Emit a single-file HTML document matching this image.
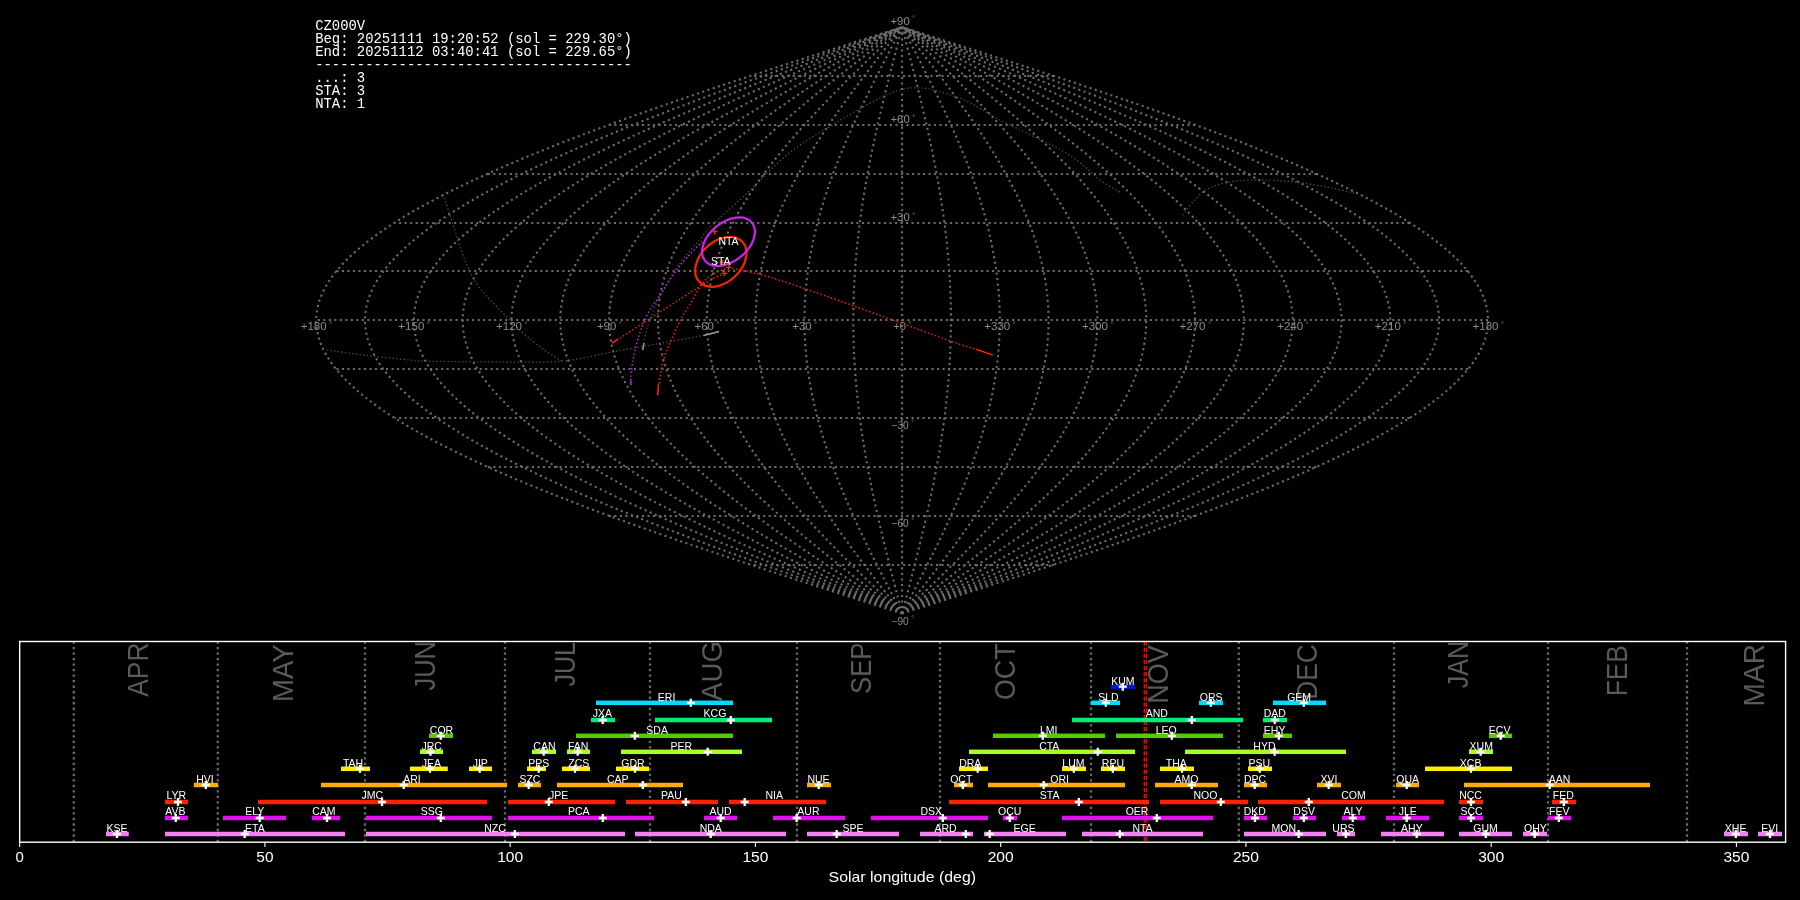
<!DOCTYPE html><html><head><meta charset="utf-8"><style>html,body{margin:0;padding:0;background:#000;width:1800px;height:900px;overflow:hidden}svg{display:block;will-change:transform}text{font-family:"Liberation Sans",sans-serif}.mono{font-family:"Liberation Mono",monospace}</style></head><body>
<svg width="1800" height="900" viewBox="0 0 1800 900">
<rect width="1800" height="900" fill="#000"/>
<path d="M902.1 613.55 L907.21 611.92 L912.33 610.29 L917.44 608.66 L922.55 607.03 L927.66 605.4 L932.76 603.77 L937.87 602.14 L942.97 600.51 L948.07 598.88 L953.16 597.26 L958.26 595.63 L963.34 594 L968.43 592.37 L973.5 590.74 L978.58 589.11 L983.64 587.48 L988.7 585.85 L993.75 584.22 L998.8 582.59 L1003.84 580.96 L1008.87 579.33 L1013.89 577.71 L1018.91 576.08 L1023.92 574.45 L1028.91 572.82 L1033.9 571.19 L1038.88 569.56 L1043.84 567.93 L1048.8 566.3 L1053.74 564.67 L1058.67 563.04 L1063.6 561.41 L1068.5 559.79 L1073.4 558.16 L1078.28 556.53 L1083.15 554.9 L1088.01 553.27 L1092.85 551.64 L1097.68 550.01 L1102.49 548.38 L1107.29 546.75 L1112.07 545.12 L1116.83 543.49 L1121.58 541.86 L1126.31 540.24 L1131.03 538.61 L1135.73 536.98 L1140.41 535.35 L1145.07 533.72 L1149.71 532.09 L1154.34 530.46 L1158.94 528.83 L1163.53 527.2 L1168.09 525.57 L1172.64 523.94 L1177.16 522.31 L1181.67 520.69 L1186.15 519.06 L1190.61 517.43 L1195.05 515.8 L1199.47 514.17 L1203.86 512.54 L1208.23 510.91 L1212.58 509.28 L1216.9 507.65 L1221.2 506.02 L1225.48 504.39 L1229.73 502.76 L1233.96 501.14 L1238.16 499.51 L1242.33 497.88 L1246.48 496.25 L1250.61 494.62 L1254.7 492.99 L1258.77 491.36 L1262.82 489.73 L1266.83 488.1 L1270.82 486.47 L1274.78 484.84 L1278.71 483.22 L1282.61 481.59 L1286.48 479.96 L1290.33 478.33 L1294.14 476.7 L1297.93 475.07 L1301.68 473.44 L1305.41 471.81 L1309.1 470.18 L1312.76 468.55 L1316.39 466.92 L1319.99 465.29 L1323.56 463.67 L1327.1 462.04 L1330.6 460.41 L1334.07 458.78 L1337.51 457.15 L1340.91 455.52 L1344.28 453.89 L1347.62 452.26 L1350.93 450.63 L1354.19 449 L1357.43 447.37 L1360.63 445.74 L1363.8 444.12 L1366.93 442.49 L1370.02 440.86 L1373.08 439.23 L1376.1 437.6 L1379.09 435.97 L1382.04 434.34 L1384.96 432.71 L1387.83 431.08 L1390.67 429.45 L1393.48 427.82 L1396.24 426.19 L1398.97 424.57 L1401.66 422.94 L1404.31 421.31 L1406.93 419.68 L1409.5 418.05 L1412.04 416.42 L1414.54 414.79 L1417 413.16 L1419.42 411.53 L1421.8 409.9 L1424.14 408.27 L1426.44 406.64 L1428.7 405.02 L1430.92 403.39 L1433.11 401.76 L1435.25 400.13 L1437.35 398.5 L1439.41 396.87 L1441.42 395.24 L1443.4 393.61 L1445.34 391.98 L1447.23 390.35 L1449.08 388.72 L1450.9 387.1 L1452.67 385.47 L1454.39 383.84 L1456.08 382.21 L1457.72 380.58 L1459.32 378.95 L1460.88 377.32 L1462.4 375.69 L1463.87 374.06 L1465.3 372.43 L1466.69 370.8 L1468.04 369.17 L1469.34 367.55 L1470.6 365.92 L1471.81 364.29 L1472.98 362.66 L1474.11 361.03 L1475.2 359.4 L1476.24 357.77 L1477.24 356.14 L1478.19 354.51 L1479.1 352.88 L1479.96 351.25 L1480.79 349.62 L1481.56 348 L1482.3 346.37 L1482.99 344.74 L1483.63 343.11 L1484.23 341.48 L1484.79 339.85 L1485.3 338.22 L1485.77 336.59 L1486.19 334.96 L1486.57 333.33 L1486.91 331.7 L1487.2 330.07 L1487.44 328.45 L1487.64 326.82 L1487.8 325.19 L1487.91 323.56 L1487.98 321.93 L1488 320.3 L1487.98 318.67 L1487.91 317.04 L1487.8 315.41 L1487.64 313.78 L1487.44 312.15 L1487.2 310.53 L1486.91 308.9 L1486.57 307.27 L1486.19 305.64 L1485.77 304.01 L1485.3 302.38 L1484.79 300.75 L1484.23 299.12 L1483.63 297.49 L1482.99 295.86 L1482.3 294.23 L1481.56 292.6 L1480.79 290.98 L1479.96 289.35 L1479.1 287.72 L1478.19 286.09 L1477.24 284.46 L1476.24 282.83 L1475.2 281.2 L1474.11 279.57 L1472.98 277.94 L1471.81 276.31 L1470.6 274.68 L1469.34 273.05 L1468.04 271.43 L1466.69 269.8 L1465.3 268.17 L1463.87 266.54 L1462.4 264.91 L1460.88 263.28 L1459.32 261.65 L1457.72 260.02 L1456.08 258.39 L1454.39 256.76 L1452.67 255.13 L1450.9 253.5 L1449.08 251.88 L1447.23 250.25 L1445.34 248.62 L1443.4 246.99 L1441.42 245.36 L1439.41 243.73 L1437.35 242.1 L1435.25 240.47 L1433.11 238.84 L1430.92 237.21 L1428.7 235.58 L1426.44 233.96 L1424.14 232.33 L1421.8 230.7 L1419.42 229.07 L1417 227.44 L1414.54 225.81 L1412.04 224.18 L1409.5 222.55 L1406.93 220.92 L1404.31 219.29 L1401.66 217.66 L1398.97 216.03 L1396.24 214.41 L1393.48 212.78 L1390.67 211.15 L1387.83 209.52 L1384.96 207.89 L1382.04 206.26 L1379.09 204.63 L1376.1 203 L1373.08 201.37 L1370.02 199.74 L1366.93 198.11 L1363.8 196.48 L1360.63 194.86 L1357.43 193.23 L1354.19 191.6 L1350.93 189.97 L1347.62 188.34 L1344.28 186.71 L1340.91 185.08 L1337.51 183.45 L1334.07 181.82 L1330.6 180.19 L1327.1 178.56 L1323.56 176.93 L1319.99 175.31 L1316.39 173.68 L1312.76 172.05 L1309.1 170.42 L1305.41 168.79 L1301.68 167.16 L1297.93 165.53 L1294.14 163.9 L1290.33 162.27 L1286.48 160.64 L1282.61 159.01 L1278.71 157.38 L1274.78 155.76 L1270.82 154.13 L1266.83 152.5 L1262.82 150.87 L1258.77 149.24 L1254.7 147.61 L1250.61 145.98 L1246.48 144.35 L1242.33 142.72 L1238.16 141.09 L1233.96 139.46 L1229.73 137.84 L1225.48 136.21 L1221.2 134.58 L1216.9 132.95 L1212.58 131.32 L1208.23 129.69 L1203.86 128.06 L1199.47 126.43 L1195.05 124.8 L1190.61 123.17 L1186.15 121.54 L1181.67 119.91 L1177.16 118.29 L1172.64 116.66 L1168.09 115.03 L1163.53 113.4 L1158.94 111.77 L1154.34 110.14 L1149.71 108.51 L1145.07 106.88 L1140.41 105.25 L1135.73 103.62 L1131.03 101.99 L1126.31 100.36 L1121.58 98.74 L1116.83 97.11 L1112.07 95.48 L1107.29 93.85 L1102.49 92.22 L1097.68 90.59 L1092.85 88.96 L1088.01 87.33 L1083.15 85.7 L1078.28 84.07 L1073.4 82.44 L1068.5 80.81 L1063.6 79.19 L1058.67 77.56 L1053.74 75.93 L1048.8 74.3 L1043.84 72.67 L1038.88 71.04 L1033.9 69.41 L1028.91 67.78 L1023.92 66.15 L1018.91 64.52 L1013.89 62.89 L1008.87 61.27 L1003.84 59.64 L998.8 58.01 L993.75 56.38 L988.7 54.75 L983.64 53.12 L978.58 51.49 L973.5 49.86 L968.43 48.23 L963.34 46.6 L958.26 44.97 L953.16 43.34 L948.07 41.72 L942.97 40.09 L937.87 38.46 L932.76 36.83 L927.66 35.2 L922.55 33.57 L917.44 31.94 L912.33 30.31 L907.21 28.68 L902.1 27.05 M902.1 613.55 L906.79 611.92 L911.47 610.29 L916.16 608.66 L920.84 607.03 L925.53 605.4 L930.21 603.77 L934.89 602.14 L939.56 600.51 L944.24 598.88 L948.91 597.26 L953.58 595.63 L958.24 594 L962.9 592.37 L967.55 590.74 L972.2 589.11 L976.85 587.48 L981.48 585.85 L986.12 584.22 L990.74 582.59 L995.36 580.96 L999.97 579.33 L1004.58 577.71 L1009.18 576.08 L1013.76 574.45 L1018.34 572.82 L1022.92 571.19 L1027.48 569.56 L1032.03 567.93 L1036.57 566.3 L1041.11 564.67 L1045.63 563.04 L1050.14 561.41 L1054.64 559.79 L1059.13 558.16 L1063.6 556.53 L1068.07 554.9 L1072.52 553.27 L1076.95 551.64 L1081.38 550.01 L1085.79 548.38 L1090.19 546.75 L1094.57 545.12 L1098.94 543.49 L1103.29 541.86 L1107.63 540.24 L1111.95 538.61 L1116.26 536.98 L1120.55 535.35 L1124.82 533.72 L1129.08 532.09 L1133.32 530.46 L1137.54 528.83 L1141.74 527.2 L1145.93 525.57 L1150.09 523.94 L1154.24 522.31 L1158.37 520.69 L1162.48 519.06 L1166.57 517.43 L1170.64 515.8 L1174.69 514.17 L1178.71 512.54 L1182.72 510.91 L1186.71 509.28 L1190.67 507.65 L1194.61 506.02 L1198.53 504.39 L1202.43 502.76 L1206.3 501.14 L1210.15 499.51 L1213.98 497.88 L1217.78 496.25 L1221.56 494.62 L1225.32 492.99 L1229.05 491.36 L1232.76 489.73 L1236.44 488.1 L1240.09 486.47 L1243.72 484.84 L1247.33 483.22 L1250.9 481.59 L1254.45 479.96 L1257.98 478.33 L1261.47 476.7 L1264.94 475.07 L1268.38 473.44 L1271.8 471.81 L1275.18 470.18 L1278.54 468.55 L1281.87 466.92 L1285.17 465.29 L1288.44 463.67 L1291.68 462.04 L1294.89 460.41 L1298.07 458.78 L1301.22 457.15 L1304.35 455.52 L1307.44 453.89 L1310.5 452.26 L1313.52 450.63 L1316.52 449 L1319.49 447.37 L1322.42 445.74 L1325.32 444.12 L1328.19 442.49 L1331.03 440.86 L1333.83 439.23 L1336.6 437.6 L1339.34 435.97 L1342.05 434.34 L1344.72 432.71 L1347.36 431.08 L1349.96 429.45 L1352.53 427.82 L1355.06 426.19 L1357.57 424.57 L1360.03 422.94 L1362.46 421.31 L1364.86 419.68 L1367.22 418.05 L1369.55 416.42 L1371.84 414.79 L1374.09 413.16 L1376.31 411.53 L1378.49 409.9 L1380.64 408.27 L1382.75 406.64 L1384.82 405.02 L1386.86 403.39 L1388.86 401.76 L1390.82 400.13 L1392.74 398.5 L1394.63 396.87 L1396.48 395.24 L1398.29 393.61 L1400.07 391.98 L1401.8 390.35 L1403.5 388.72 L1405.16 387.1 L1406.79 385.47 L1408.37 383.84 L1409.91 382.21 L1411.42 380.58 L1412.89 378.95 L1414.32 377.32 L1415.71 375.69 L1417.06 374.06 L1418.37 372.43 L1419.64 370.8 L1420.87 369.17 L1422.07 367.55 L1423.22 365.92 L1424.34 364.29 L1425.41 362.66 L1426.44 361.03 L1427.44 359.4 L1428.39 357.77 L1429.31 356.14 L1430.18 354.51 L1431.02 352.88 L1431.81 351.25 L1432.56 349.62 L1433.28 348 L1433.95 346.37 L1434.58 344.74 L1435.17 343.11 L1435.72 341.48 L1436.23 339.85 L1436.7 338.22 L1437.13 336.59 L1437.52 334.96 L1437.87 333.33 L1438.17 331.7 L1438.44 330.07 L1438.66 328.45 L1438.85 326.82 L1438.99 325.19 L1439.09 323.56 L1439.15 321.93 L1439.17 320.3 L1439.15 318.67 L1439.09 317.04 L1438.99 315.41 L1438.85 313.78 L1438.66 312.15 L1438.44 310.53 L1438.17 308.9 L1437.87 307.27 L1437.52 305.64 L1437.13 304.01 L1436.7 302.38 L1436.23 300.75 L1435.72 299.12 L1435.17 297.49 L1434.58 295.86 L1433.95 294.23 L1433.28 292.6 L1432.56 290.98 L1431.81 289.35 L1431.02 287.72 L1430.18 286.09 L1429.31 284.46 L1428.39 282.83 L1427.44 281.2 L1426.44 279.57 L1425.41 277.94 L1424.34 276.31 L1423.22 274.68 L1422.07 273.05 L1420.87 271.43 L1419.64 269.8 L1418.37 268.17 L1417.06 266.54 L1415.71 264.91 L1414.32 263.28 L1412.89 261.65 L1411.42 260.02 L1409.91 258.39 L1408.37 256.76 L1406.79 255.13 L1405.16 253.5 L1403.5 251.88 L1401.8 250.25 L1400.07 248.62 L1398.29 246.99 L1396.48 245.36 L1394.63 243.73 L1392.74 242.1 L1390.82 240.47 L1388.86 238.84 L1386.86 237.21 L1384.82 235.58 L1382.75 233.96 L1380.64 232.33 L1378.49 230.7 L1376.31 229.07 L1374.09 227.44 L1371.84 225.81 L1369.55 224.18 L1367.22 222.55 L1364.86 220.92 L1362.46 219.29 L1360.03 217.66 L1357.57 216.03 L1355.06 214.41 L1352.53 212.78 L1349.96 211.15 L1347.36 209.52 L1344.72 207.89 L1342.05 206.26 L1339.34 204.63 L1336.6 203 L1333.83 201.37 L1331.03 199.74 L1328.19 198.11 L1325.32 196.48 L1322.42 194.86 L1319.49 193.23 L1316.52 191.6 L1313.52 189.97 L1310.5 188.34 L1307.44 186.71 L1304.35 185.08 L1301.22 183.45 L1298.07 181.82 L1294.89 180.19 L1291.68 178.56 L1288.44 176.93 L1285.17 175.31 L1281.87 173.68 L1278.54 172.05 L1275.18 170.42 L1271.8 168.79 L1268.38 167.16 L1264.94 165.53 L1261.47 163.9 L1257.98 162.27 L1254.45 160.64 L1250.9 159.01 L1247.33 157.38 L1243.72 155.76 L1240.09 154.13 L1236.44 152.5 L1232.76 150.87 L1229.05 149.24 L1225.32 147.61 L1221.56 145.98 L1217.78 144.35 L1213.98 142.72 L1210.15 141.09 L1206.3 139.46 L1202.43 137.84 L1198.53 136.21 L1194.61 134.58 L1190.67 132.95 L1186.71 131.32 L1182.72 129.69 L1178.71 128.06 L1174.69 126.43 L1170.64 124.8 L1166.57 123.17 L1162.48 121.54 L1158.37 119.91 L1154.24 118.29 L1150.09 116.66 L1145.93 115.03 L1141.74 113.4 L1137.54 111.77 L1133.32 110.14 L1129.08 108.51 L1124.82 106.88 L1120.55 105.25 L1116.26 103.62 L1111.95 101.99 L1107.63 100.36 L1103.29 98.74 L1098.94 97.11 L1094.57 95.48 L1090.19 93.85 L1085.79 92.22 L1081.38 90.59 L1076.95 88.96 L1072.52 87.33 L1068.07 85.7 L1063.6 84.07 L1059.13 82.44 L1054.64 80.81 L1050.14 79.19 L1045.63 77.56 L1041.11 75.93 L1036.57 74.3 L1032.03 72.67 L1027.48 71.04 L1022.92 69.41 L1018.34 67.78 L1013.76 66.15 L1009.18 64.52 L1004.58 62.89 L999.97 61.27 L995.36 59.64 L990.74 58.01 L986.12 56.38 L981.48 54.75 L976.85 53.12 L972.2 51.49 L967.55 49.86 L962.9 48.23 L958.24 46.6 L953.58 44.97 L948.91 43.34 L944.24 41.72 L939.56 40.09 L934.89 38.46 L930.21 36.83 L925.53 35.2 L920.84 33.57 L916.16 31.94 L911.47 30.31 L906.79 28.68 L902.1 27.05 M902.1 613.55 L906.36 611.92 L910.62 610.29 L914.88 608.66 L919.14 607.03 L923.4 605.4 L927.65 603.77 L931.91 602.14 L936.16 600.51 L940.41 598.88 L944.65 597.26 L948.9 595.63 L953.14 594 L957.37 592.37 L961.6 590.74 L965.83 589.11 L970.05 587.48 L974.27 585.85 L978.48 584.22 L982.68 582.59 L986.88 580.96 L991.08 579.33 L995.26 577.71 L999.44 576.08 L1003.61 574.45 L1007.78 572.82 L1011.93 571.19 L1016.08 569.56 L1020.22 567.93 L1024.35 566.3 L1028.47 564.67 L1032.58 563.04 L1036.68 561.41 L1040.77 559.79 L1044.85 558.16 L1048.92 556.53 L1052.98 554.9 L1057.02 553.27 L1061.06 551.64 L1065.08 550.01 L1069.09 548.38 L1073.09 546.75 L1077.07 545.12 L1081.04 543.49 L1085 541.86 L1088.95 540.24 L1092.87 538.61 L1096.79 536.98 L1100.69 535.35 L1104.57 533.72 L1108.44 532.09 L1112.3 530.46 L1116.13 528.83 L1119.96 527.2 L1123.76 525.57 L1127.55 523.94 L1131.32 522.31 L1135.07 520.69 L1138.81 519.06 L1142.53 517.43 L1146.23 515.8 L1149.91 514.17 L1153.57 512.54 L1157.21 510.91 L1160.83 509.28 L1164.44 507.65 L1168.02 506.02 L1171.58 504.39 L1175.13 502.76 L1178.65 501.14 L1182.15 499.51 L1185.63 497.88 L1189.09 496.25 L1192.52 494.62 L1195.94 492.99 L1199.33 491.36 L1202.7 489.73 L1206.04 488.1 L1209.37 486.47 L1212.67 484.84 L1215.94 483.22 L1219.19 481.59 L1222.42 479.96 L1225.62 478.33 L1228.8 476.7 L1231.96 475.07 L1235.09 473.44 L1238.19 471.81 L1241.27 470.18 L1244.32 468.55 L1247.34 466.92 L1250.34 465.29 L1253.32 463.67 L1256.26 462.04 L1259.18 460.41 L1262.08 458.78 L1264.94 457.15 L1267.78 455.52 L1270.59 453.89 L1273.37 452.26 L1276.12 450.63 L1278.85 449 L1281.54 447.37 L1284.21 445.74 L1286.85 444.12 L1289.45 442.49 L1292.03 440.86 L1294.58 439.23 L1297.1 437.6 L1299.59 435.97 L1302.05 434.34 L1304.48 432.71 L1306.88 431.08 L1309.24 429.45 L1311.58 427.82 L1313.89 426.19 L1316.16 424.57 L1318.4 422.94 L1320.61 421.31 L1322.79 419.68 L1324.94 418.05 L1327.05 416.42 L1329.13 414.79 L1331.18 413.16 L1333.2 411.53 L1335.18 409.9 L1337.13 408.27 L1339.05 406.64 L1340.94 405.02 L1342.79 403.39 L1344.6 401.76 L1346.39 400.13 L1348.14 398.5 L1349.85 396.87 L1351.54 395.24 L1353.18 393.61 L1354.8 391.98 L1356.38 390.35 L1357.92 388.72 L1359.43 387.1 L1360.9 385.47 L1362.34 383.84 L1363.75 382.21 L1365.12 380.58 L1366.45 378.95 L1367.75 377.32 L1369.02 375.69 L1370.24 374.06 L1371.44 372.43 L1372.59 370.8 L1373.71 369.17 L1374.8 367.55 L1375.85 365.92 L1376.86 364.29 L1377.84 362.66 L1378.78 361.03 L1379.68 359.4 L1380.55 357.77 L1381.38 356.14 L1382.17 354.51 L1382.93 352.88 L1383.65 351.25 L1384.34 349.62 L1384.99 348 L1385.6 346.37 L1386.17 344.74 L1386.71 343.11 L1387.21 341.48 L1387.68 339.85 L1388.1 338.22 L1388.49 336.59 L1388.84 334.96 L1389.16 333.33 L1389.44 331.7 L1389.68 330.07 L1389.89 328.45 L1390.05 326.82 L1390.18 325.19 L1390.28 323.56 L1390.33 321.93 L1390.35 320.3 L1390.33 318.67 L1390.28 317.04 L1390.18 315.41 L1390.05 313.78 L1389.89 312.15 L1389.68 310.53 L1389.44 308.9 L1389.16 307.27 L1388.84 305.64 L1388.49 304.01 L1388.1 302.38 L1387.68 300.75 L1387.21 299.12 L1386.71 297.49 L1386.17 295.86 L1385.6 294.23 L1384.99 292.6 L1384.34 290.98 L1383.65 289.35 L1382.93 287.72 L1382.17 286.09 L1381.38 284.46 L1380.55 282.83 L1379.68 281.2 L1378.78 279.57 L1377.84 277.94 L1376.86 276.31 L1375.85 274.68 L1374.8 273.05 L1373.71 271.43 L1372.59 269.8 L1371.44 268.17 L1370.24 266.54 L1369.02 264.91 L1367.75 263.28 L1366.45 261.65 L1365.12 260.02 L1363.75 258.39 L1362.34 256.76 L1360.9 255.13 L1359.43 253.5 L1357.92 251.88 L1356.38 250.25 L1354.8 248.62 L1353.18 246.99 L1351.54 245.36 L1349.85 243.73 L1348.14 242.1 L1346.39 240.47 L1344.6 238.84 L1342.79 237.21 L1340.94 235.58 L1339.05 233.96 L1337.13 232.33 L1335.18 230.7 L1333.2 229.07 L1331.18 227.44 L1329.13 225.81 L1327.05 224.18 L1324.94 222.55 L1322.79 220.92 L1320.61 219.29 L1318.4 217.66 L1316.16 216.03 L1313.89 214.41 L1311.58 212.78 L1309.24 211.15 L1306.88 209.52 L1304.48 207.89 L1302.05 206.26 L1299.59 204.63 L1297.1 203 L1294.58 201.37 L1292.03 199.74 L1289.45 198.11 L1286.85 196.48 L1284.21 194.86 L1281.54 193.23 L1278.85 191.6 L1276.12 189.97 L1273.37 188.34 L1270.59 186.71 L1267.78 185.08 L1264.94 183.45 L1262.08 181.82 L1259.18 180.19 L1256.26 178.56 L1253.32 176.93 L1250.34 175.31 L1247.34 173.68 L1244.32 172.05 L1241.27 170.42 L1238.19 168.79 L1235.09 167.16 L1231.96 165.53 L1228.8 163.9 L1225.62 162.27 L1222.42 160.64 L1219.19 159.01 L1215.94 157.38 L1212.67 155.76 L1209.37 154.13 L1206.04 152.5 L1202.7 150.87 L1199.33 149.24 L1195.94 147.61 L1192.52 145.98 L1189.09 144.35 L1185.63 142.72 L1182.15 141.09 L1178.65 139.46 L1175.13 137.84 L1171.58 136.21 L1168.02 134.58 L1164.44 132.95 L1160.83 131.32 L1157.21 129.69 L1153.57 128.06 L1149.91 126.43 L1146.23 124.8 L1142.53 123.17 L1138.81 121.54 L1135.07 119.91 L1131.32 118.29 L1127.55 116.66 L1123.76 115.03 L1119.96 113.4 L1116.13 111.77 L1112.3 110.14 L1108.44 108.51 L1104.57 106.88 L1100.69 105.25 L1096.79 103.62 L1092.87 101.99 L1088.95 100.36 L1085 98.74 L1081.04 97.11 L1077.07 95.48 L1073.09 93.85 L1069.09 92.22 L1065.08 90.59 L1061.06 88.96 L1057.02 87.33 L1052.98 85.7 L1048.92 84.07 L1044.85 82.44 L1040.77 80.81 L1036.68 79.19 L1032.58 77.56 L1028.47 75.93 L1024.35 74.3 L1020.22 72.67 L1016.08 71.04 L1011.93 69.41 L1007.78 67.78 L1003.61 66.15 L999.44 64.52 L995.26 62.89 L991.08 61.27 L986.88 59.64 L982.68 58.01 L978.48 56.38 L974.27 54.75 L970.05 53.12 L965.83 51.49 L961.6 49.86 L957.37 48.23 L953.14 46.6 L948.9 44.97 L944.65 43.34 L940.41 41.72 L936.16 40.09 L931.91 38.46 L927.65 36.83 L923.4 35.2 L919.14 33.57 L914.88 31.94 L910.62 30.31 L906.36 28.68 L902.1 27.05 M902.1 613.55 L905.93 611.92 L909.77 610.29 L913.6 608.66 L917.44 607.03 L921.27 605.4 L925.1 603.77 L928.93 602.14 L932.75 600.51 L936.58 598.88 L940.4 597.26 L944.22 595.63 L948.03 594 L951.84 592.37 L955.65 590.74 L959.46 589.11 L963.26 587.48 L967.05 585.85 L970.84 584.22 L974.63 582.59 L978.41 580.96 L982.18 579.33 L985.95 577.71 L989.71 576.08 L993.46 574.45 L997.21 572.82 L1000.95 571.19 L1004.68 569.56 L1008.41 567.93 L1012.12 566.3 L1015.83 564.67 L1019.53 563.04 L1023.22 561.41 L1026.9 559.79 L1030.58 558.16 L1034.24 556.53 L1037.89 554.9 L1041.53 553.27 L1045.16 551.64 L1048.78 550.01 L1052.39 548.38 L1055.99 546.75 L1059.58 545.12 L1063.15 543.49 L1066.71 541.86 L1070.26 540.24 L1073.8 538.61 L1077.32 536.98 L1080.83 535.35 L1084.33 533.72 L1087.81 532.09 L1091.28 530.46 L1094.73 528.83 L1098.17 527.2 L1101.59 525.57 L1105 523.94 L1108.4 522.31 L1111.78 520.69 L1115.14 519.06 L1118.48 517.43 L1121.81 515.8 L1125.13 514.17 L1128.42 512.54 L1131.7 510.91 L1134.96 509.28 L1138.2 507.65 L1141.43 506.02 L1144.63 504.39 L1147.82 502.76 L1150.99 501.14 L1154.14 499.51 L1157.28 497.88 L1160.39 496.25 L1163.48 494.62 L1166.55 492.99 L1169.6 491.36 L1172.64 489.73 L1175.65 488.1 L1178.64 486.47 L1181.61 484.84 L1184.56 483.22 L1187.48 481.59 L1190.39 479.96 L1193.27 478.33 L1196.13 476.7 L1198.97 475.07 L1201.79 473.44 L1204.58 471.81 L1207.35 470.18 L1210.1 468.55 L1212.82 466.92 L1215.52 465.29 L1218.2 463.67 L1220.85 462.04 L1223.48 460.41 L1226.08 458.78 L1228.66 457.15 L1231.21 455.52 L1233.74 453.89 L1236.24 452.26 L1238.72 450.63 L1241.17 449 L1243.6 447.37 L1246 445.74 L1248.37 444.12 L1250.72 442.49 L1253.04 440.86 L1255.33 439.23 L1257.6 437.6 L1259.84 435.97 L1262.06 434.34 L1264.24 432.71 L1266.4 431.08 L1268.53 429.45 L1270.63 427.82 L1272.71 426.19 L1274.75 424.57 L1276.77 422.94 L1278.76 421.31 L1280.72 419.68 L1282.65 418.05 L1284.56 416.42 L1286.43 414.79 L1288.27 413.16 L1290.09 411.53 L1291.87 409.9 L1293.63 408.27 L1295.36 406.64 L1297.05 405.02 L1298.72 403.39 L1300.35 401.76 L1301.96 400.13 L1303.53 398.5 L1305.08 396.87 L1306.59 395.24 L1308.08 393.61 L1309.53 391.98 L1310.95 390.35 L1312.34 388.72 L1313.7 387.1 L1315.02 385.47 L1316.32 383.84 L1317.58 382.21 L1318.82 380.58 L1320.02 378.95 L1321.19 377.32 L1322.32 375.69 L1323.43 374.06 L1324.5 372.43 L1325.54 370.8 L1326.55 369.17 L1327.53 367.55 L1328.47 365.92 L1329.38 364.29 L1330.26 362.66 L1331.11 361.03 L1331.92 359.4 L1332.7 357.77 L1333.45 356.14 L1334.17 354.51 L1334.85 352.88 L1335.5 351.25 L1336.11 349.62 L1336.7 348 L1337.25 346.37 L1337.77 344.74 L1338.25 343.11 L1338.7 341.48 L1339.12 339.85 L1339.5 338.22 L1339.85 336.59 L1340.17 334.96 L1340.45 333.33 L1340.71 331.7 L1340.92 330.07 L1341.11 328.45 L1341.26 326.82 L1341.37 325.19 L1341.46 323.56 L1341.51 321.93 L1341.53 320.3 L1341.51 318.67 L1341.46 317.04 L1341.37 315.41 L1341.26 313.78 L1341.11 312.15 L1340.92 310.53 L1340.71 308.9 L1340.45 307.27 L1340.17 305.64 L1339.85 304.01 L1339.5 302.38 L1339.12 300.75 L1338.7 299.12 L1338.25 297.49 L1337.77 295.86 L1337.25 294.23 L1336.7 292.6 L1336.11 290.98 L1335.5 289.35 L1334.85 287.72 L1334.17 286.09 L1333.45 284.46 L1332.7 282.83 L1331.92 281.2 L1331.11 279.57 L1330.26 277.94 L1329.38 276.31 L1328.47 274.68 L1327.53 273.05 L1326.55 271.43 L1325.54 269.8 L1324.5 268.17 L1323.43 266.54 L1322.32 264.91 L1321.19 263.28 L1320.02 261.65 L1318.82 260.02 L1317.58 258.39 L1316.32 256.76 L1315.02 255.13 L1313.7 253.5 L1312.34 251.88 L1310.95 250.25 L1309.53 248.62 L1308.08 246.99 L1306.59 245.36 L1305.08 243.73 L1303.53 242.1 L1301.96 240.47 L1300.35 238.84 L1298.72 237.21 L1297.05 235.58 L1295.36 233.96 L1293.63 232.33 L1291.87 230.7 L1290.09 229.07 L1288.27 227.44 L1286.43 225.81 L1284.56 224.18 L1282.65 222.55 L1280.72 220.92 L1278.76 219.29 L1276.77 217.66 L1274.75 216.03 L1272.71 214.41 L1270.63 212.78 L1268.53 211.15 L1266.4 209.52 L1264.24 207.89 L1262.06 206.26 L1259.84 204.63 L1257.6 203 L1255.33 201.37 L1253.04 199.74 L1250.72 198.11 L1248.37 196.48 L1246 194.86 L1243.6 193.23 L1241.17 191.6 L1238.72 189.97 L1236.24 188.34 L1233.74 186.71 L1231.21 185.08 L1228.66 183.45 L1226.08 181.82 L1223.48 180.19 L1220.85 178.56 L1218.2 176.93 L1215.52 175.31 L1212.82 173.68 L1210.1 172.05 L1207.35 170.42 L1204.58 168.79 L1201.79 167.16 L1198.97 165.53 L1196.13 163.9 L1193.27 162.27 L1190.39 160.64 L1187.48 159.01 L1184.56 157.38 L1181.61 155.76 L1178.64 154.13 L1175.65 152.5 L1172.64 150.87 L1169.6 149.24 L1166.55 147.61 L1163.48 145.98 L1160.39 144.35 L1157.28 142.72 L1154.14 141.09 L1150.99 139.46 L1147.82 137.84 L1144.63 136.21 L1141.43 134.58 L1138.2 132.95 L1134.96 131.32 L1131.7 129.69 L1128.42 128.06 L1125.13 126.43 L1121.81 124.8 L1118.48 123.17 L1115.14 121.54 L1111.78 119.91 L1108.4 118.29 L1105 116.66 L1101.59 115.03 L1098.17 113.4 L1094.73 111.77 L1091.28 110.14 L1087.81 108.51 L1084.33 106.88 L1080.83 105.25 L1077.32 103.62 L1073.8 101.99 L1070.26 100.36 L1066.71 98.74 L1063.15 97.11 L1059.58 95.48 L1055.99 93.85 L1052.39 92.22 L1048.78 90.59 L1045.16 88.96 L1041.53 87.33 L1037.89 85.7 L1034.24 84.07 L1030.58 82.44 L1026.9 80.81 L1023.22 79.19 L1019.53 77.56 L1015.83 75.93 L1012.12 74.3 L1008.41 72.67 L1004.68 71.04 L1000.95 69.41 L997.21 67.78 L993.46 66.15 L989.71 64.52 L985.95 62.89 L982.18 61.27 L978.41 59.64 L974.63 58.01 L970.84 56.38 L967.05 54.75 L963.26 53.12 L959.46 51.49 L955.65 49.86 L951.84 48.23 L948.03 46.6 L944.22 44.97 L940.4 43.34 L936.58 41.72 L932.75 40.09 L928.93 38.46 L925.1 36.83 L921.27 35.2 L917.44 33.57 L913.6 31.94 L909.77 30.31 L905.93 28.68 L902.1 27.05 M902.1 613.55 L905.51 611.92 L908.92 610.29 L912.32 608.66 L915.73 607.03 L919.14 605.4 L922.54 603.77 L925.95 602.14 L929.35 600.51 L932.75 598.88 L936.14 597.26 L939.54 595.63 L942.93 594 L946.32 592.37 L949.7 590.74 L953.08 589.11 L956.46 587.48 L959.83 585.85 L963.2 584.22 L966.57 582.59 L969.93 580.96 L973.28 579.33 L976.63 577.71 L979.97 576.08 L983.31 574.45 L986.64 572.82 L989.97 571.19 L993.28 569.56 L996.59 567.93 L999.9 566.3 L1003.19 564.67 L1006.48 563.04 L1009.76 561.41 L1013.04 559.79 L1016.3 558.16 L1019.56 556.53 L1022.8 554.9 L1026.04 553.27 L1029.27 551.64 L1032.48 550.01 L1035.69 548.38 L1038.89 546.75 L1042.08 545.12 L1045.26 543.49 L1048.42 541.86 L1051.58 540.24 L1054.72 538.61 L1057.85 536.98 L1060.97 535.35 L1064.08 533.72 L1067.17 532.09 L1070.26 530.46 L1073.33 528.83 L1076.38 527.2 L1079.43 525.57 L1082.46 523.94 L1085.48 522.31 L1088.48 520.69 L1091.47 519.06 L1094.44 517.43 L1097.4 515.8 L1100.34 514.17 L1103.27 512.54 L1106.19 510.91 L1109.09 509.28 L1111.97 507.65 L1114.84 506.02 L1117.69 504.39 L1120.52 502.76 L1123.34 501.14 L1126.14 499.51 L1128.92 497.88 L1131.69 496.25 L1134.44 494.62 L1137.17 492.99 L1139.88 491.36 L1142.58 489.73 L1145.25 488.1 L1147.91 486.47 L1150.55 484.84 L1153.17 483.22 L1155.77 481.59 L1158.36 479.96 L1160.92 478.33 L1163.46 476.7 L1165.99 475.07 L1168.49 473.44 L1170.97 471.81 L1173.43 470.18 L1175.88 468.55 L1178.3 466.92 L1180.7 465.29 L1183.07 463.67 L1185.43 462.04 L1187.77 460.41 L1190.08 458.78 L1192.37 457.15 L1194.64 455.52 L1196.89 453.89 L1199.11 452.26 L1201.32 450.63 L1203.5 449 L1205.65 447.37 L1207.79 445.74 L1209.9 444.12 L1211.98 442.49 L1214.05 440.86 L1216.09 439.23 L1218.1 437.6 L1220.09 435.97 L1222.06 434.34 L1224 432.71 L1225.92 431.08 L1227.82 429.45 L1229.68 427.82 L1231.53 426.19 L1233.35 424.57 L1235.14 422.94 L1236.91 421.31 L1238.65 419.68 L1240.37 418.05 L1242.06 416.42 L1243.73 414.79 L1245.37 413.16 L1246.98 411.53 L1248.57 409.9 L1250.13 408.27 L1251.66 406.64 L1253.17 405.02 L1254.65 403.39 L1256.1 401.76 L1257.53 400.13 L1258.93 398.5 L1260.3 396.87 L1261.65 395.24 L1262.97 393.61 L1264.26 391.98 L1265.52 390.35 L1266.76 388.72 L1267.96 387.1 L1269.14 385.47 L1270.3 383.84 L1271.42 382.21 L1272.52 380.58 L1273.58 378.95 L1274.62 377.32 L1275.63 375.69 L1276.61 374.06 L1277.57 372.43 L1278.49 370.8 L1279.39 369.17 L1280.26 367.55 L1281.1 365.92 L1281.91 364.29 L1282.69 362.66 L1283.44 361.03 L1284.16 359.4 L1284.86 357.77 L1285.52 356.14 L1286.16 354.51 L1286.77 352.88 L1287.34 351.25 L1287.89 349.62 L1288.41 348 L1288.9 346.37 L1289.36 344.74 L1289.79 343.11 L1290.19 341.48 L1290.56 339.85 L1290.9 338.22 L1291.21 336.59 L1291.5 334.96 L1291.75 333.33 L1291.97 331.7 L1292.16 330.07 L1292.33 328.45 L1292.46 326.82 L1292.57 325.19 L1292.64 323.56 L1292.69 321.93 L1292.7 320.3 L1292.69 318.67 L1292.64 317.04 L1292.57 315.41 L1292.46 313.78 L1292.33 312.15 L1292.16 310.53 L1291.97 308.9 L1291.75 307.27 L1291.5 305.64 L1291.21 304.01 L1290.9 302.38 L1290.56 300.75 L1290.19 299.12 L1289.79 297.49 L1289.36 295.86 L1288.9 294.23 L1288.41 292.6 L1287.89 290.98 L1287.34 289.35 L1286.77 287.72 L1286.16 286.09 L1285.52 284.46 L1284.86 282.83 L1284.16 281.2 L1283.44 279.57 L1282.69 277.94 L1281.91 276.31 L1281.1 274.68 L1280.26 273.05 L1279.39 271.43 L1278.49 269.8 L1277.57 268.17 L1276.61 266.54 L1275.63 264.91 L1274.62 263.28 L1273.58 261.65 L1272.52 260.02 L1271.42 258.39 L1270.3 256.76 L1269.14 255.13 L1267.96 253.5 L1266.76 251.88 L1265.52 250.25 L1264.26 248.62 L1262.97 246.99 L1261.65 245.36 L1260.3 243.73 L1258.93 242.1 L1257.53 240.47 L1256.1 238.84 L1254.65 237.21 L1253.17 235.58 L1251.66 233.96 L1250.13 232.33 L1248.57 230.7 L1246.98 229.07 L1245.37 227.44 L1243.73 225.81 L1242.06 224.18 L1240.37 222.55 L1238.65 220.92 L1236.91 219.29 L1235.14 217.66 L1233.35 216.03 L1231.53 214.41 L1229.68 212.78 L1227.82 211.15 L1225.92 209.52 L1224 207.89 L1222.06 206.26 L1220.09 204.63 L1218.1 203 L1216.09 201.37 L1214.05 199.74 L1211.98 198.11 L1209.9 196.48 L1207.79 194.86 L1205.65 193.23 L1203.5 191.6 L1201.32 189.97 L1199.11 188.34 L1196.89 186.71 L1194.64 185.08 L1192.37 183.45 L1190.08 181.82 L1187.77 180.19 L1185.43 178.56 L1183.07 176.93 L1180.7 175.31 L1178.3 173.68 L1175.88 172.05 L1173.43 170.42 L1170.97 168.79 L1168.49 167.16 L1165.99 165.53 L1163.46 163.9 L1160.92 162.27 L1158.36 160.64 L1155.77 159.01 L1153.17 157.38 L1150.55 155.76 L1147.91 154.13 L1145.25 152.5 L1142.58 150.87 L1139.88 149.24 L1137.17 147.61 L1134.44 145.98 L1131.69 144.35 L1128.92 142.72 L1126.14 141.09 L1123.34 139.46 L1120.52 137.84 L1117.69 136.21 L1114.84 134.58 L1111.97 132.95 L1109.09 131.32 L1106.19 129.69 L1103.27 128.06 L1100.34 126.43 L1097.4 124.8 L1094.44 123.17 L1091.47 121.54 L1088.48 119.91 L1085.48 118.29 L1082.46 116.66 L1079.43 115.03 L1076.38 113.4 L1073.33 111.77 L1070.26 110.14 L1067.17 108.51 L1064.08 106.88 L1060.97 105.25 L1057.85 103.62 L1054.72 101.99 L1051.58 100.36 L1048.42 98.74 L1045.26 97.11 L1042.08 95.48 L1038.89 93.85 L1035.69 92.22 L1032.48 90.59 L1029.27 88.96 L1026.04 87.33 L1022.8 85.7 L1019.56 84.07 L1016.3 82.44 L1013.04 80.81 L1009.76 79.19 L1006.48 77.56 L1003.19 75.93 L999.9 74.3 L996.59 72.67 L993.28 71.04 L989.97 69.41 L986.64 67.78 L983.31 66.15 L979.97 64.52 L976.63 62.89 L973.28 61.27 L969.93 59.64 L966.57 58.01 L963.2 56.38 L959.83 54.75 L956.46 53.12 L953.08 51.49 L949.7 49.86 L946.32 48.23 L942.93 46.6 L939.54 44.97 L936.14 43.34 L932.75 41.72 L929.35 40.09 L925.95 38.46 L922.54 36.83 L919.14 35.2 L915.73 33.57 L912.32 31.94 L908.92 30.31 L905.51 28.68 L902.1 27.05 M902.1 613.55 L905.08 611.92 L908.06 610.29 L911.05 608.66 L914.03 607.03 L917.01 605.4 L919.99 603.77 L922.96 602.14 L925.94 600.51 L928.92 598.88 L931.89 597.26 L934.86 595.63 L937.83 594 L940.79 592.37 L943.75 590.74 L946.71 589.11 L949.67 587.48 L952.62 585.85 L955.57 584.22 L958.51 582.59 L961.45 580.96 L964.38 579.33 L967.31 577.71 L970.24 576.08 L973.16 574.45 L976.07 572.82 L978.98 571.19 L981.89 569.56 L984.78 567.93 L987.67 566.3 L990.56 564.67 L993.44 563.04 L996.31 561.41 L999.17 559.79 L1002.03 558.16 L1004.87 556.53 L1007.71 554.9 L1010.55 553.27 L1013.37 551.64 L1016.19 550.01 L1018.99 548.38 L1021.79 546.75 L1024.58 545.12 L1027.36 543.49 L1030.13 541.86 L1032.89 540.24 L1035.64 538.61 L1038.38 536.98 L1041.11 535.35 L1043.83 533.72 L1046.54 532.09 L1049.24 530.46 L1051.92 528.83 L1054.6 527.2 L1057.26 525.57 L1059.91 523.94 L1062.55 522.31 L1065.18 520.69 L1067.8 519.06 L1070.4 517.43 L1072.99 515.8 L1075.56 514.17 L1078.13 512.54 L1080.68 510.91 L1083.21 509.28 L1085.74 507.65 L1088.24 506.02 L1090.74 504.39 L1093.22 502.76 L1095.68 501.14 L1098.13 499.51 L1100.57 497.88 L1102.99 496.25 L1105.4 494.62 L1107.79 492.99 L1110.16 491.36 L1112.52 489.73 L1114.86 488.1 L1117.19 486.47 L1119.5 484.84 L1121.79 483.22 L1124.07 481.59 L1126.32 479.96 L1128.57 478.33 L1130.79 476.7 L1133 475.07 L1135.19 473.44 L1137.36 471.81 L1139.52 470.18 L1141.65 468.55 L1143.77 466.92 L1145.87 465.29 L1147.95 463.67 L1150.01 462.04 L1152.06 460.41 L1154.08 458.78 L1156.09 457.15 L1158.07 455.52 L1160.04 453.89 L1161.99 452.26 L1163.91 450.63 L1165.82 449 L1167.71 447.37 L1169.58 445.74 L1171.42 444.12 L1173.25 442.49 L1175.05 440.86 L1176.84 439.23 L1178.6 437.6 L1180.34 435.97 L1182.07 434.34 L1183.77 432.71 L1185.44 431.08 L1187.1 429.45 L1188.74 427.82 L1190.35 426.19 L1191.94 424.57 L1193.51 422.94 L1195.06 421.31 L1196.58 419.68 L1198.09 418.05 L1199.57 416.42 L1201.02 414.79 L1202.46 413.16 L1203.87 411.53 L1205.26 409.9 L1206.62 408.27 L1207.97 406.64 L1209.29 405.02 L1210.58 403.39 L1211.85 401.76 L1213.1 400.13 L1214.33 398.5 L1215.53 396.87 L1216.71 395.24 L1217.86 393.61 L1218.99 391.98 L1220.09 390.35 L1221.17 388.72 L1222.23 387.1 L1223.26 385.47 L1224.27 383.84 L1225.25 382.21 L1226.21 380.58 L1227.15 378.95 L1228.06 377.32 L1228.94 375.69 L1229.8 374.06 L1230.64 372.43 L1231.44 370.8 L1232.23 369.17 L1232.99 367.55 L1233.72 365.92 L1234.43 364.29 L1235.12 362.66 L1235.77 361.03 L1236.41 359.4 L1237.01 357.77 L1237.6 356.14 L1238.15 354.51 L1238.68 352.88 L1239.19 351.25 L1239.67 349.62 L1240.12 348 L1240.55 346.37 L1240.95 344.74 L1241.33 343.11 L1241.68 341.48 L1242 339.85 L1242.3 338.22 L1242.57 336.59 L1242.82 334.96 L1243.04 333.33 L1243.24 331.7 L1243.41 330.07 L1243.55 328.45 L1243.67 326.82 L1243.76 325.19 L1243.82 323.56 L1243.86 321.93 L1243.88 320.3 L1243.86 318.67 L1243.82 317.04 L1243.76 315.41 L1243.67 313.78 L1243.55 312.15 L1243.41 310.53 L1243.24 308.9 L1243.04 307.27 L1242.82 305.64 L1242.57 304.01 L1242.3 302.38 L1242 300.75 L1241.68 299.12 L1241.33 297.49 L1240.95 295.86 L1240.55 294.23 L1240.12 292.6 L1239.67 290.98 L1239.19 289.35 L1238.68 287.72 L1238.15 286.09 L1237.6 284.46 L1237.01 282.83 L1236.41 281.2 L1235.77 279.57 L1235.12 277.94 L1234.43 276.31 L1233.72 274.68 L1232.99 273.05 L1232.23 271.43 L1231.44 269.8 L1230.64 268.17 L1229.8 266.54 L1228.94 264.91 L1228.06 263.28 L1227.15 261.65 L1226.21 260.02 L1225.25 258.39 L1224.27 256.76 L1223.26 255.13 L1222.23 253.5 L1221.17 251.88 L1220.09 250.25 L1218.99 248.62 L1217.86 246.99 L1216.71 245.36 L1215.53 243.73 L1214.33 242.1 L1213.1 240.47 L1211.85 238.84 L1210.58 237.21 L1209.29 235.58 L1207.97 233.96 L1206.62 232.33 L1205.26 230.7 L1203.87 229.07 L1202.46 227.44 L1201.02 225.81 L1199.57 224.18 L1198.09 222.55 L1196.58 220.92 L1195.06 219.29 L1193.51 217.66 L1191.94 216.03 L1190.35 214.41 L1188.74 212.78 L1187.1 211.15 L1185.44 209.52 L1183.77 207.89 L1182.07 206.26 L1180.34 204.63 L1178.6 203 L1176.84 201.37 L1175.05 199.74 L1173.25 198.11 L1171.42 196.48 L1169.58 194.86 L1167.71 193.23 L1165.82 191.6 L1163.91 189.97 L1161.99 188.34 L1160.04 186.71 L1158.07 185.08 L1156.09 183.45 L1154.08 181.82 L1152.06 180.19 L1150.01 178.56 L1147.95 176.93 L1145.87 175.31 L1143.77 173.68 L1141.65 172.05 L1139.52 170.42 L1137.36 168.79 L1135.19 167.16 L1133 165.53 L1130.79 163.9 L1128.57 162.27 L1126.32 160.64 L1124.07 159.01 L1121.79 157.38 L1119.5 155.76 L1117.19 154.13 L1114.86 152.5 L1112.52 150.87 L1110.16 149.24 L1107.79 147.61 L1105.4 145.98 L1102.99 144.35 L1100.57 142.72 L1098.13 141.09 L1095.68 139.46 L1093.22 137.84 L1090.74 136.21 L1088.24 134.58 L1085.74 132.95 L1083.21 131.32 L1080.68 129.69 L1078.13 128.06 L1075.56 126.43 L1072.99 124.8 L1070.4 123.17 L1067.8 121.54 L1065.18 119.91 L1062.55 118.29 L1059.91 116.66 L1057.26 115.03 L1054.6 113.4 L1051.92 111.77 L1049.24 110.14 L1046.54 108.51 L1043.83 106.88 L1041.11 105.25 L1038.38 103.62 L1035.64 101.99 L1032.89 100.36 L1030.13 98.74 L1027.36 97.11 L1024.58 95.48 L1021.79 93.85 L1018.99 92.22 L1016.19 90.59 L1013.37 88.96 L1010.55 87.33 L1007.71 85.7 L1004.87 84.07 L1002.03 82.44 L999.17 80.81 L996.31 79.19 L993.44 77.56 L990.56 75.93 L987.67 74.3 L984.78 72.67 L981.89 71.04 L978.98 69.41 L976.07 67.78 L973.16 66.15 L970.24 64.52 L967.31 62.89 L964.38 61.27 L961.45 59.64 L958.51 58.01 L955.57 56.38 L952.62 54.75 L949.67 53.12 L946.71 51.49 L943.75 49.86 L940.79 48.23 L937.83 46.6 L934.86 44.97 L931.89 43.34 L928.92 41.72 L925.94 40.09 L922.96 38.46 L919.99 36.83 L917.01 35.2 L914.03 33.57 L911.05 31.94 L908.06 30.31 L905.08 28.68 L902.1 27.05 M902.1 613.55 L904.66 611.92 L907.21 610.29 L909.77 608.66 L912.32 607.03 L914.88 605.4 L917.43 603.77 L919.98 602.14 L922.54 600.51 L925.08 598.88 L927.63 597.26 L930.18 595.63 L932.72 594 L935.26 592.37 L937.8 590.74 L940.34 589.11 L942.87 587.48 L945.4 585.85 L947.93 584.22 L950.45 582.59 L952.97 580.96 L955.49 579.33 L958 577.71 L960.5 576.08 L963.01 574.45 L965.51 572.82 L968 571.19 L970.49 569.56 L972.97 567.93 L975.45 566.3 L977.92 564.67 L980.39 563.04 L982.85 561.41 L985.3 559.79 L987.75 558.16 L990.19 556.53 L992.63 554.9 L995.05 553.27 L997.48 551.64 L999.89 550.01 L1002.29 548.38 L1004.69 546.75 L1007.08 545.12 L1009.47 543.49 L1011.84 541.86 L1014.21 540.24 L1016.56 538.61 L1018.91 536.98 L1021.25 535.35 L1023.58 533.72 L1025.91 532.09 L1028.22 530.46 L1030.52 528.83 L1032.81 527.2 L1035.1 525.57 L1037.37 523.94 L1039.63 522.31 L1041.88 520.69 L1044.12 519.06 L1046.36 517.43 L1048.58 515.8 L1050.78 514.17 L1052.98 512.54 L1055.17 510.91 L1057.34 509.28 L1059.5 507.65 L1061.65 506.02 L1063.79 504.39 L1065.92 502.76 L1068.03 501.14 L1070.13 499.51 L1072.22 497.88 L1074.29 496.25 L1076.35 494.62 L1078.4 492.99 L1080.44 491.36 L1082.46 489.73 L1084.47 488.1 L1086.46 486.47 L1088.44 484.84 L1090.4 483.22 L1092.36 481.59 L1094.29 479.96 L1096.21 478.33 L1098.12 476.7 L1100.01 475.07 L1101.89 473.44 L1103.75 471.81 L1105.6 470.18 L1107.43 468.55 L1109.25 466.92 L1111.05 465.29 L1112.83 463.67 L1114.6 462.04 L1116.35 460.41 L1118.09 458.78 L1119.8 457.15 L1121.51 455.52 L1123.19 453.89 L1124.86 452.26 L1126.51 450.63 L1128.15 449 L1129.76 447.37 L1131.37 445.74 L1132.95 444.12 L1134.51 442.49 L1136.06 440.86 L1137.59 439.23 L1139.1 437.6 L1140.6 435.97 L1142.07 434.34 L1143.53 432.71 L1144.97 431.08 L1146.39 429.45 L1147.79 427.82 L1149.17 426.19 L1150.54 424.57 L1151.88 422.94 L1153.21 421.31 L1154.51 419.68 L1155.8 418.05 L1157.07 416.42 L1158.32 414.79 L1159.55 413.16 L1160.76 411.53 L1161.95 409.9 L1163.12 408.27 L1164.27 406.64 L1165.4 405.02 L1166.51 403.39 L1167.6 401.76 L1168.67 400.13 L1169.72 398.5 L1170.75 396.87 L1171.76 395.24 L1172.75 393.61 L1173.72 391.98 L1174.67 390.35 L1175.59 388.72 L1176.5 387.1 L1177.38 385.47 L1178.25 383.84 L1179.09 382.21 L1179.91 380.58 L1180.71 378.95 L1181.49 377.32 L1182.25 375.69 L1182.99 374.06 L1183.7 372.43 L1184.4 370.8 L1185.07 369.17 L1185.72 367.55 L1186.35 365.92 L1186.96 364.29 L1187.54 362.66 L1188.11 361.03 L1188.65 359.4 L1189.17 357.77 L1189.67 356.14 L1190.14 354.51 L1190.6 352.88 L1191.03 351.25 L1191.44 349.62 L1191.83 348 L1192.2 346.37 L1192.54 344.74 L1192.87 343.11 L1193.17 341.48 L1193.45 339.85 L1193.7 338.22 L1193.94 336.59 L1194.15 334.96 L1194.34 333.33 L1194.5 331.7 L1194.65 330.07 L1194.77 328.45 L1194.87 326.82 L1194.95 325.19 L1195.01 323.56 L1195.04 321.93 L1195.05 320.3 L1195.04 318.67 L1195.01 317.04 L1194.95 315.41 L1194.87 313.78 L1194.77 312.15 L1194.65 310.53 L1194.5 308.9 L1194.34 307.27 L1194.15 305.64 L1193.94 304.01 L1193.7 302.38 L1193.45 300.75 L1193.17 299.12 L1192.87 297.49 L1192.54 295.86 L1192.2 294.23 L1191.83 292.6 L1191.44 290.98 L1191.03 289.35 L1190.6 287.72 L1190.14 286.09 L1189.67 284.46 L1189.17 282.83 L1188.65 281.2 L1188.11 279.57 L1187.54 277.94 L1186.96 276.31 L1186.35 274.68 L1185.72 273.05 L1185.07 271.43 L1184.4 269.8 L1183.7 268.17 L1182.99 266.54 L1182.25 264.91 L1181.49 263.28 L1180.71 261.65 L1179.91 260.02 L1179.09 258.39 L1178.25 256.76 L1177.38 255.13 L1176.5 253.5 L1175.59 251.88 L1174.67 250.25 L1173.72 248.62 L1172.75 246.99 L1171.76 245.36 L1170.75 243.73 L1169.72 242.1 L1168.67 240.47 L1167.6 238.84 L1166.51 237.21 L1165.4 235.58 L1164.27 233.96 L1163.12 232.33 L1161.95 230.7 L1160.76 229.07 L1159.55 227.44 L1158.32 225.81 L1157.07 224.18 L1155.8 222.55 L1154.51 220.92 L1153.21 219.29 L1151.88 217.66 L1150.54 216.03 L1149.17 214.41 L1147.79 212.78 L1146.39 211.15 L1144.97 209.52 L1143.53 207.89 L1142.07 206.26 L1140.6 204.63 L1139.1 203 L1137.59 201.37 L1136.06 199.74 L1134.51 198.11 L1132.95 196.48 L1131.37 194.86 L1129.76 193.23 L1128.15 191.6 L1126.51 189.97 L1124.86 188.34 L1123.19 186.71 L1121.51 185.08 L1119.8 183.45 L1118.09 181.82 L1116.35 180.19 L1114.6 178.56 L1112.83 176.93 L1111.05 175.31 L1109.25 173.68 L1107.43 172.05 L1105.6 170.42 L1103.75 168.79 L1101.89 167.16 L1100.01 165.53 L1098.12 163.9 L1096.21 162.27 L1094.29 160.64 L1092.36 159.01 L1090.4 157.38 L1088.44 155.76 L1086.46 154.13 L1084.47 152.5 L1082.46 150.87 L1080.44 149.24 L1078.4 147.61 L1076.35 145.98 L1074.29 144.35 L1072.22 142.72 L1070.13 141.09 L1068.03 139.46 L1065.92 137.84 L1063.79 136.21 L1061.65 134.58 L1059.5 132.95 L1057.34 131.32 L1055.17 129.69 L1052.98 128.06 L1050.78 126.43 L1048.58 124.8 L1046.36 123.17 L1044.12 121.54 L1041.88 119.91 L1039.63 118.29 L1037.37 116.66 L1035.1 115.03 L1032.81 113.4 L1030.52 111.77 L1028.22 110.14 L1025.91 108.51 L1023.58 106.88 L1021.25 105.25 L1018.91 103.62 L1016.56 101.99 L1014.21 100.36 L1011.84 98.74 L1009.47 97.11 L1007.08 95.48 L1004.69 93.85 L1002.29 92.22 L999.89 90.59 L997.48 88.96 L995.05 87.33 L992.63 85.7 L990.19 84.07 L987.75 82.44 L985.3 80.81 L982.85 79.19 L980.39 77.56 L977.92 75.93 L975.45 74.3 L972.97 72.67 L970.49 71.04 L968 69.41 L965.51 67.78 L963.01 66.15 L960.5 64.52 L958 62.89 L955.49 61.27 L952.97 59.64 L950.45 58.01 L947.93 56.38 L945.4 54.75 L942.87 53.12 L940.34 51.49 L937.8 49.86 L935.26 48.23 L932.72 46.6 L930.18 44.97 L927.63 43.34 L925.08 41.72 L922.54 40.09 L919.98 38.46 L917.43 36.83 L914.88 35.2 L912.32 33.57 L909.77 31.94 L907.21 30.31 L904.66 28.68 L902.1 27.05 M902.1 613.55 L904.23 611.92 L906.36 610.29 L908.49 608.66 L910.62 607.03 L912.75 605.4 L914.88 603.77 L917 602.14 L919.13 600.51 L921.25 598.88 L923.38 597.26 L925.5 595.63 L927.62 594 L929.74 592.37 L931.85 590.74 L933.96 589.11 L936.08 587.48 L938.18 585.85 L940.29 584.22 L942.39 582.59 L944.49 580.96 L946.59 579.33 L948.68 577.71 L950.77 576.08 L952.86 574.45 L954.94 572.82 L957.02 571.19 L959.09 569.56 L961.16 567.93 L963.22 566.3 L965.28 564.67 L967.34 563.04 L969.39 561.41 L971.44 559.79 L973.48 558.16 L975.51 556.53 L977.54 554.9 L979.56 553.27 L981.58 551.64 L983.59 550.01 L985.6 548.38 L987.59 546.75 L989.59 545.12 L991.57 543.49 L993.55 541.86 L995.52 540.24 L997.49 538.61 L999.44 536.98 L1001.39 535.35 L1003.34 533.72 L1005.27 532.09 L1007.2 530.46 L1009.12 528.83 L1011.03 527.2 L1012.93 525.57 L1014.82 523.94 L1016.71 522.31 L1018.59 520.69 L1020.45 519.06 L1022.31 517.43 L1024.16 515.8 L1026 514.17 L1027.83 512.54 L1029.65 510.91 L1031.47 509.28 L1033.27 507.65 L1035.06 506.02 L1036.84 504.39 L1038.61 502.76 L1040.37 501.14 L1042.12 499.51 L1043.86 497.88 L1045.59 496.25 L1047.31 494.62 L1049.02 492.99 L1050.71 491.36 L1052.4 489.73 L1054.07 488.1 L1055.73 486.47 L1057.38 484.84 L1059.02 483.22 L1060.65 481.59 L1062.26 479.96 L1063.86 478.33 L1065.45 476.7 L1067.03 475.07 L1068.59 473.44 L1070.14 471.81 L1071.68 470.18 L1073.21 468.55 L1074.72 466.92 L1076.22 465.29 L1077.71 463.67 L1079.18 462.04 L1080.64 460.41 L1082.09 458.78 L1083.52 457.15 L1084.94 455.52 L1086.34 453.89 L1087.73 452.26 L1089.11 450.63 L1090.47 449 L1091.82 447.37 L1093.15 445.74 L1094.47 444.12 L1095.78 442.49 L1097.07 440.86 L1098.34 439.23 L1099.6 437.6 L1100.85 435.97 L1102.08 434.34 L1103.29 432.71 L1104.49 431.08 L1105.67 429.45 L1106.84 427.82 L1107.99 426.19 L1109.13 424.57 L1110.25 422.94 L1111.36 421.31 L1112.45 419.68 L1113.52 418.05 L1114.58 416.42 L1115.62 414.79 L1116.64 413.16 L1117.65 411.53 L1118.64 409.9 L1119.62 408.27 L1120.58 406.64 L1121.52 405.02 L1122.44 403.39 L1123.35 401.76 L1124.24 400.13 L1125.12 398.5 L1125.98 396.87 L1126.82 395.24 L1127.64 393.61 L1128.45 391.98 L1129.24 390.35 L1130.01 388.72 L1130.77 387.1 L1131.5 385.47 L1132.22 383.84 L1132.92 382.21 L1133.61 380.58 L1134.28 378.95 L1134.93 377.32 L1135.56 375.69 L1136.17 374.06 L1136.77 372.43 L1137.35 370.8 L1137.91 369.17 L1138.45 367.55 L1138.97 365.92 L1139.48 364.29 L1139.97 362.66 L1140.44 361.03 L1140.89 359.4 L1141.32 357.77 L1141.74 356.14 L1142.14 354.51 L1142.52 352.88 L1142.88 351.25 L1143.22 349.62 L1143.54 348 L1143.85 346.37 L1144.14 344.74 L1144.41 343.11 L1144.66 341.48 L1144.89 339.85 L1145.1 338.22 L1145.3 336.59 L1145.47 334.96 L1145.63 333.33 L1145.77 331.7 L1145.89 330.07 L1145.99 328.45 L1146.08 326.82 L1146.14 325.19 L1146.19 323.56 L1146.22 321.93 L1146.22 320.3 L1146.22 318.67 L1146.19 317.04 L1146.14 315.41 L1146.08 313.78 L1145.99 312.15 L1145.89 310.53 L1145.77 308.9 L1145.63 307.27 L1145.47 305.64 L1145.3 304.01 L1145.1 302.38 L1144.89 300.75 L1144.66 299.12 L1144.41 297.49 L1144.14 295.86 L1143.85 294.23 L1143.54 292.6 L1143.22 290.98 L1142.88 289.35 L1142.52 287.72 L1142.14 286.09 L1141.74 284.46 L1141.32 282.83 L1140.89 281.2 L1140.44 279.57 L1139.97 277.94 L1139.48 276.31 L1138.97 274.68 L1138.45 273.05 L1137.91 271.43 L1137.35 269.8 L1136.77 268.17 L1136.17 266.54 L1135.56 264.91 L1134.93 263.28 L1134.28 261.65 L1133.61 260.02 L1132.92 258.39 L1132.22 256.76 L1131.5 255.13 L1130.77 253.5 L1130.01 251.88 L1129.24 250.25 L1128.45 248.62 L1127.64 246.99 L1126.82 245.36 L1125.98 243.73 L1125.12 242.1 L1124.24 240.47 L1123.35 238.84 L1122.44 237.21 L1121.52 235.58 L1120.58 233.96 L1119.62 232.33 L1118.64 230.7 L1117.65 229.07 L1116.64 227.44 L1115.62 225.81 L1114.58 224.18 L1113.52 222.55 L1112.45 220.92 L1111.36 219.29 L1110.25 217.66 L1109.13 216.03 L1107.99 214.41 L1106.84 212.78 L1105.67 211.15 L1104.49 209.52 L1103.29 207.89 L1102.08 206.26 L1100.85 204.63 L1099.6 203 L1098.34 201.37 L1097.07 199.74 L1095.78 198.11 L1094.47 196.48 L1093.15 194.86 L1091.82 193.23 L1090.47 191.6 L1089.11 189.97 L1087.73 188.34 L1086.34 186.71 L1084.94 185.08 L1083.52 183.45 L1082.09 181.82 L1080.64 180.19 L1079.18 178.56 L1077.71 176.93 L1076.22 175.31 L1074.72 173.68 L1073.21 172.05 L1071.68 170.42 L1070.14 168.79 L1068.59 167.16 L1067.03 165.53 L1065.45 163.9 L1063.86 162.27 L1062.26 160.64 L1060.65 159.01 L1059.02 157.38 L1057.38 155.76 L1055.73 154.13 L1054.07 152.5 L1052.4 150.87 L1050.71 149.24 L1049.02 147.61 L1047.31 145.98 L1045.59 144.35 L1043.86 142.72 L1042.12 141.09 L1040.37 139.46 L1038.61 137.84 L1036.84 136.21 L1035.06 134.58 L1033.27 132.95 L1031.47 131.32 L1029.65 129.69 L1027.83 128.06 L1026 126.43 L1024.16 124.8 L1022.31 123.17 L1020.45 121.54 L1018.59 119.91 L1016.71 118.29 L1014.82 116.66 L1012.93 115.03 L1011.03 113.4 L1009.12 111.77 L1007.2 110.14 L1005.27 108.51 L1003.34 106.88 L1001.39 105.25 L999.44 103.62 L997.49 101.99 L995.52 100.36 L993.55 98.74 L991.57 97.11 L989.59 95.48 L987.59 93.85 L985.6 92.22 L983.59 90.59 L981.58 88.96 L979.56 87.33 L977.54 85.7 L975.51 84.07 L973.48 82.44 L971.44 80.81 L969.39 79.19 L967.34 77.56 L965.28 75.93 L963.22 74.3 L961.16 72.67 L959.09 71.04 L957.02 69.41 L954.94 67.78 L952.86 66.15 L950.77 64.52 L948.68 62.89 L946.59 61.27 L944.49 59.64 L942.39 58.01 L940.29 56.38 L938.18 54.75 L936.08 53.12 L933.96 51.49 L931.85 49.86 L929.74 48.23 L927.62 46.6 L925.5 44.97 L923.38 43.34 L921.25 41.72 L919.13 40.09 L917 38.46 L914.88 36.83 L912.75 35.2 L910.62 33.57 L908.49 31.94 L906.36 30.31 L904.23 28.68 L902.1 27.05 M902.1 613.55 L903.8 611.92 L905.51 610.29 L907.21 608.66 L908.92 607.03 L910.62 605.4 L912.32 603.77 L914.02 602.14 L915.72 600.51 L917.42 598.88 L919.12 597.26 L920.82 595.63 L922.51 594 L924.21 592.37 L925.9 590.74 L927.59 589.11 L929.28 587.48 L930.97 585.85 L932.65 584.22 L934.33 582.59 L936.01 580.96 L937.69 579.33 L939.36 577.71 L941.04 576.08 L942.71 574.45 L944.37 572.82 L946.03 571.19 L947.69 569.56 L949.35 567.93 L951 566.3 L952.65 564.67 L954.29 563.04 L955.93 561.41 L957.57 559.79 L959.2 558.16 L960.83 556.53 L962.45 554.9 L964.07 553.27 L965.68 551.64 L967.29 550.01 L968.9 548.38 L970.5 546.75 L972.09 545.12 L973.68 543.49 L975.26 541.86 L976.84 540.24 L978.41 538.61 L979.98 536.98 L981.54 535.35 L983.09 533.72 L984.64 532.09 L986.18 530.46 L987.71 528.83 L989.24 527.2 L990.76 525.57 L992.28 523.94 L993.79 522.31 L995.29 520.69 L996.78 519.06 L998.27 517.43 L999.75 515.8 L1001.22 514.17 L1002.69 512.54 L1004.14 510.91 L1005.59 509.28 L1007.03 507.65 L1008.47 506.02 L1009.89 504.39 L1011.31 502.76 L1012.72 501.14 L1014.12 499.51 L1015.51 497.88 L1016.89 496.25 L1018.27 494.62 L1019.63 492.99 L1020.99 491.36 L1022.34 489.73 L1023.68 488.1 L1025.01 486.47 L1026.33 484.84 L1027.64 483.22 L1028.94 481.59 L1030.23 479.96 L1031.51 478.33 L1032.78 476.7 L1034.04 475.07 L1035.29 473.44 L1036.54 471.81 L1037.77 470.18 L1038.99 468.55 L1040.2 466.92 L1041.4 465.29 L1042.59 463.67 L1043.77 462.04 L1044.93 460.41 L1046.09 458.78 L1047.24 457.15 L1048.37 455.52 L1049.49 453.89 L1050.61 452.26 L1051.71 450.63 L1052.8 449 L1053.88 447.37 L1054.94 445.74 L1056 444.12 L1057.04 442.49 L1058.07 440.86 L1059.09 439.23 L1060.1 437.6 L1061.1 435.97 L1062.08 434.34 L1063.05 432.71 L1064.01 431.08 L1064.96 429.45 L1065.89 427.82 L1066.81 426.19 L1067.72 424.57 L1068.62 422.94 L1069.5 421.31 L1070.38 419.68 L1071.23 418.05 L1072.08 416.42 L1072.91 414.79 L1073.73 413.16 L1074.54 411.53 L1075.33 409.9 L1076.11 408.27 L1076.88 406.64 L1077.63 405.02 L1078.37 403.39 L1079.1 401.76 L1079.82 400.13 L1080.52 398.5 L1081.2 396.87 L1081.87 395.24 L1082.53 393.61 L1083.18 391.98 L1083.81 390.35 L1084.43 388.72 L1085.03 387.1 L1085.62 385.47 L1086.2 383.84 L1086.76 382.21 L1087.31 380.58 L1087.84 378.95 L1088.36 377.32 L1088.87 375.69 L1089.36 374.06 L1089.83 372.43 L1090.3 370.8 L1090.75 369.17 L1091.18 367.55 L1091.6 365.92 L1092 364.29 L1092.39 362.66 L1092.77 361.03 L1093.13 359.4 L1093.48 357.77 L1093.81 356.14 L1094.13 354.51 L1094.43 352.88 L1094.72 351.25 L1095 349.62 L1095.25 348 L1095.5 346.37 L1095.73 344.74 L1095.94 343.11 L1096.14 341.48 L1096.33 339.85 L1096.5 338.22 L1096.66 336.59 L1096.8 334.96 L1096.92 333.33 L1097.04 331.7 L1097.13 330.07 L1097.21 328.45 L1097.28 326.82 L1097.33 325.19 L1097.37 323.56 L1097.39 321.93 L1097.4 320.3 L1097.39 318.67 L1097.37 317.04 L1097.33 315.41 L1097.28 313.78 L1097.21 312.15 L1097.13 310.53 L1097.04 308.9 L1096.92 307.27 L1096.8 305.64 L1096.66 304.01 L1096.5 302.38 L1096.33 300.75 L1096.14 299.12 L1095.94 297.49 L1095.73 295.86 L1095.5 294.23 L1095.25 292.6 L1095 290.98 L1094.72 289.35 L1094.43 287.72 L1094.13 286.09 L1093.81 284.46 L1093.48 282.83 L1093.13 281.2 L1092.77 279.57 L1092.39 277.94 L1092 276.31 L1091.6 274.68 L1091.18 273.05 L1090.75 271.43 L1090.3 269.8 L1089.83 268.17 L1089.36 266.54 L1088.87 264.91 L1088.36 263.28 L1087.84 261.65 L1087.31 260.02 L1086.76 258.39 L1086.2 256.76 L1085.62 255.13 L1085.03 253.5 L1084.43 251.88 L1083.81 250.25 L1083.18 248.62 L1082.53 246.99 L1081.87 245.36 L1081.2 243.73 L1080.52 242.1 L1079.82 240.47 L1079.1 238.84 L1078.37 237.21 L1077.63 235.58 L1076.88 233.96 L1076.11 232.33 L1075.33 230.7 L1074.54 229.07 L1073.73 227.44 L1072.91 225.81 L1072.08 224.18 L1071.23 222.55 L1070.38 220.92 L1069.5 219.29 L1068.62 217.66 L1067.72 216.03 L1066.81 214.41 L1065.89 212.78 L1064.96 211.15 L1064.01 209.52 L1063.05 207.89 L1062.08 206.26 L1061.1 204.63 L1060.1 203 L1059.09 201.37 L1058.07 199.74 L1057.04 198.11 L1056 196.48 L1054.94 194.86 L1053.88 193.23 L1052.8 191.6 L1051.71 189.97 L1050.61 188.34 L1049.49 186.71 L1048.37 185.08 L1047.24 183.45 L1046.09 181.82 L1044.93 180.19 L1043.77 178.56 L1042.59 176.93 L1041.4 175.31 L1040.2 173.68 L1038.99 172.05 L1037.77 170.42 L1036.54 168.79 L1035.29 167.16 L1034.04 165.53 L1032.78 163.9 L1031.51 162.27 L1030.23 160.64 L1028.94 159.01 L1027.64 157.38 L1026.33 155.76 L1025.01 154.13 L1023.68 152.5 L1022.34 150.87 L1020.99 149.24 L1019.63 147.61 L1018.27 145.98 L1016.89 144.35 L1015.51 142.72 L1014.12 141.09 L1012.72 139.46 L1011.31 137.84 L1009.89 136.21 L1008.47 134.58 L1007.03 132.95 L1005.59 131.32 L1004.14 129.69 L1002.69 128.06 L1001.22 126.43 L999.75 124.8 L998.27 123.17 L996.78 121.54 L995.29 119.91 L993.79 118.29 L992.28 116.66 L990.76 115.03 L989.24 113.4 L987.71 111.77 L986.18 110.14 L984.64 108.51 L983.09 106.88 L981.54 105.25 L979.98 103.62 L978.41 101.99 L976.84 100.36 L975.26 98.74 L973.68 97.11 L972.09 95.48 L970.5 93.85 L968.9 92.22 L967.29 90.59 L965.68 88.96 L964.07 87.33 L962.45 85.7 L960.83 84.07 L959.2 82.44 L957.57 80.81 L955.93 79.19 L954.29 77.56 L952.65 75.93 L951 74.3 L949.35 72.67 L947.69 71.04 L946.03 69.41 L944.37 67.78 L942.71 66.15 L941.04 64.52 L939.36 62.89 L937.69 61.27 L936.01 59.64 L934.33 58.01 L932.65 56.38 L930.97 54.75 L929.28 53.12 L927.59 51.49 L925.9 49.86 L924.21 48.23 L922.51 46.6 L920.82 44.97 L919.12 43.34 L917.42 41.72 L915.72 40.09 L914.02 38.46 L912.32 36.83 L910.62 35.2 L908.92 33.57 L907.21 31.94 L905.51 30.31 L903.8 28.68 L902.1 27.05 M902.1 613.55 L903.38 611.92 L904.66 610.29 L905.93 608.66 L907.21 607.03 L908.49 605.4 L909.77 603.77 L911.04 602.14 L912.32 600.51 L913.59 598.88 L914.87 597.26 L916.14 595.63 L917.41 594 L918.68 592.37 L919.95 590.74 L921.22 589.11 L922.49 587.48 L923.75 585.85 L925.01 584.22 L926.28 582.59 L927.54 580.96 L928.79 579.33 L930.05 577.71 L931.3 576.08 L932.55 574.45 L933.8 572.82 L935.05 571.19 L936.29 569.56 L937.54 567.93 L938.77 566.3 L940.01 564.67 L941.24 563.04 L942.47 561.41 L943.7 559.79 L944.93 558.16 L946.15 556.53 L947.36 554.9 L948.58 553.27 L949.79 551.64 L950.99 550.01 L952.2 548.38 L953.4 546.75 L954.59 545.12 L955.78 543.49 L956.97 541.86 L958.15 540.24 L959.33 538.61 L960.51 536.98 L961.68 535.35 L962.84 533.72 L964 532.09 L965.16 530.46 L966.31 528.83 L967.46 527.2 L968.6 525.57 L969.73 523.94 L970.87 522.31 L971.99 520.69 L973.11 519.06 L974.23 517.43 L975.34 515.8 L976.44 514.17 L977.54 512.54 L978.63 510.91 L979.72 509.28 L980.8 507.65 L981.88 506.02 L982.94 504.39 L984.01 502.76 L985.06 501.14 L986.11 499.51 L987.16 497.88 L988.2 496.25 L989.23 494.62 L990.25 492.99 L991.27 491.36 L992.28 489.73 L993.28 488.1 L994.28 486.47 L995.27 484.84 L996.25 483.22 L997.23 481.59 L998.2 479.96 L999.16 478.33 L1000.11 476.7 L1001.06 475.07 L1002 473.44 L1002.93 471.81 L1003.85 470.18 L1004.77 468.55 L1005.67 466.92 L1006.57 465.29 L1007.47 463.67 L1008.35 462.04 L1009.23 460.41 L1010.09 458.78 L1010.95 457.15 L1011.8 455.52 L1012.65 453.89 L1013.48 452.26 L1014.31 450.63 L1015.12 449 L1015.93 447.37 L1016.73 445.74 L1017.52 444.12 L1018.31 442.49 L1019.08 440.86 L1019.84 439.23 L1020.6 437.6 L1021.35 435.97 L1022.09 434.34 L1022.81 432.71 L1023.53 431.08 L1024.24 429.45 L1024.94 427.82 L1025.64 426.19 L1026.32 424.57 L1026.99 422.94 L1027.65 421.31 L1028.31 419.68 L1028.95 418.05 L1029.59 416.42 L1030.21 414.79 L1030.82 413.16 L1031.43 411.53 L1032.02 409.9 L1032.61 408.27 L1033.19 406.64 L1033.75 405.02 L1034.31 403.39 L1034.85 401.76 L1035.39 400.13 L1035.91 398.5 L1036.43 396.87 L1036.93 395.24 L1037.43 393.61 L1037.91 391.98 L1038.38 390.35 L1038.85 388.72 L1039.3 387.1 L1039.74 385.47 L1040.17 383.84 L1040.59 382.21 L1041.01 380.58 L1041.41 378.95 L1041.8 377.32 L1042.17 375.69 L1042.54 374.06 L1042.9 372.43 L1043.25 370.8 L1043.58 369.17 L1043.91 367.55 L1044.22 365.92 L1044.53 364.29 L1044.82 362.66 L1045.1 361.03 L1045.37 359.4 L1045.63 357.77 L1045.88 356.14 L1046.12 354.51 L1046.35 352.88 L1046.57 351.25 L1046.77 349.62 L1046.97 348 L1047.15 346.37 L1047.32 344.74 L1047.48 343.11 L1047.63 341.48 L1047.77 339.85 L1047.9 338.22 L1048.02 336.59 L1048.12 334.96 L1048.22 333.33 L1048.3 331.7 L1048.37 330.07 L1048.44 328.45 L1048.49 326.82 L1048.52 325.19 L1048.55 323.56 L1048.57 321.93 L1048.58 320.3 L1048.57 318.67 L1048.55 317.04 L1048.52 315.41 L1048.49 313.78 L1048.44 312.15 L1048.37 310.53 L1048.3 308.9 L1048.22 307.27 L1048.12 305.64 L1048.02 304.01 L1047.9 302.38 L1047.77 300.75 L1047.63 299.12 L1047.48 297.49 L1047.32 295.86 L1047.15 294.23 L1046.97 292.6 L1046.77 290.98 L1046.57 289.35 L1046.35 287.72 L1046.12 286.09 L1045.88 284.46 L1045.63 282.83 L1045.37 281.2 L1045.1 279.57 L1044.82 277.94 L1044.53 276.31 L1044.22 274.68 L1043.91 273.05 L1043.58 271.43 L1043.25 269.8 L1042.9 268.17 L1042.54 266.54 L1042.17 264.91 L1041.8 263.28 L1041.41 261.65 L1041.01 260.02 L1040.59 258.39 L1040.17 256.76 L1039.74 255.13 L1039.3 253.5 L1038.85 251.88 L1038.38 250.25 L1037.91 248.62 L1037.43 246.99 L1036.93 245.36 L1036.43 243.73 L1035.91 242.1 L1035.39 240.47 L1034.85 238.84 L1034.31 237.21 L1033.75 235.58 L1033.19 233.96 L1032.61 232.33 L1032.02 230.7 L1031.43 229.07 L1030.82 227.44 L1030.21 225.81 L1029.59 224.18 L1028.95 222.55 L1028.31 220.92 L1027.65 219.29 L1026.99 217.66 L1026.32 216.03 L1025.64 214.41 L1024.94 212.78 L1024.24 211.15 L1023.53 209.52 L1022.81 207.89 L1022.09 206.26 L1021.35 204.63 L1020.6 203 L1019.84 201.37 L1019.08 199.74 L1018.31 198.11 L1017.52 196.48 L1016.73 194.86 L1015.93 193.23 L1015.12 191.6 L1014.31 189.97 L1013.48 188.34 L1012.65 186.71 L1011.8 185.08 L1010.95 183.45 L1010.09 181.82 L1009.23 180.19 L1008.35 178.56 L1007.47 176.93 L1006.57 175.31 L1005.67 173.68 L1004.77 172.05 L1003.85 170.42 L1002.93 168.79 L1002 167.16 L1001.06 165.53 L1000.11 163.9 L999.16 162.27 L998.2 160.64 L997.23 159.01 L996.25 157.38 L995.27 155.76 L994.28 154.13 L993.28 152.5 L992.28 150.87 L991.27 149.24 L990.25 147.61 L989.23 145.98 L988.2 144.35 L987.16 142.72 L986.11 141.09 L985.06 139.46 L984.01 137.84 L982.94 136.21 L981.88 134.58 L980.8 132.95 L979.72 131.32 L978.63 129.69 L977.54 128.06 L976.44 126.43 L975.34 124.8 L974.23 123.17 L973.11 121.54 L971.99 119.91 L970.87 118.29 L969.73 116.66 L968.6 115.03 L967.46 113.4 L966.31 111.77 L965.16 110.14 L964 108.51 L962.84 106.88 L961.68 105.25 L960.51 103.62 L959.33 101.99 L958.15 100.36 L956.97 98.74 L955.78 97.11 L954.59 95.48 L953.4 93.85 L952.2 92.22 L950.99 90.59 L949.79 88.96 L948.58 87.33 L947.36 85.7 L946.15 84.07 L944.93 82.44 L943.7 80.81 L942.47 79.19 L941.24 77.56 L940.01 75.93 L938.77 74.3 L937.54 72.67 L936.29 71.04 L935.05 69.41 L933.8 67.78 L932.55 66.15 L931.3 64.52 L930.05 62.89 L928.79 61.27 L927.54 59.64 L926.28 58.01 L925.01 56.38 L923.75 54.75 L922.49 53.12 L921.22 51.49 L919.95 49.86 L918.68 48.23 L917.41 46.6 L916.14 44.97 L914.87 43.34 L913.59 41.72 L912.32 40.09 L911.04 38.46 L909.77 36.83 L908.49 35.2 L907.21 33.57 L905.93 31.94 L904.66 30.31 L903.38 28.68 L902.1 27.05 M902.1 613.55 L902.95 611.92 L903.8 610.29 L904.66 608.66 L905.51 607.03 L906.36 605.4 L907.21 603.77 L908.06 602.14 L908.91 600.51 L909.76 598.88 L910.61 597.26 L911.46 595.63 L912.31 594 L913.15 592.37 L914 590.74 L914.85 589.11 L915.69 587.48 L916.53 585.85 L917.38 584.22 L918.22 582.59 L919.06 580.96 L919.9 579.33 L920.73 577.71 L921.57 576.08 L922.4 574.45 L923.24 572.82 L924.07 571.19 L924.9 569.56 L925.72 567.93 L926.55 566.3 L927.37 564.67 L928.2 563.04 L929.02 561.41 L929.83 559.79 L930.65 558.16 L931.46 556.53 L932.28 554.9 L933.08 553.27 L933.89 551.64 L934.7 550.01 L935.5 548.38 L936.3 546.75 L937.09 545.12 L937.89 543.49 L938.68 541.86 L939.47 540.24 L940.25 538.61 L941.04 536.98 L941.82 535.35 L942.59 533.72 L943.37 532.09 L944.14 530.46 L944.91 528.83 L945.67 527.2 L946.43 525.57 L947.19 523.94 L947.94 522.31 L948.69 520.69 L949.44 519.06 L950.19 517.43 L950.93 515.8 L951.66 514.17 L952.39 512.54 L953.12 510.91 L953.85 509.28 L954.57 507.65 L955.28 506.02 L956 504.39 L956.71 502.76 L957.41 501.14 L958.11 499.51 L958.81 497.88 L959.5 496.25 L960.18 494.62 L960.87 492.99 L961.55 491.36 L962.22 489.73 L962.89 488.1 L963.55 486.47 L964.21 484.84 L964.87 483.22 L965.52 481.59 L966.16 479.96 L966.8 478.33 L967.44 476.7 L968.07 475.07 L968.7 473.44 L969.32 471.81 L969.93 470.18 L970.54 468.55 L971.15 466.92 L971.75 465.29 L972.34 463.67 L972.93 462.04 L973.52 460.41 L974.1 458.78 L974.67 457.15 L975.24 455.52 L975.8 453.89 L976.35 452.26 L976.9 450.63 L977.45 449 L977.99 447.37 L978.52 445.74 L979.05 444.12 L979.57 442.49 L980.09 440.86 L980.6 439.23 L981.1 437.6 L981.6 435.97 L982.09 434.34 L982.58 432.71 L983.06 431.08 L983.53 429.45 L984 427.82 L984.46 426.19 L984.91 424.57 L985.36 422.94 L985.8 421.31 L986.24 419.68 L986.67 418.05 L987.09 416.42 L987.51 414.79 L987.92 413.16 L988.32 411.53 L988.72 409.9 L989.11 408.27 L989.49 406.64 L989.87 405.02 L990.24 403.39 L990.6 401.76 L990.96 400.13 L991.31 398.5 L991.65 396.87 L991.99 395.24 L992.32 393.61 L992.64 391.98 L992.96 390.35 L993.26 388.72 L993.57 387.1 L993.86 385.47 L994.15 383.84 L994.43 382.21 L994.7 380.58 L994.97 378.95 L995.23 377.32 L995.48 375.69 L995.73 374.06 L995.97 372.43 L996.2 370.8 L996.42 369.17 L996.64 367.55 L996.85 365.92 L997.05 364.29 L997.25 362.66 L997.44 361.03 L997.62 359.4 L997.79 357.77 L997.96 356.14 L998.11 354.51 L998.27 352.88 L998.41 351.25 L998.55 349.62 L998.68 348 L998.8 346.37 L998.91 344.74 L999.02 343.11 L999.12 341.48 L999.22 339.85 L999.3 338.22 L999.38 336.59 L999.45 334.96 L999.51 333.33 L999.57 331.7 L999.62 330.07 L999.66 328.45 L999.69 326.82 L999.72 325.19 L999.74 323.56 L999.75 321.93 L999.75 320.3 L999.75 318.67 L999.74 317.04 L999.72 315.41 L999.69 313.78 L999.66 312.15 L999.62 310.53 L999.57 308.9 L999.51 307.27 L999.45 305.64 L999.38 304.01 L999.3 302.38 L999.22 300.75 L999.12 299.12 L999.02 297.49 L998.91 295.86 L998.8 294.23 L998.68 292.6 L998.55 290.98 L998.41 289.35 L998.27 287.72 L998.11 286.09 L997.96 284.46 L997.79 282.83 L997.62 281.2 L997.44 279.57 L997.25 277.94 L997.05 276.31 L996.85 274.68 L996.64 273.05 L996.42 271.43 L996.2 269.8 L995.97 268.17 L995.73 266.54 L995.48 264.91 L995.23 263.28 L994.97 261.65 L994.7 260.02 L994.43 258.39 L994.15 256.76 L993.86 255.13 L993.57 253.5 L993.26 251.88 L992.96 250.25 L992.64 248.62 L992.32 246.99 L991.99 245.36 L991.65 243.73 L991.31 242.1 L990.96 240.47 L990.6 238.84 L990.24 237.21 L989.87 235.58 L989.49 233.96 L989.11 232.33 L988.72 230.7 L988.32 229.07 L987.92 227.44 L987.51 225.81 L987.09 224.18 L986.67 222.55 L986.24 220.92 L985.8 219.29 L985.36 217.66 L984.91 216.03 L984.46 214.41 L984 212.78 L983.53 211.15 L983.06 209.52 L982.58 207.89 L982.09 206.26 L981.6 204.63 L981.1 203 L980.6 201.37 L980.09 199.74 L979.57 198.11 L979.05 196.48 L978.52 194.86 L977.99 193.23 L977.45 191.6 L976.9 189.97 L976.35 188.34 L975.8 186.71 L975.24 185.08 L974.67 183.45 L974.1 181.82 L973.52 180.19 L972.93 178.56 L972.34 176.93 L971.75 175.31 L971.15 173.68 L970.54 172.05 L969.93 170.42 L969.32 168.79 L968.7 167.16 L968.07 165.53 L967.44 163.9 L966.8 162.27 L966.16 160.64 L965.52 159.01 L964.87 157.38 L964.21 155.76 L963.55 154.13 L962.89 152.5 L962.22 150.87 L961.55 149.24 L960.87 147.61 L960.18 145.98 L959.5 144.35 L958.81 142.72 L958.11 141.09 L957.41 139.46 L956.71 137.84 L956 136.21 L955.28 134.58 L954.57 132.95 L953.85 131.32 L953.12 129.69 L952.39 128.06 L951.66 126.43 L950.93 124.8 L950.19 123.17 L949.44 121.54 L948.69 119.91 L947.94 118.29 L947.19 116.66 L946.43 115.03 L945.67 113.4 L944.91 111.77 L944.14 110.14 L943.37 108.51 L942.59 106.88 L941.82 105.25 L941.04 103.62 L940.25 101.99 L939.47 100.36 L938.68 98.74 L937.89 97.11 L937.09 95.48 L936.3 93.85 L935.5 92.22 L934.7 90.59 L933.89 88.96 L933.08 87.33 L932.28 85.7 L931.46 84.07 L930.65 82.44 L929.83 80.81 L929.02 79.19 L928.2 77.56 L927.37 75.93 L926.55 74.3 L925.72 72.67 L924.9 71.04 L924.07 69.41 L923.24 67.78 L922.4 66.15 L921.57 64.52 L920.73 62.89 L919.9 61.27 L919.06 59.64 L918.22 58.01 L917.38 56.38 L916.53 54.75 L915.69 53.12 L914.85 51.49 L914 49.86 L913.15 48.23 L912.31 46.6 L911.46 44.97 L910.61 43.34 L909.76 41.72 L908.91 40.09 L908.06 38.46 L907.21 36.83 L906.36 35.2 L905.51 33.57 L904.66 31.94 L903.8 30.31 L902.95 28.68 L902.1 27.05 M902.1 613.55 L902.53 611.92 L902.95 610.29 L903.38 608.66 L903.8 607.03 L904.23 605.4 L904.66 603.77 L905.08 602.14 L905.51 600.51 L905.93 598.88 L906.36 597.26 L906.78 595.63 L907.2 594 L907.63 592.37 L908.05 590.74 L908.47 589.11 L908.9 587.48 L909.32 585.85 L909.74 584.22 L910.16 582.59 L910.58 580.96 L911 579.33 L911.42 577.71 L911.83 576.08 L912.25 574.45 L912.67 572.82 L913.08 571.19 L913.5 569.56 L913.91 567.93 L914.32 566.3 L914.74 564.67 L915.15 563.04 L915.56 561.41 L915.97 559.79 L916.38 558.16 L916.78 556.53 L917.19 554.9 L917.59 553.27 L918 551.64 L918.4 550.01 L918.8 548.38 L919.2 546.75 L919.6 545.12 L919.99 543.49 L920.39 541.86 L920.78 540.24 L921.18 538.61 L921.57 536.98 L921.96 535.35 L922.35 533.72 L922.73 532.09 L923.12 530.46 L923.5 528.83 L923.89 527.2 L924.27 525.57 L924.64 523.94 L925.02 522.31 L925.4 520.69 L925.77 519.06 L926.14 517.43 L926.51 515.8 L926.88 514.17 L927.25 512.54 L927.61 510.91 L927.97 509.28 L928.33 507.65 L928.69 506.02 L929.05 504.39 L929.4 502.76 L929.75 501.14 L930.1 499.51 L930.45 497.88 L930.8 496.25 L931.14 494.62 L931.48 492.99 L931.82 491.36 L932.16 489.73 L932.49 488.1 L932.83 486.47 L933.16 484.84 L933.48 483.22 L933.81 481.59 L934.13 479.96 L934.45 478.33 L934.77 476.7 L935.09 475.07 L935.4 473.44 L935.71 471.81 L936.02 470.18 L936.32 468.55 L936.62 466.92 L936.92 465.29 L937.22 463.67 L937.52 462.04 L937.81 460.41 L938.1 458.78 L938.38 457.15 L938.67 455.52 L938.95 453.89 L939.23 452.26 L939.5 450.63 L939.77 449 L940.04 447.37 L940.31 445.74 L940.57 444.12 L940.84 442.49 L941.09 440.86 L941.35 439.23 L941.6 437.6 L941.85 435.97 L942.1 434.34 L942.34 432.71 L942.58 431.08 L942.81 429.45 L943.05 427.82 L943.28 426.19 L943.51 424.57 L943.73 422.94 L943.95 421.31 L944.17 419.68 L944.38 418.05 L944.6 416.42 L944.8 414.79 L945.01 413.16 L945.21 411.53 L945.41 409.9 L945.6 408.27 L945.8 406.64 L945.98 405.02 L946.17 403.39 L946.35 401.76 L946.53 400.13 L946.7 398.5 L946.88 396.87 L947.04 395.24 L947.21 393.61 L947.37 391.98 L947.53 390.35 L947.68 388.72 L947.83 387.1 L947.98 385.47 L948.12 383.84 L948.26 382.21 L948.4 380.58 L948.54 378.95 L948.67 377.32 L948.79 375.69 L948.91 374.06 L949.03 372.43 L949.15 370.8 L949.26 369.17 L949.37 367.55 L949.47 365.92 L949.58 364.29 L949.67 362.66 L949.77 361.03 L949.86 359.4 L949.94 357.77 L950.03 356.14 L950.11 354.51 L950.18 352.88 L950.26 351.25 L950.32 349.62 L950.39 348 L950.45 346.37 L950.51 344.74 L950.56 343.11 L950.61 341.48 L950.66 339.85 L950.7 338.22 L950.74 336.59 L950.77 334.96 L950.81 333.33 L950.83 331.7 L950.86 330.07 L950.88 328.45 L950.9 326.82 L950.91 325.19 L950.92 323.56 L950.92 321.93 L950.93 320.3 L950.92 318.67 L950.92 317.04 L950.91 315.41 L950.9 313.78 L950.88 312.15 L950.86 310.53 L950.83 308.9 L950.81 307.27 L950.77 305.64 L950.74 304.01 L950.7 302.38 L950.66 300.75 L950.61 299.12 L950.56 297.49 L950.51 295.86 L950.45 294.23 L950.39 292.6 L950.32 290.98 L950.26 289.35 L950.18 287.72 L950.11 286.09 L950.03 284.46 L949.94 282.83 L949.86 281.2 L949.77 279.57 L949.67 277.94 L949.58 276.31 L949.47 274.68 L949.37 273.05 L949.26 271.43 L949.15 269.8 L949.03 268.17 L948.91 266.54 L948.79 264.91 L948.67 263.28 L948.54 261.65 L948.4 260.02 L948.26 258.39 L948.12 256.76 L947.98 255.13 L947.83 253.5 L947.68 251.88 L947.53 250.25 L947.37 248.62 L947.21 246.99 L947.04 245.36 L946.88 243.73 L946.7 242.1 L946.53 240.47 L946.35 238.84 L946.17 237.21 L945.98 235.58 L945.8 233.96 L945.6 232.33 L945.41 230.7 L945.21 229.07 L945.01 227.44 L944.8 225.81 L944.6 224.18 L944.38 222.55 L944.17 220.92 L943.95 219.29 L943.73 217.66 L943.51 216.03 L943.28 214.41 L943.05 212.78 L942.81 211.15 L942.58 209.52 L942.34 207.89 L942.1 206.26 L941.85 204.63 L941.6 203 L941.35 201.37 L941.09 199.74 L940.84 198.11 L940.57 196.48 L940.31 194.86 L940.04 193.23 L939.77 191.6 L939.5 189.97 L939.23 188.34 L938.95 186.71 L938.67 185.08 L938.38 183.45 L938.1 181.82 L937.81 180.19 L937.52 178.56 L937.22 176.93 L936.92 175.31 L936.62 173.68 L936.32 172.05 L936.02 170.42 L935.71 168.79 L935.4 167.16 L935.09 165.53 L934.77 163.9 L934.45 162.27 L934.13 160.64 L933.81 159.01 L933.48 157.38 L933.16 155.76 L932.83 154.13 L932.49 152.5 L932.16 150.87 L931.82 149.24 L931.48 147.61 L931.14 145.98 L930.8 144.35 L930.45 142.72 L930.1 141.09 L929.75 139.46 L929.4 137.84 L929.05 136.21 L928.69 134.58 L928.33 132.95 L927.97 131.32 L927.61 129.69 L927.25 128.06 L926.88 126.43 L926.51 124.8 L926.14 123.17 L925.77 121.54 L925.4 119.91 L925.02 118.29 L924.64 116.66 L924.27 115.03 L923.89 113.4 L923.5 111.77 L923.12 110.14 L922.73 108.51 L922.35 106.88 L921.96 105.25 L921.57 103.62 L921.18 101.99 L920.78 100.36 L920.39 98.74 L919.99 97.11 L919.6 95.48 L919.2 93.85 L918.8 92.22 L918.4 90.59 L918 88.96 L917.59 87.33 L917.19 85.7 L916.78 84.07 L916.38 82.44 L915.97 80.81 L915.56 79.19 L915.15 77.56 L914.74 75.93 L914.32 74.3 L913.91 72.67 L913.5 71.04 L913.08 69.41 L912.67 67.78 L912.25 66.15 L911.83 64.52 L911.42 62.89 L911 61.27 L910.58 59.64 L910.16 58.01 L909.74 56.38 L909.32 54.75 L908.9 53.12 L908.47 51.49 L908.05 49.86 L907.63 48.23 L907.2 46.6 L906.78 44.97 L906.36 43.34 L905.93 41.72 L905.51 40.09 L905.08 38.46 L904.66 36.83 L904.23 35.2 L903.8 33.57 L903.38 31.94 L902.95 30.31 L902.53 28.68 L902.1 27.05 M902.1 613.55 L902.1 611.92 L902.1 610.29 L902.1 608.66 L902.1 607.03 L902.1 605.4 L902.1 603.77 L902.1 602.14 L902.1 600.51 L902.1 598.88 L902.1 597.26 L902.1 595.63 L902.1 594 L902.1 592.37 L902.1 590.74 L902.1 589.11 L902.1 587.48 L902.1 585.85 L902.1 584.22 L902.1 582.59 L902.1 580.96 L902.1 579.33 L902.1 577.71 L902.1 576.08 L902.1 574.45 L902.1 572.82 L902.1 571.19 L902.1 569.56 L902.1 567.93 L902.1 566.3 L902.1 564.67 L902.1 563.04 L902.1 561.41 L902.1 559.79 L902.1 558.16 L902.1 556.53 L902.1 554.9 L902.1 553.27 L902.1 551.64 L902.1 550.01 L902.1 548.38 L902.1 546.75 L902.1 545.12 L902.1 543.49 L902.1 541.86 L902.1 540.24 L902.1 538.61 L902.1 536.98 L902.1 535.35 L902.1 533.72 L902.1 532.09 L902.1 530.46 L902.1 528.83 L902.1 527.2 L902.1 525.57 L902.1 523.94 L902.1 522.31 L902.1 520.69 L902.1 519.06 L902.1 517.43 L902.1 515.8 L902.1 514.17 L902.1 512.54 L902.1 510.91 L902.1 509.28 L902.1 507.65 L902.1 506.02 L902.1 504.39 L902.1 502.76 L902.1 501.14 L902.1 499.51 L902.1 497.88 L902.1 496.25 L902.1 494.62 L902.1 492.99 L902.1 491.36 L902.1 489.73 L902.1 488.1 L902.1 486.47 L902.1 484.84 L902.1 483.22 L902.1 481.59 L902.1 479.96 L902.1 478.33 L902.1 476.7 L902.1 475.07 L902.1 473.44 L902.1 471.81 L902.1 470.18 L902.1 468.55 L902.1 466.92 L902.1 465.29 L902.1 463.67 L902.1 462.04 L902.1 460.41 L902.1 458.78 L902.1 457.15 L902.1 455.52 L902.1 453.89 L902.1 452.26 L902.1 450.63 L902.1 449 L902.1 447.37 L902.1 445.74 L902.1 444.12 L902.1 442.49 L902.1 440.86 L902.1 439.23 L902.1 437.6 L902.1 435.97 L902.1 434.34 L902.1 432.71 L902.1 431.08 L902.1 429.45 L902.1 427.82 L902.1 426.19 L902.1 424.57 L902.1 422.94 L902.1 421.31 L902.1 419.68 L902.1 418.05 L902.1 416.42 L902.1 414.79 L902.1 413.16 L902.1 411.53 L902.1 409.9 L902.1 408.27 L902.1 406.64 L902.1 405.02 L902.1 403.39 L902.1 401.76 L902.1 400.13 L902.1 398.5 L902.1 396.87 L902.1 395.24 L902.1 393.61 L902.1 391.98 L902.1 390.35 L902.1 388.72 L902.1 387.1 L902.1 385.47 L902.1 383.84 L902.1 382.21 L902.1 380.58 L902.1 378.95 L902.1 377.32 L902.1 375.69 L902.1 374.06 L902.1 372.43 L902.1 370.8 L902.1 369.17 L902.1 367.55 L902.1 365.92 L902.1 364.29 L902.1 362.66 L902.1 361.03 L902.1 359.4 L902.1 357.77 L902.1 356.14 L902.1 354.51 L902.1 352.88 L902.1 351.25 L902.1 349.62 L902.1 348 L902.1 346.37 L902.1 344.74 L902.1 343.11 L902.1 341.48 L902.1 339.85 L902.1 338.22 L902.1 336.59 L902.1 334.96 L902.1 333.33 L902.1 331.7 L902.1 330.07 L902.1 328.45 L902.1 326.82 L902.1 325.19 L902.1 323.56 L902.1 321.93 L902.1 320.3 L902.1 318.67 L902.1 317.04 L902.1 315.41 L902.1 313.78 L902.1 312.15 L902.1 310.53 L902.1 308.9 L902.1 307.27 L902.1 305.64 L902.1 304.01 L902.1 302.38 L902.1 300.75 L902.1 299.12 L902.1 297.49 L902.1 295.86 L902.1 294.23 L902.1 292.6 L902.1 290.98 L902.1 289.35 L902.1 287.72 L902.1 286.09 L902.1 284.46 L902.1 282.83 L902.1 281.2 L902.1 279.57 L902.1 277.94 L902.1 276.31 L902.1 274.68 L902.1 273.05 L902.1 271.43 L902.1 269.8 L902.1 268.17 L902.1 266.54 L902.1 264.91 L902.1 263.28 L902.1 261.65 L902.1 260.02 L902.1 258.39 L902.1 256.76 L902.1 255.13 L902.1 253.5 L902.1 251.88 L902.1 250.25 L902.1 248.62 L902.1 246.99 L902.1 245.36 L902.1 243.73 L902.1 242.1 L902.1 240.47 L902.1 238.84 L902.1 237.21 L902.1 235.58 L902.1 233.96 L902.1 232.33 L902.1 230.7 L902.1 229.07 L902.1 227.44 L902.1 225.81 L902.1 224.18 L902.1 222.55 L902.1 220.92 L902.1 219.29 L902.1 217.66 L902.1 216.03 L902.1 214.41 L902.1 212.78 L902.1 211.15 L902.1 209.52 L902.1 207.89 L902.1 206.26 L902.1 204.63 L902.1 203 L902.1 201.37 L902.1 199.74 L902.1 198.11 L902.1 196.48 L902.1 194.86 L902.1 193.23 L902.1 191.6 L902.1 189.97 L902.1 188.34 L902.1 186.71 L902.1 185.08 L902.1 183.45 L902.1 181.82 L902.1 180.19 L902.1 178.56 L902.1 176.93 L902.1 175.31 L902.1 173.68 L902.1 172.05 L902.1 170.42 L902.1 168.79 L902.1 167.16 L902.1 165.53 L902.1 163.9 L902.1 162.27 L902.1 160.64 L902.1 159.01 L902.1 157.38 L902.1 155.76 L902.1 154.13 L902.1 152.5 L902.1 150.87 L902.1 149.24 L902.1 147.61 L902.1 145.98 L902.1 144.35 L902.1 142.72 L902.1 141.09 L902.1 139.46 L902.1 137.84 L902.1 136.21 L902.1 134.58 L902.1 132.95 L902.1 131.32 L902.1 129.69 L902.1 128.06 L902.1 126.43 L902.1 124.8 L902.1 123.17 L902.1 121.54 L902.1 119.91 L902.1 118.29 L902.1 116.66 L902.1 115.03 L902.1 113.4 L902.1 111.77 L902.1 110.14 L902.1 108.51 L902.1 106.88 L902.1 105.25 L902.1 103.62 L902.1 101.99 L902.1 100.36 L902.1 98.74 L902.1 97.11 L902.1 95.48 L902.1 93.85 L902.1 92.22 L902.1 90.59 L902.1 88.96 L902.1 87.33 L902.1 85.7 L902.1 84.07 L902.1 82.44 L902.1 80.81 L902.1 79.19 L902.1 77.56 L902.1 75.93 L902.1 74.3 L902.1 72.67 L902.1 71.04 L902.1 69.41 L902.1 67.78 L902.1 66.15 L902.1 64.52 L902.1 62.89 L902.1 61.27 L902.1 59.64 L902.1 58.01 L902.1 56.38 L902.1 54.75 L902.1 53.12 L902.1 51.49 L902.1 49.86 L902.1 48.23 L902.1 46.6 L902.1 44.97 L902.1 43.34 L902.1 41.72 L902.1 40.09 L902.1 38.46 L902.1 36.83 L902.1 35.2 L902.1 33.57 L902.1 31.94 L902.1 30.31 L902.1 28.68 L902.1 27.05 M902.1 613.55 L901.67 611.92 L901.25 610.29 L900.82 608.66 L900.4 607.03 L899.97 605.4 L899.54 603.77 L899.12 602.14 L898.69 600.51 L898.27 598.88 L897.84 597.26 L897.42 595.63 L897 594 L896.57 592.37 L896.15 590.74 L895.73 589.11 L895.3 587.48 L894.88 585.85 L894.46 584.22 L894.04 582.59 L893.62 580.96 L893.2 579.33 L892.78 577.71 L892.37 576.08 L891.95 574.45 L891.53 572.82 L891.12 571.19 L890.7 569.56 L890.29 567.93 L889.88 566.3 L889.46 564.67 L889.05 563.04 L888.64 561.41 L888.23 559.79 L887.82 558.16 L887.42 556.53 L887.01 554.9 L886.61 553.27 L886.2 551.64 L885.8 550.01 L885.4 548.38 L885 546.75 L884.6 545.12 L884.21 543.49 L883.81 541.86 L883.42 540.24 L883.02 538.61 L882.63 536.98 L882.24 535.35 L881.85 533.72 L881.47 532.09 L881.08 530.46 L880.7 528.83 L880.31 527.2 L879.93 525.57 L879.56 523.94 L879.18 522.31 L878.8 520.69 L878.43 519.06 L878.06 517.43 L877.69 515.8 L877.32 514.17 L876.95 512.54 L876.59 510.91 L876.23 509.28 L875.87 507.65 L875.51 506.02 L875.15 504.39 L874.8 502.76 L874.45 501.14 L874.1 499.51 L873.75 497.88 L873.4 496.25 L873.06 494.62 L872.72 492.99 L872.38 491.36 L872.04 489.73 L871.71 488.1 L871.37 486.47 L871.04 484.84 L870.72 483.22 L870.39 481.59 L870.07 479.96 L869.75 478.33 L869.43 476.7 L869.11 475.07 L868.8 473.44 L868.49 471.81 L868.18 470.18 L867.88 468.55 L867.58 466.92 L867.28 465.29 L866.98 463.67 L866.68 462.04 L866.39 460.41 L866.1 458.78 L865.82 457.15 L865.53 455.52 L865.25 453.89 L864.97 452.26 L864.7 450.63 L864.43 449 L864.16 447.37 L863.89 445.74 L863.63 444.12 L863.36 442.49 L863.11 440.86 L862.85 439.23 L862.6 437.6 L862.35 435.97 L862.1 434.34 L861.86 432.71 L861.62 431.08 L861.39 429.45 L861.15 427.82 L860.92 426.19 L860.69 424.57 L860.47 422.94 L860.25 421.31 L860.03 419.68 L859.82 418.05 L859.6 416.42 L859.4 414.79 L859.19 413.16 L858.99 411.53 L858.79 409.9 L858.6 408.27 L858.4 406.64 L858.22 405.02 L858.03 403.39 L857.85 401.76 L857.67 400.13 L857.5 398.5 L857.32 396.87 L857.16 395.24 L856.99 393.61 L856.83 391.98 L856.67 390.35 L856.52 388.72 L856.37 387.1 L856.22 385.47 L856.08 383.84 L855.94 382.21 L855.8 380.58 L855.66 378.95 L855.53 377.32 L855.41 375.69 L855.29 374.06 L855.17 372.43 L855.05 370.8 L854.94 369.17 L854.83 367.55 L854.73 365.92 L854.62 364.29 L854.53 362.66 L854.43 361.03 L854.34 359.4 L854.26 357.77 L854.17 356.14 L854.09 354.51 L854.02 352.88 L853.94 351.25 L853.88 349.62 L853.81 348 L853.75 346.37 L853.69 344.74 L853.64 343.11 L853.59 341.48 L853.54 339.85 L853.5 338.22 L853.46 336.59 L853.43 334.96 L853.39 333.33 L853.37 331.7 L853.34 330.07 L853.32 328.45 L853.3 326.82 L853.29 325.19 L853.28 323.56 L853.28 321.93 L853.27 320.3 L853.28 318.67 L853.28 317.04 L853.29 315.41 L853.3 313.78 L853.32 312.15 L853.34 310.53 L853.37 308.9 L853.39 307.27 L853.43 305.64 L853.46 304.01 L853.5 302.38 L853.54 300.75 L853.59 299.12 L853.64 297.49 L853.69 295.86 L853.75 294.23 L853.81 292.6 L853.88 290.98 L853.94 289.35 L854.02 287.72 L854.09 286.09 L854.17 284.46 L854.26 282.83 L854.34 281.2 L854.43 279.57 L854.53 277.94 L854.62 276.31 L854.73 274.68 L854.83 273.05 L854.94 271.43 L855.05 269.8 L855.17 268.17 L855.29 266.54 L855.41 264.91 L855.53 263.28 L855.66 261.65 L855.8 260.02 L855.94 258.39 L856.08 256.76 L856.22 255.13 L856.37 253.5 L856.52 251.88 L856.67 250.25 L856.83 248.62 L856.99 246.99 L857.16 245.36 L857.32 243.73 L857.5 242.1 L857.67 240.47 L857.85 238.84 L858.03 237.21 L858.22 235.58 L858.4 233.96 L858.6 232.33 L858.79 230.7 L858.99 229.07 L859.19 227.44 L859.4 225.81 L859.6 224.18 L859.82 222.55 L860.03 220.92 L860.25 219.29 L860.47 217.66 L860.69 216.03 L860.92 214.41 L861.15 212.78 L861.39 211.15 L861.62 209.52 L861.86 207.89 L862.1 206.26 L862.35 204.63 L862.6 203 L862.85 201.37 L863.11 199.74 L863.36 198.11 L863.63 196.48 L863.89 194.86 L864.16 193.23 L864.43 191.6 L864.7 189.97 L864.97 188.34 L865.25 186.71 L865.53 185.08 L865.82 183.45 L866.1 181.82 L866.39 180.19 L866.68 178.56 L866.98 176.93 L867.28 175.31 L867.58 173.68 L867.88 172.05 L868.18 170.42 L868.49 168.79 L868.8 167.16 L869.11 165.53 L869.43 163.9 L869.75 162.27 L870.07 160.64 L870.39 159.01 L870.72 157.38 L871.04 155.76 L871.37 154.13 L871.71 152.5 L872.04 150.87 L872.38 149.24 L872.72 147.61 L873.06 145.98 L873.4 144.35 L873.75 142.72 L874.1 141.09 L874.45 139.46 L874.8 137.84 L875.15 136.21 L875.51 134.58 L875.87 132.95 L876.23 131.32 L876.59 129.69 L876.95 128.06 L877.32 126.43 L877.69 124.8 L878.06 123.17 L878.43 121.54 L878.8 119.91 L879.18 118.29 L879.56 116.66 L879.93 115.03 L880.31 113.4 L880.7 111.77 L881.08 110.14 L881.47 108.51 L881.85 106.88 L882.24 105.25 L882.63 103.62 L883.02 101.99 L883.42 100.36 L883.81 98.74 L884.21 97.11 L884.6 95.48 L885 93.85 L885.4 92.22 L885.8 90.59 L886.2 88.96 L886.61 87.33 L887.01 85.7 L887.42 84.07 L887.82 82.44 L888.23 80.81 L888.64 79.19 L889.05 77.56 L889.46 75.93 L889.88 74.3 L890.29 72.67 L890.7 71.04 L891.12 69.41 L891.53 67.78 L891.95 66.15 L892.37 64.52 L892.78 62.89 L893.2 61.27 L893.62 59.64 L894.04 58.01 L894.46 56.38 L894.88 54.75 L895.3 53.12 L895.73 51.49 L896.15 49.86 L896.57 48.23 L897 46.6 L897.42 44.97 L897.84 43.34 L898.27 41.72 L898.69 40.09 L899.12 38.46 L899.54 36.83 L899.97 35.2 L900.4 33.57 L900.82 31.94 L901.25 30.31 L901.67 28.68 L902.1 27.05 M902.1 613.55 L901.25 611.92 L900.4 610.29 L899.54 608.66 L898.69 607.03 L897.84 605.4 L896.99 603.77 L896.14 602.14 L895.29 600.51 L894.44 598.88 L893.59 597.26 L892.74 595.63 L891.89 594 L891.05 592.37 L890.2 590.74 L889.35 589.11 L888.51 587.48 L887.67 585.85 L886.82 584.22 L885.98 582.59 L885.14 580.96 L884.3 579.33 L883.47 577.71 L882.63 576.08 L881.8 574.45 L880.96 572.82 L880.13 571.19 L879.3 569.56 L878.48 567.93 L877.65 566.3 L876.83 564.67 L876 563.04 L875.18 561.41 L874.37 559.79 L873.55 558.16 L872.74 556.53 L871.92 554.9 L871.12 553.27 L870.31 551.64 L869.5 550.01 L868.7 548.38 L867.9 546.75 L867.11 545.12 L866.31 543.49 L865.52 541.86 L864.73 540.24 L863.95 538.61 L863.16 536.98 L862.38 535.35 L861.61 533.72 L860.83 532.09 L860.06 530.46 L859.29 528.83 L858.53 527.2 L857.77 525.57 L857.01 523.94 L856.26 522.31 L855.51 520.69 L854.76 519.06 L854.01 517.43 L853.27 515.8 L852.54 514.17 L851.81 512.54 L851.08 510.91 L850.35 509.28 L849.63 507.65 L848.92 506.02 L848.2 504.39 L847.49 502.76 L846.79 501.14 L846.09 499.51 L845.39 497.88 L844.7 496.25 L844.02 494.62 L843.33 492.99 L842.65 491.36 L841.98 489.73 L841.31 488.1 L840.65 486.47 L839.99 484.84 L839.33 483.22 L838.68 481.59 L838.04 479.96 L837.4 478.33 L836.76 476.7 L836.13 475.07 L835.5 473.44 L834.88 471.81 L834.27 470.18 L833.66 468.55 L833.05 466.92 L832.45 465.29 L831.86 463.67 L831.27 462.04 L830.68 460.41 L830.1 458.78 L829.53 457.15 L828.96 455.52 L828.4 453.89 L827.85 452.26 L827.3 450.63 L826.75 449 L826.21 447.37 L825.68 445.74 L825.15 444.12 L824.63 442.49 L824.11 440.86 L823.6 439.23 L823.1 437.6 L822.6 435.97 L822.11 434.34 L821.62 432.71 L821.14 431.08 L820.67 429.45 L820.2 427.82 L819.74 426.19 L819.29 424.57 L818.84 422.94 L818.4 421.31 L817.96 419.68 L817.53 418.05 L817.11 416.42 L816.69 414.79 L816.28 413.16 L815.88 411.53 L815.48 409.9 L815.09 408.27 L814.71 406.64 L814.33 405.02 L813.96 403.39 L813.6 401.76 L813.24 400.13 L812.89 398.5 L812.55 396.87 L812.21 395.24 L811.88 393.61 L811.56 391.98 L811.24 390.35 L810.94 388.72 L810.63 387.1 L810.34 385.47 L810.05 383.84 L809.77 382.21 L809.5 380.58 L809.23 378.95 L808.97 377.32 L808.72 375.69 L808.47 374.06 L808.23 372.43 L808 370.8 L807.78 369.17 L807.56 367.55 L807.35 365.92 L807.15 364.29 L806.95 362.66 L806.76 361.03 L806.58 359.4 L806.41 357.77 L806.24 356.14 L806.09 354.51 L805.93 352.88 L805.79 351.25 L805.65 349.62 L805.52 348 L805.4 346.37 L805.29 344.74 L805.18 343.11 L805.08 341.48 L804.98 339.85 L804.9 338.22 L804.82 336.59 L804.75 334.96 L804.69 333.33 L804.63 331.7 L804.58 330.07 L804.54 328.45 L804.51 326.82 L804.48 325.19 L804.46 323.56 L804.45 321.93 L804.45 320.3 L804.45 318.67 L804.46 317.04 L804.48 315.41 L804.51 313.78 L804.54 312.15 L804.58 310.53 L804.63 308.9 L804.69 307.27 L804.75 305.64 L804.82 304.01 L804.9 302.38 L804.98 300.75 L805.08 299.12 L805.18 297.49 L805.29 295.86 L805.4 294.23 L805.52 292.6 L805.65 290.98 L805.79 289.35 L805.93 287.72 L806.09 286.09 L806.24 284.46 L806.41 282.83 L806.58 281.2 L806.76 279.57 L806.95 277.94 L807.15 276.31 L807.35 274.68 L807.56 273.05 L807.78 271.43 L808 269.8 L808.23 268.17 L808.47 266.54 L808.72 264.91 L808.97 263.28 L809.23 261.65 L809.5 260.02 L809.77 258.39 L810.05 256.76 L810.34 255.13 L810.63 253.5 L810.94 251.88 L811.24 250.25 L811.56 248.62 L811.88 246.99 L812.21 245.36 L812.55 243.73 L812.89 242.1 L813.24 240.47 L813.6 238.84 L813.96 237.21 L814.33 235.58 L814.71 233.96 L815.09 232.33 L815.48 230.7 L815.88 229.07 L816.28 227.44 L816.69 225.81 L817.11 224.18 L817.53 222.55 L817.96 220.92 L818.4 219.29 L818.84 217.66 L819.29 216.03 L819.74 214.41 L820.2 212.78 L820.67 211.15 L821.14 209.52 L821.62 207.89 L822.11 206.26 L822.6 204.63 L823.1 203 L823.6 201.37 L824.11 199.74 L824.63 198.11 L825.15 196.48 L825.68 194.86 L826.21 193.23 L826.75 191.6 L827.3 189.97 L827.85 188.34 L828.4 186.71 L828.96 185.08 L829.53 183.45 L830.1 181.82 L830.68 180.19 L831.27 178.56 L831.86 176.93 L832.45 175.31 L833.05 173.68 L833.66 172.05 L834.27 170.42 L834.88 168.79 L835.5 167.16 L836.13 165.53 L836.76 163.9 L837.4 162.27 L838.04 160.64 L838.68 159.01 L839.33 157.38 L839.99 155.76 L840.65 154.13 L841.31 152.5 L841.98 150.87 L842.65 149.24 L843.33 147.61 L844.02 145.98 L844.7 144.35 L845.39 142.72 L846.09 141.09 L846.79 139.46 L847.49 137.84 L848.2 136.21 L848.92 134.58 L849.63 132.95 L850.35 131.32 L851.08 129.69 L851.81 128.06 L852.54 126.43 L853.27 124.8 L854.01 123.17 L854.76 121.54 L855.51 119.91 L856.26 118.29 L857.01 116.66 L857.77 115.03 L858.53 113.4 L859.29 111.77 L860.06 110.14 L860.83 108.51 L861.61 106.88 L862.38 105.25 L863.16 103.62 L863.95 101.99 L864.73 100.36 L865.52 98.74 L866.31 97.11 L867.11 95.48 L867.9 93.85 L868.7 92.22 L869.5 90.59 L870.31 88.96 L871.12 87.33 L871.92 85.7 L872.74 84.07 L873.55 82.44 L874.37 80.81 L875.18 79.19 L876 77.56 L876.83 75.93 L877.65 74.3 L878.48 72.67 L879.3 71.04 L880.13 69.41 L880.96 67.78 L881.8 66.15 L882.63 64.52 L883.47 62.89 L884.3 61.27 L885.14 59.64 L885.98 58.01 L886.82 56.38 L887.67 54.75 L888.51 53.12 L889.35 51.49 L890.2 49.86 L891.05 48.23 L891.89 46.6 L892.74 44.97 L893.59 43.34 L894.44 41.72 L895.29 40.09 L896.14 38.46 L896.99 36.83 L897.84 35.2 L898.69 33.57 L899.54 31.94 L900.4 30.31 L901.25 28.68 L902.1 27.05 M902.1 613.55 L900.82 611.92 L899.54 610.29 L898.27 608.66 L896.99 607.03 L895.71 605.4 L894.43 603.77 L893.16 602.14 L891.88 600.51 L890.61 598.88 L889.33 597.26 L888.06 595.63 L886.79 594 L885.52 592.37 L884.25 590.74 L882.98 589.11 L881.71 587.48 L880.45 585.85 L879.19 584.22 L877.92 582.59 L876.66 580.96 L875.41 579.33 L874.15 577.71 L872.9 576.08 L871.65 574.45 L870.4 572.82 L869.15 571.19 L867.91 569.56 L866.66 567.93 L865.43 566.3 L864.19 564.67 L862.96 563.04 L861.73 561.41 L860.5 559.79 L859.27 558.16 L858.05 556.53 L856.84 554.9 L855.62 553.27 L854.41 551.64 L853.21 550.01 L852 548.38 L850.8 546.75 L849.61 545.12 L848.42 543.49 L847.23 541.86 L846.05 540.24 L844.87 538.61 L843.69 536.98 L842.52 535.35 L841.36 533.72 L840.2 532.09 L839.04 530.46 L837.89 528.83 L836.74 527.2 L835.6 525.57 L834.47 523.94 L833.33 522.31 L832.21 520.69 L831.09 519.06 L829.97 517.43 L828.86 515.8 L827.76 514.17 L826.66 512.54 L825.57 510.91 L824.48 509.28 L823.4 507.65 L822.32 506.02 L821.26 504.39 L820.19 502.76 L819.14 501.14 L818.09 499.51 L817.04 497.88 L816 496.25 L814.97 494.62 L813.95 492.99 L812.93 491.36 L811.92 489.73 L810.92 488.1 L809.92 486.47 L808.93 484.84 L807.95 483.22 L806.97 481.59 L806 479.96 L805.04 478.33 L804.09 476.7 L803.14 475.07 L802.2 473.44 L801.27 471.81 L800.35 470.18 L799.43 468.55 L798.53 466.92 L797.63 465.29 L796.73 463.67 L795.85 462.04 L794.97 460.41 L794.11 458.78 L793.25 457.15 L792.4 455.52 L791.55 453.89 L790.72 452.26 L789.89 450.63 L789.08 449 L788.27 447.37 L787.47 445.74 L786.68 444.12 L785.89 442.49 L785.12 440.86 L784.36 439.23 L783.6 437.6 L782.85 435.97 L782.11 434.34 L781.39 432.71 L780.67 431.08 L779.96 429.45 L779.26 427.82 L778.56 426.19 L777.88 424.57 L777.21 422.94 L776.55 421.31 L775.89 419.68 L775.25 418.05 L774.61 416.42 L773.99 414.79 L773.38 413.16 L772.77 411.53 L772.18 409.9 L771.59 408.27 L771.01 406.64 L770.45 405.02 L769.89 403.39 L769.35 401.76 L768.81 400.13 L768.29 398.5 L767.77 396.87 L767.27 395.24 L766.77 393.61 L766.29 391.98 L765.82 390.35 L765.35 388.72 L764.9 387.1 L764.46 385.47 L764.03 383.84 L763.61 382.21 L763.19 380.58 L762.79 378.95 L762.4 377.32 L762.03 375.69 L761.66 374.06 L761.3 372.43 L760.95 370.8 L760.62 369.17 L760.29 367.55 L759.98 365.92 L759.67 364.29 L759.38 362.66 L759.1 361.03 L758.83 359.4 L758.57 357.77 L758.32 356.14 L758.08 354.51 L757.85 352.88 L757.63 351.25 L757.43 349.62 L757.23 348 L757.05 346.37 L756.88 344.74 L756.72 343.11 L756.57 341.48 L756.43 339.85 L756.3 338.22 L756.18 336.59 L756.08 334.96 L755.98 333.33 L755.9 331.7 L755.83 330.07 L755.76 328.45 L755.71 326.82 L755.68 325.19 L755.65 323.56 L755.63 321.93 L755.62 320.3 L755.63 318.67 L755.65 317.04 L755.68 315.41 L755.71 313.78 L755.76 312.15 L755.83 310.53 L755.9 308.9 L755.98 307.27 L756.08 305.64 L756.18 304.01 L756.3 302.38 L756.43 300.75 L756.57 299.12 L756.72 297.49 L756.88 295.86 L757.05 294.23 L757.23 292.6 L757.43 290.98 L757.63 289.35 L757.85 287.72 L758.08 286.09 L758.32 284.46 L758.57 282.83 L758.83 281.2 L759.1 279.57 L759.38 277.94 L759.67 276.31 L759.98 274.68 L760.29 273.05 L760.62 271.43 L760.95 269.8 L761.3 268.17 L761.66 266.54 L762.03 264.91 L762.4 263.28 L762.79 261.65 L763.19 260.02 L763.61 258.39 L764.03 256.76 L764.46 255.13 L764.9 253.5 L765.35 251.88 L765.82 250.25 L766.29 248.62 L766.77 246.99 L767.27 245.36 L767.77 243.73 L768.29 242.1 L768.81 240.47 L769.35 238.84 L769.89 237.21 L770.45 235.58 L771.01 233.96 L771.59 232.33 L772.18 230.7 L772.77 229.07 L773.38 227.44 L773.99 225.81 L774.61 224.18 L775.25 222.55 L775.89 220.92 L776.55 219.29 L777.21 217.66 L777.88 216.03 L778.56 214.41 L779.26 212.78 L779.96 211.15 L780.67 209.52 L781.39 207.89 L782.11 206.26 L782.85 204.63 L783.6 203 L784.36 201.37 L785.12 199.74 L785.89 198.11 L786.68 196.48 L787.47 194.86 L788.27 193.23 L789.08 191.6 L789.89 189.97 L790.72 188.34 L791.55 186.71 L792.4 185.08 L793.25 183.45 L794.11 181.82 L794.97 180.19 L795.85 178.56 L796.73 176.93 L797.63 175.31 L798.53 173.68 L799.43 172.05 L800.35 170.42 L801.27 168.79 L802.2 167.16 L803.14 165.53 L804.09 163.9 L805.04 162.27 L806 160.64 L806.97 159.01 L807.95 157.38 L808.93 155.76 L809.92 154.13 L810.92 152.5 L811.92 150.87 L812.93 149.24 L813.95 147.61 L814.97 145.98 L816 144.35 L817.04 142.72 L818.09 141.09 L819.14 139.46 L820.19 137.84 L821.26 136.21 L822.32 134.58 L823.4 132.95 L824.48 131.32 L825.57 129.69 L826.66 128.06 L827.76 126.43 L828.86 124.8 L829.97 123.17 L831.09 121.54 L832.21 119.91 L833.33 118.29 L834.47 116.66 L835.6 115.03 L836.74 113.4 L837.89 111.77 L839.04 110.14 L840.2 108.51 L841.36 106.88 L842.52 105.25 L843.69 103.62 L844.87 101.99 L846.05 100.36 L847.23 98.74 L848.42 97.11 L849.61 95.48 L850.8 93.85 L852 92.22 L853.21 90.59 L854.41 88.96 L855.62 87.33 L856.84 85.7 L858.05 84.07 L859.27 82.44 L860.5 80.81 L861.73 79.19 L862.96 77.56 L864.19 75.93 L865.43 74.3 L866.66 72.67 L867.91 71.04 L869.15 69.41 L870.4 67.78 L871.65 66.15 L872.9 64.52 L874.15 62.89 L875.41 61.27 L876.66 59.64 L877.92 58.01 L879.19 56.38 L880.45 54.75 L881.71 53.12 L882.98 51.49 L884.25 49.86 L885.52 48.23 L886.79 46.6 L888.06 44.97 L889.33 43.34 L890.61 41.72 L891.88 40.09 L893.16 38.46 L894.43 36.83 L895.71 35.2 L896.99 33.57 L898.27 31.94 L899.54 30.31 L900.82 28.68 L902.1 27.05 M902.1 613.55 L900.4 611.92 L898.69 610.29 L896.99 608.66 L895.28 607.03 L893.58 605.4 L891.88 603.77 L890.18 602.14 L888.48 600.51 L886.78 598.88 L885.08 597.26 L883.38 595.63 L881.69 594 L879.99 592.37 L878.3 590.74 L876.61 589.11 L874.92 587.48 L873.23 585.85 L871.55 584.22 L869.87 582.59 L868.19 580.96 L866.51 579.33 L864.84 577.71 L863.16 576.08 L861.49 574.45 L859.83 572.82 L858.17 571.19 L856.51 569.56 L854.85 567.93 L853.2 566.3 L851.55 564.67 L849.91 563.04 L848.27 561.41 L846.63 559.79 L845 558.16 L843.37 556.53 L841.75 554.9 L840.13 553.27 L838.52 551.64 L836.91 550.01 L835.3 548.38 L833.7 546.75 L832.11 545.12 L830.52 543.49 L828.94 541.86 L827.36 540.24 L825.79 538.61 L824.22 536.98 L822.66 535.35 L821.11 533.72 L819.56 532.09 L818.02 530.46 L816.49 528.83 L814.96 527.2 L813.44 525.57 L811.92 523.94 L810.41 522.31 L808.91 520.69 L807.42 519.06 L805.93 517.43 L804.45 515.8 L802.98 514.17 L801.51 512.54 L800.06 510.91 L798.61 509.28 L797.17 507.65 L795.73 506.02 L794.31 504.39 L792.89 502.76 L791.48 501.14 L790.08 499.51 L788.69 497.88 L787.31 496.25 L785.93 494.62 L784.57 492.99 L783.21 491.36 L781.86 489.73 L780.52 488.1 L779.19 486.47 L777.87 484.84 L776.56 483.22 L775.26 481.59 L773.97 479.96 L772.69 478.33 L771.42 476.7 L770.16 475.07 L768.91 473.44 L767.66 471.81 L766.43 470.18 L765.21 468.55 L764 466.92 L762.8 465.29 L761.61 463.67 L760.43 462.04 L759.27 460.41 L758.11 458.78 L756.96 457.15 L755.83 455.52 L754.71 453.89 L753.59 452.26 L752.49 450.63 L751.4 449 L750.32 447.37 L749.26 445.74 L748.2 444.12 L747.16 442.49 L746.13 440.86 L745.11 439.23 L744.1 437.6 L743.1 435.97 L742.12 434.34 L741.15 432.71 L740.19 431.08 L739.24 429.45 L738.31 427.82 L737.39 426.19 L736.48 424.57 L735.58 422.94 L734.7 421.31 L733.82 419.68 L732.97 418.05 L732.12 416.42 L731.29 414.79 L730.47 413.16 L729.66 411.53 L728.87 409.9 L728.09 408.27 L727.32 406.64 L726.57 405.02 L725.83 403.39 L725.1 401.76 L724.38 400.13 L723.68 398.5 L723 396.87 L722.33 395.24 L721.67 393.61 L721.02 391.98 L720.39 390.35 L719.77 388.72 L719.17 387.1 L718.58 385.47 L718 383.84 L717.44 382.21 L716.89 380.58 L716.36 378.95 L715.84 377.32 L715.33 375.69 L714.84 374.06 L714.37 372.43 L713.9 370.8 L713.45 369.17 L713.02 367.55 L712.6 365.92 L712.2 364.29 L711.81 362.66 L711.43 361.03 L711.07 359.4 L710.72 357.77 L710.39 356.14 L710.07 354.51 L709.77 352.88 L709.48 351.25 L709.2 349.62 L708.95 348 L708.7 346.37 L708.47 344.74 L708.26 343.11 L708.06 341.48 L707.87 339.85 L707.7 338.22 L707.54 336.59 L707.4 334.96 L707.28 333.33 L707.16 331.7 L707.07 330.07 L706.99 328.45 L706.92 326.82 L706.87 325.19 L706.83 323.56 L706.81 321.93 L706.8 320.3 L706.81 318.67 L706.83 317.04 L706.87 315.41 L706.92 313.78 L706.99 312.15 L707.07 310.53 L707.16 308.9 L707.28 307.27 L707.4 305.64 L707.54 304.01 L707.7 302.38 L707.87 300.75 L708.06 299.12 L708.26 297.49 L708.47 295.86 L708.7 294.23 L708.95 292.6 L709.2 290.98 L709.48 289.35 L709.77 287.72 L710.07 286.09 L710.39 284.46 L710.72 282.83 L711.07 281.2 L711.43 279.57 L711.81 277.94 L712.2 276.31 L712.6 274.68 L713.02 273.05 L713.45 271.43 L713.9 269.8 L714.37 268.17 L714.84 266.54 L715.33 264.91 L715.84 263.28 L716.36 261.65 L716.89 260.02 L717.44 258.39 L718 256.76 L718.58 255.13 L719.17 253.5 L719.77 251.88 L720.39 250.25 L721.02 248.62 L721.67 246.99 L722.33 245.36 L723 243.73 L723.68 242.1 L724.38 240.47 L725.1 238.84 L725.83 237.21 L726.57 235.58 L727.32 233.96 L728.09 232.33 L728.87 230.7 L729.66 229.07 L730.47 227.44 L731.29 225.81 L732.12 224.18 L732.97 222.55 L733.82 220.92 L734.7 219.29 L735.58 217.66 L736.48 216.03 L737.39 214.41 L738.31 212.78 L739.24 211.15 L740.19 209.52 L741.15 207.89 L742.12 206.26 L743.1 204.63 L744.1 203 L745.11 201.37 L746.13 199.74 L747.16 198.11 L748.2 196.48 L749.26 194.86 L750.32 193.23 L751.4 191.6 L752.49 189.97 L753.59 188.34 L754.71 186.71 L755.83 185.08 L756.96 183.45 L758.11 181.82 L759.27 180.19 L760.43 178.56 L761.61 176.93 L762.8 175.31 L764 173.68 L765.21 172.05 L766.43 170.42 L767.66 168.79 L768.91 167.16 L770.16 165.53 L771.42 163.9 L772.69 162.27 L773.97 160.64 L775.26 159.01 L776.56 157.38 L777.87 155.76 L779.19 154.13 L780.52 152.5 L781.86 150.87 L783.21 149.24 L784.57 147.61 L785.93 145.98 L787.31 144.35 L788.69 142.72 L790.08 141.09 L791.48 139.46 L792.89 137.84 L794.31 136.21 L795.73 134.58 L797.17 132.95 L798.61 131.32 L800.06 129.69 L801.51 128.06 L802.98 126.43 L804.45 124.8 L805.93 123.17 L807.42 121.54 L808.91 119.91 L810.41 118.29 L811.92 116.66 L813.44 115.03 L814.96 113.4 L816.49 111.77 L818.02 110.14 L819.56 108.51 L821.11 106.88 L822.66 105.25 L824.22 103.62 L825.79 101.99 L827.36 100.36 L828.94 98.74 L830.52 97.11 L832.11 95.48 L833.7 93.85 L835.3 92.22 L836.91 90.59 L838.52 88.96 L840.13 87.33 L841.75 85.7 L843.37 84.07 L845 82.44 L846.63 80.81 L848.27 79.19 L849.91 77.56 L851.55 75.93 L853.2 74.3 L854.85 72.67 L856.51 71.04 L858.17 69.41 L859.83 67.78 L861.49 66.15 L863.16 64.52 L864.84 62.89 L866.51 61.27 L868.19 59.64 L869.87 58.01 L871.55 56.38 L873.23 54.75 L874.92 53.12 L876.61 51.49 L878.3 49.86 L879.99 48.23 L881.69 46.6 L883.38 44.97 L885.08 43.34 L886.78 41.72 L888.48 40.09 L890.18 38.46 L891.88 36.83 L893.58 35.2 L895.28 33.57 L896.99 31.94 L898.69 30.31 L900.4 28.68 L902.1 27.05 M902.1 613.55 L899.97 611.92 L897.84 610.29 L895.71 608.66 L893.58 607.03 L891.45 605.4 L889.32 603.77 L887.2 602.14 L885.07 600.51 L882.95 598.88 L880.82 597.26 L878.7 595.63 L876.58 594 L874.46 592.37 L872.35 590.74 L870.24 589.11 L868.12 587.48 L866.02 585.85 L863.91 584.22 L861.81 582.59 L859.71 580.96 L857.61 579.33 L855.52 577.71 L853.43 576.08 L851.34 574.45 L849.26 572.82 L847.18 571.19 L845.11 569.56 L843.04 567.93 L840.98 566.3 L838.92 564.67 L836.86 563.04 L834.81 561.41 L832.76 559.79 L830.72 558.16 L828.69 556.53 L826.66 554.9 L824.64 553.27 L822.62 551.64 L820.61 550.01 L818.6 548.38 L816.61 546.75 L814.61 545.12 L812.63 543.49 L810.65 541.86 L808.68 540.24 L806.71 538.61 L804.76 536.98 L802.81 535.35 L800.86 533.72 L798.93 532.09 L797 530.46 L795.08 528.83 L793.17 527.2 L791.27 525.57 L789.38 523.94 L787.49 522.31 L785.61 520.69 L783.75 519.06 L781.89 517.43 L780.04 515.8 L778.2 514.17 L776.37 512.54 L774.55 510.91 L772.73 509.28 L770.93 507.65 L769.14 506.02 L767.36 504.39 L765.59 502.76 L763.83 501.14 L762.08 499.51 L760.34 497.88 L758.61 496.25 L756.89 494.62 L755.18 492.99 L753.49 491.36 L751.8 489.73 L750.13 488.1 L748.47 486.47 L746.82 484.84 L745.18 483.22 L743.55 481.59 L741.94 479.96 L740.34 478.33 L738.75 476.7 L737.17 475.07 L735.61 473.44 L734.06 471.81 L732.52 470.18 L730.99 468.55 L729.48 466.92 L727.98 465.29 L726.49 463.67 L725.02 462.04 L723.56 460.41 L722.11 458.78 L720.68 457.15 L719.26 455.52 L717.86 453.89 L716.47 452.26 L715.09 450.63 L713.73 449 L712.38 447.37 L711.05 445.74 L709.73 444.12 L708.42 442.49 L707.13 440.86 L705.86 439.23 L704.6 437.6 L703.35 435.97 L702.12 434.34 L700.91 432.71 L699.71 431.08 L698.53 429.45 L697.36 427.82 L696.21 426.19 L695.07 424.57 L693.95 422.94 L692.84 421.31 L691.75 419.68 L690.68 418.05 L689.62 416.42 L688.58 414.79 L687.56 413.16 L686.55 411.53 L685.56 409.9 L684.58 408.27 L683.62 406.64 L682.68 405.02 L681.76 403.39 L680.85 401.76 L679.96 400.13 L679.08 398.5 L678.22 396.87 L677.38 395.24 L676.56 393.61 L675.75 391.98 L674.96 390.35 L674.19 388.72 L673.43 387.1 L672.7 385.47 L671.98 383.84 L671.28 382.21 L670.59 380.58 L669.92 378.95 L669.27 377.32 L668.64 375.69 L668.03 374.06 L667.43 372.43 L666.85 370.8 L666.29 369.17 L665.75 367.55 L665.23 365.92 L664.72 364.29 L664.23 362.66 L663.76 361.03 L663.31 359.4 L662.88 357.77 L662.46 356.14 L662.06 354.51 L661.68 352.88 L661.32 351.25 L660.98 349.62 L660.66 348 L660.35 346.37 L660.06 344.74 L659.79 343.11 L659.54 341.48 L659.31 339.85 L659.1 338.22 L658.9 336.59 L658.73 334.96 L658.57 333.33 L658.43 331.7 L658.31 330.07 L658.21 328.45 L658.12 326.82 L658.06 325.19 L658.01 323.56 L657.98 321.93 L657.98 320.3 L657.98 318.67 L658.01 317.04 L658.06 315.41 L658.12 313.78 L658.21 312.15 L658.31 310.53 L658.43 308.9 L658.57 307.27 L658.73 305.64 L658.9 304.01 L659.1 302.38 L659.31 300.75 L659.54 299.12 L659.79 297.49 L660.06 295.86 L660.35 294.23 L660.66 292.6 L660.98 290.98 L661.32 289.35 L661.68 287.72 L662.06 286.09 L662.46 284.46 L662.88 282.83 L663.31 281.2 L663.76 279.57 L664.23 277.94 L664.72 276.31 L665.23 274.68 L665.75 273.05 L666.29 271.43 L666.85 269.8 L667.43 268.17 L668.03 266.54 L668.64 264.91 L669.27 263.28 L669.92 261.65 L670.59 260.02 L671.28 258.39 L671.98 256.76 L672.7 255.13 L673.43 253.5 L674.19 251.88 L674.96 250.25 L675.75 248.62 L676.56 246.99 L677.38 245.36 L678.22 243.73 L679.08 242.1 L679.96 240.47 L680.85 238.84 L681.76 237.21 L682.68 235.58 L683.62 233.96 L684.58 232.33 L685.56 230.7 L686.55 229.07 L687.56 227.44 L688.58 225.81 L689.62 224.18 L690.68 222.55 L691.75 220.92 L692.84 219.29 L693.95 217.66 L695.07 216.03 L696.21 214.41 L697.36 212.78 L698.53 211.15 L699.71 209.52 L700.91 207.89 L702.12 206.26 L703.35 204.63 L704.6 203 L705.86 201.37 L707.13 199.74 L708.42 198.11 L709.73 196.48 L711.05 194.86 L712.38 193.23 L713.73 191.6 L715.09 189.97 L716.47 188.34 L717.86 186.71 L719.26 185.08 L720.68 183.45 L722.11 181.82 L723.56 180.19 L725.02 178.56 L726.49 176.93 L727.98 175.31 L729.48 173.68 L730.99 172.05 L732.52 170.42 L734.06 168.79 L735.61 167.16 L737.17 165.53 L738.75 163.9 L740.34 162.27 L741.94 160.64 L743.55 159.01 L745.18 157.38 L746.82 155.76 L748.47 154.13 L750.13 152.5 L751.8 150.87 L753.49 149.24 L755.18 147.61 L756.89 145.98 L758.61 144.35 L760.34 142.72 L762.08 141.09 L763.83 139.46 L765.59 137.84 L767.36 136.21 L769.14 134.58 L770.93 132.95 L772.73 131.32 L774.55 129.69 L776.37 128.06 L778.2 126.43 L780.04 124.8 L781.89 123.17 L783.75 121.54 L785.61 119.91 L787.49 118.29 L789.38 116.66 L791.27 115.03 L793.17 113.4 L795.08 111.77 L797 110.14 L798.93 108.51 L800.86 106.88 L802.81 105.25 L804.76 103.62 L806.71 101.99 L808.68 100.36 L810.65 98.74 L812.63 97.11 L814.61 95.48 L816.61 93.85 L818.6 92.22 L820.61 90.59 L822.62 88.96 L824.64 87.33 L826.66 85.7 L828.69 84.07 L830.72 82.44 L832.76 80.81 L834.81 79.19 L836.86 77.56 L838.92 75.93 L840.98 74.3 L843.04 72.67 L845.11 71.04 L847.18 69.41 L849.26 67.78 L851.34 66.15 L853.43 64.52 L855.52 62.89 L857.61 61.27 L859.71 59.64 L861.81 58.01 L863.91 56.38 L866.02 54.75 L868.12 53.12 L870.24 51.49 L872.35 49.86 L874.46 48.23 L876.58 46.6 L878.7 44.97 L880.82 43.34 L882.95 41.72 L885.07 40.09 L887.2 38.46 L889.32 36.83 L891.45 35.2 L893.58 33.57 L895.71 31.94 L897.84 30.31 L899.97 28.68 L902.1 27.05 M902.1 613.55 L899.54 611.92 L896.99 610.29 L894.43 608.66 L891.88 607.03 L889.32 605.4 L886.77 603.77 L884.22 602.14 L881.66 600.51 L879.12 598.88 L876.57 597.26 L874.02 595.63 L871.48 594 L868.94 592.37 L866.4 590.74 L863.86 589.11 L861.33 587.48 L858.8 585.85 L856.27 584.22 L853.75 582.59 L851.23 580.96 L848.71 579.33 L846.2 577.71 L843.7 576.08 L841.19 574.45 L838.69 572.82 L836.2 571.19 L833.71 569.56 L831.23 567.93 L828.75 566.3 L826.28 564.67 L823.81 563.04 L821.35 561.41 L818.9 559.79 L816.45 558.16 L814.01 556.53 L811.57 554.9 L809.15 553.27 L806.72 551.64 L804.31 550.01 L801.91 548.38 L799.51 546.75 L797.12 545.12 L794.73 543.49 L792.36 541.86 L789.99 540.24 L787.64 538.61 L785.29 536.98 L782.95 535.35 L780.62 533.72 L778.29 532.09 L775.98 530.46 L773.68 528.83 L771.39 527.2 L769.1 525.57 L766.83 523.94 L764.57 522.31 L762.32 520.69 L760.08 519.06 L757.84 517.43 L755.62 515.8 L753.42 514.17 L751.22 512.54 L749.03 510.91 L746.86 509.28 L744.7 507.65 L742.55 506.02 L740.41 504.39 L738.28 502.76 L736.17 501.14 L734.07 499.51 L731.98 497.88 L729.91 496.25 L727.85 494.62 L725.8 492.99 L723.76 491.36 L721.74 489.73 L719.73 488.1 L717.74 486.47 L715.76 484.84 L713.8 483.22 L711.84 481.59 L709.91 479.96 L707.99 478.33 L706.08 476.7 L704.19 475.07 L702.31 473.44 L700.45 471.81 L698.6 470.18 L696.77 468.55 L694.95 466.92 L693.15 465.29 L691.37 463.67 L689.6 462.04 L687.85 460.41 L686.11 458.78 L684.4 457.15 L682.69 455.52 L681.01 453.89 L679.34 452.26 L677.69 450.63 L676.05 449 L674.44 447.37 L672.83 445.74 L671.25 444.12 L669.69 442.49 L668.14 440.86 L666.61 439.23 L665.1 437.6 L663.6 435.97 L662.13 434.34 L660.67 432.71 L659.23 431.08 L657.81 429.45 L656.41 427.82 L655.03 426.19 L653.66 424.57 L652.32 422.94 L650.99 421.31 L649.69 419.68 L648.4 418.05 L647.13 416.42 L645.88 414.79 L644.65 413.16 L643.44 411.53 L642.25 409.9 L641.08 408.27 L639.93 406.64 L638.8 405.02 L637.69 403.39 L636.6 401.76 L635.53 400.13 L634.48 398.5 L633.45 396.87 L632.44 395.24 L631.45 393.61 L630.48 391.98 L629.53 390.35 L628.61 388.72 L627.7 387.1 L626.82 385.47 L625.95 383.84 L625.11 382.21 L624.29 380.58 L623.49 378.95 L622.71 377.32 L621.95 375.69 L621.21 374.06 L620.5 372.43 L619.8 370.8 L619.13 369.17 L618.48 367.55 L617.85 365.92 L617.24 364.29 L616.66 362.66 L616.09 361.03 L615.55 359.4 L615.03 357.77 L614.53 356.14 L614.06 354.51 L613.6 352.88 L613.17 351.25 L612.76 349.62 L612.37 348 L612 346.37 L611.66 344.74 L611.33 343.11 L611.03 341.48 L610.75 339.85 L610.5 338.22 L610.26 336.59 L610.05 334.96 L609.86 333.33 L609.7 331.7 L609.55 330.07 L609.43 328.45 L609.33 326.82 L609.25 325.19 L609.19 323.56 L609.16 321.93 L609.15 320.3 L609.16 318.67 L609.19 317.04 L609.25 315.41 L609.33 313.78 L609.43 312.15 L609.55 310.53 L609.7 308.9 L609.86 307.27 L610.05 305.64 L610.26 304.01 L610.5 302.38 L610.75 300.75 L611.03 299.12 L611.33 297.49 L611.66 295.86 L612 294.23 L612.37 292.6 L612.76 290.98 L613.17 289.35 L613.6 287.72 L614.06 286.09 L614.53 284.46 L615.03 282.83 L615.55 281.2 L616.09 279.57 L616.66 277.94 L617.24 276.31 L617.85 274.68 L618.48 273.05 L619.13 271.43 L619.8 269.8 L620.5 268.17 L621.21 266.54 L621.95 264.91 L622.71 263.28 L623.49 261.65 L624.29 260.02 L625.11 258.39 L625.95 256.76 L626.82 255.13 L627.7 253.5 L628.61 251.88 L629.53 250.25 L630.48 248.62 L631.45 246.99 L632.44 245.36 L633.45 243.73 L634.48 242.1 L635.53 240.47 L636.6 238.84 L637.69 237.21 L638.8 235.58 L639.93 233.96 L641.08 232.33 L642.25 230.7 L643.44 229.07 L644.65 227.44 L645.88 225.81 L647.13 224.18 L648.4 222.55 L649.69 220.92 L650.99 219.29 L652.32 217.66 L653.66 216.03 L655.03 214.41 L656.41 212.78 L657.81 211.15 L659.23 209.52 L660.67 207.89 L662.13 206.26 L663.6 204.63 L665.1 203 L666.61 201.37 L668.14 199.74 L669.69 198.11 L671.25 196.48 L672.83 194.86 L674.44 193.23 L676.05 191.6 L677.69 189.97 L679.34 188.34 L681.01 186.71 L682.69 185.08 L684.4 183.45 L686.11 181.82 L687.85 180.19 L689.6 178.56 L691.37 176.93 L693.15 175.31 L694.95 173.68 L696.77 172.05 L698.6 170.42 L700.45 168.79 L702.31 167.16 L704.19 165.53 L706.08 163.9 L707.99 162.27 L709.91 160.64 L711.84 159.01 L713.8 157.38 L715.76 155.76 L717.74 154.13 L719.73 152.5 L721.74 150.87 L723.76 149.24 L725.8 147.61 L727.85 145.98 L729.91 144.35 L731.98 142.72 L734.07 141.09 L736.17 139.46 L738.28 137.84 L740.41 136.21 L742.55 134.58 L744.7 132.95 L746.86 131.32 L749.03 129.69 L751.22 128.06 L753.42 126.43 L755.62 124.8 L757.84 123.17 L760.08 121.54 L762.32 119.91 L764.57 118.29 L766.83 116.66 L769.1 115.03 L771.39 113.4 L773.68 111.77 L775.98 110.14 L778.29 108.51 L780.62 106.88 L782.95 105.25 L785.29 103.62 L787.64 101.99 L789.99 100.36 L792.36 98.74 L794.73 97.11 L797.12 95.48 L799.51 93.85 L801.91 92.22 L804.31 90.59 L806.72 88.96 L809.15 87.33 L811.57 85.7 L814.01 84.07 L816.45 82.44 L818.9 80.81 L821.35 79.19 L823.81 77.56 L826.28 75.93 L828.75 74.3 L831.23 72.67 L833.71 71.04 L836.2 69.41 L838.69 67.78 L841.19 66.15 L843.7 64.52 L846.2 62.89 L848.71 61.27 L851.23 59.64 L853.75 58.01 L856.27 56.38 L858.8 54.75 L861.33 53.12 L863.86 51.49 L866.4 49.86 L868.94 48.23 L871.48 46.6 L874.02 44.97 L876.57 43.34 L879.12 41.72 L881.66 40.09 L884.22 38.46 L886.77 36.83 L889.32 35.2 L891.88 33.57 L894.43 31.94 L896.99 30.31 L899.54 28.68 L902.1 27.05 M902.1 613.55 L899.12 611.92 L896.14 610.29 L893.15 608.66 L890.17 607.03 L887.19 605.4 L884.21 603.77 L881.24 602.14 L878.26 600.51 L875.28 598.88 L872.31 597.26 L869.34 595.63 L866.37 594 L863.41 592.37 L860.45 590.74 L857.49 589.11 L854.53 587.48 L851.58 585.85 L848.63 584.22 L845.69 582.59 L842.75 580.96 L839.82 579.33 L836.89 577.71 L833.96 576.08 L831.04 574.45 L828.13 572.82 L825.22 571.19 L822.31 569.56 L819.42 567.93 L816.53 566.3 L813.64 564.67 L810.76 563.04 L807.89 561.41 L805.03 559.79 L802.17 558.16 L799.33 556.53 L796.49 554.9 L793.65 553.27 L790.83 551.64 L788.01 550.01 L785.21 548.38 L782.41 546.75 L779.62 545.12 L776.84 543.49 L774.07 541.86 L771.31 540.24 L768.56 538.61 L765.82 536.98 L763.09 535.35 L760.37 533.72 L757.66 532.09 L754.96 530.46 L752.28 528.83 L749.6 527.2 L746.94 525.57 L744.29 523.94 L741.65 522.31 L739.02 520.69 L736.4 519.06 L733.8 517.43 L731.21 515.8 L728.64 514.17 L726.07 512.54 L723.52 510.91 L720.99 509.28 L718.46 507.65 L715.96 506.02 L713.46 504.39 L710.98 502.76 L708.52 501.14 L706.07 499.51 L703.63 497.88 L701.21 496.25 L698.8 494.62 L696.41 492.99 L694.04 491.36 L691.68 489.73 L689.34 488.1 L687.01 486.47 L684.7 484.84 L682.41 483.22 L680.13 481.59 L677.88 479.96 L675.63 478.33 L673.41 476.7 L671.2 475.07 L669.01 473.44 L666.84 471.81 L664.68 470.18 L662.55 468.55 L660.43 466.92 L658.33 465.29 L656.25 463.67 L654.19 462.04 L652.14 460.41 L650.12 458.78 L648.11 457.15 L646.13 455.52 L644.16 453.89 L642.21 452.26 L640.29 450.63 L638.38 449 L636.49 447.37 L634.62 445.74 L632.78 444.12 L630.95 442.49 L629.15 440.86 L627.36 439.23 L625.6 437.6 L623.86 435.97 L622.13 434.34 L620.43 432.71 L618.76 431.08 L617.1 429.45 L615.46 427.82 L613.85 426.19 L612.26 424.57 L610.69 422.94 L609.14 421.31 L607.62 419.68 L606.11 418.05 L604.63 416.42 L603.18 414.79 L601.74 413.16 L600.33 411.53 L598.94 409.9 L597.58 408.27 L596.23 406.64 L594.91 405.02 L593.62 403.39 L592.35 401.76 L591.1 400.13 L589.87 398.5 L588.67 396.87 L587.49 395.24 L586.34 393.61 L585.21 391.98 L584.11 390.35 L583.03 388.72 L581.97 387.1 L580.94 385.47 L579.93 383.84 L578.95 382.21 L577.99 380.58 L577.05 378.95 L576.14 377.32 L575.26 375.69 L574.4 374.06 L573.56 372.43 L572.76 370.8 L571.97 369.17 L571.21 367.55 L570.48 365.92 L569.77 364.29 L569.08 362.66 L568.43 361.03 L567.79 359.4 L567.19 357.77 L566.6 356.14 L566.05 354.51 L565.52 352.88 L565.01 351.25 L564.53 349.62 L564.08 348 L563.65 346.37 L563.25 344.74 L562.87 343.11 L562.52 341.48 L562.2 339.85 L561.9 338.22 L561.63 336.59 L561.38 334.96 L561.16 333.33 L560.96 331.7 L560.79 330.07 L560.65 328.45 L560.53 326.82 L560.44 325.19 L560.38 323.56 L560.34 321.93 L560.33 320.3 L560.34 318.67 L560.38 317.04 L560.44 315.41 L560.53 313.78 L560.65 312.15 L560.79 310.53 L560.96 308.9 L561.16 307.27 L561.38 305.64 L561.63 304.01 L561.9 302.38 L562.2 300.75 L562.52 299.12 L562.87 297.49 L563.25 295.86 L563.65 294.23 L564.08 292.6 L564.53 290.98 L565.01 289.35 L565.52 287.72 L566.05 286.09 L566.6 284.46 L567.19 282.83 L567.79 281.2 L568.43 279.57 L569.08 277.94 L569.77 276.31 L570.48 274.68 L571.21 273.05 L571.97 271.43 L572.76 269.8 L573.56 268.17 L574.4 266.54 L575.26 264.91 L576.14 263.28 L577.05 261.65 L577.99 260.02 L578.95 258.39 L579.93 256.76 L580.94 255.13 L581.97 253.5 L583.03 251.88 L584.11 250.25 L585.21 248.62 L586.34 246.99 L587.49 245.36 L588.67 243.73 L589.87 242.1 L591.1 240.47 L592.35 238.84 L593.62 237.21 L594.91 235.58 L596.23 233.96 L597.58 232.33 L598.94 230.7 L600.33 229.07 L601.74 227.44 L603.18 225.81 L604.63 224.18 L606.11 222.55 L607.62 220.92 L609.14 219.29 L610.69 217.66 L612.26 216.03 L613.85 214.41 L615.46 212.78 L617.1 211.15 L618.76 209.52 L620.43 207.89 L622.13 206.26 L623.86 204.63 L625.6 203 L627.36 201.37 L629.15 199.74 L630.95 198.11 L632.78 196.48 L634.62 194.86 L636.49 193.23 L638.38 191.6 L640.29 189.97 L642.21 188.34 L644.16 186.71 L646.13 185.08 L648.11 183.45 L650.12 181.82 L652.14 180.19 L654.19 178.56 L656.25 176.93 L658.33 175.31 L660.43 173.68 L662.55 172.05 L664.68 170.42 L666.84 168.79 L669.01 167.16 L671.2 165.53 L673.41 163.9 L675.63 162.27 L677.88 160.64 L680.13 159.01 L682.41 157.38 L684.7 155.76 L687.01 154.13 L689.34 152.5 L691.68 150.87 L694.04 149.24 L696.41 147.61 L698.8 145.98 L701.21 144.35 L703.63 142.72 L706.07 141.09 L708.52 139.46 L710.98 137.84 L713.46 136.21 L715.96 134.58 L718.46 132.95 L720.99 131.32 L723.52 129.69 L726.07 128.06 L728.64 126.43 L731.21 124.8 L733.8 123.17 L736.4 121.54 L739.02 119.91 L741.65 118.29 L744.29 116.66 L746.94 115.03 L749.6 113.4 L752.28 111.77 L754.96 110.14 L757.66 108.51 L760.37 106.88 L763.09 105.25 L765.82 103.62 L768.56 101.99 L771.31 100.36 L774.07 98.74 L776.84 97.11 L779.62 95.48 L782.41 93.85 L785.21 92.22 L788.01 90.59 L790.83 88.96 L793.65 87.33 L796.49 85.7 L799.33 84.07 L802.17 82.44 L805.03 80.81 L807.89 79.19 L810.76 77.56 L813.64 75.93 L816.53 74.3 L819.42 72.67 L822.31 71.04 L825.22 69.41 L828.13 67.78 L831.04 66.15 L833.96 64.52 L836.89 62.89 L839.82 61.27 L842.75 59.64 L845.69 58.01 L848.63 56.38 L851.58 54.75 L854.53 53.12 L857.49 51.49 L860.45 49.86 L863.41 48.23 L866.37 46.6 L869.34 44.97 L872.31 43.34 L875.28 41.72 L878.26 40.09 L881.24 38.46 L884.21 36.83 L887.19 35.2 L890.17 33.57 L893.15 31.94 L896.14 30.31 L899.12 28.68 L902.1 27.05 M902.1 613.55 L898.69 611.92 L895.28 610.29 L891.88 608.66 L888.47 607.03 L885.06 605.4 L881.66 603.77 L878.25 602.14 L874.85 600.51 L871.45 598.88 L868.06 597.26 L864.66 595.63 L861.27 594 L857.88 592.37 L854.5 590.74 L851.12 589.11 L847.74 587.48 L844.37 585.85 L841 584.22 L837.63 582.59 L834.27 580.96 L830.92 579.33 L827.57 577.71 L824.23 576.08 L820.89 574.45 L817.56 572.82 L814.23 571.19 L810.92 569.56 L807.61 567.93 L804.3 566.3 L801.01 564.67 L797.72 563.04 L794.44 561.41 L791.16 559.79 L787.9 558.16 L784.64 556.53 L781.4 554.9 L778.16 553.27 L774.93 551.64 L771.72 550.01 L768.51 548.38 L765.31 546.75 L762.12 545.12 L758.94 543.49 L755.78 541.86 L752.62 540.24 L749.48 538.61 L746.35 536.98 L743.23 535.35 L740.12 533.72 L737.03 532.09 L733.94 530.46 L730.87 528.83 L727.82 527.2 L724.77 525.57 L721.74 523.94 L718.72 522.31 L715.72 520.69 L712.73 519.06 L709.76 517.43 L706.8 515.8 L703.86 514.17 L700.93 512.54 L698.01 510.91 L695.11 509.28 L692.23 507.65 L689.36 506.02 L686.51 504.39 L683.68 502.76 L680.86 501.14 L678.06 499.51 L675.28 497.88 L672.51 496.25 L669.76 494.62 L667.03 492.99 L664.32 491.36 L661.62 489.73 L658.95 488.1 L656.29 486.47 L653.65 484.84 L651.03 483.22 L648.43 481.59 L645.84 479.96 L643.28 478.33 L640.74 476.7 L638.21 475.07 L635.71 473.44 L633.23 471.81 L630.77 470.18 L628.32 468.55 L625.9 466.92 L623.5 465.29 L621.13 463.67 L618.77 462.04 L616.43 460.41 L614.12 458.78 L611.83 457.15 L609.56 455.52 L607.31 453.89 L605.09 452.26 L602.88 450.63 L600.7 449 L598.55 447.37 L596.41 445.74 L594.3 444.12 L592.22 442.49 L590.15 440.86 L588.11 439.23 L586.1 437.6 L584.11 435.97 L582.14 434.34 L580.2 432.71 L578.28 431.08 L576.38 429.45 L574.52 427.82 L572.67 426.19 L570.85 424.57 L569.06 422.94 L567.29 421.31 L565.55 419.68 L563.83 418.05 L562.14 416.42 L560.47 414.79 L558.83 413.16 L557.22 411.53 L555.63 409.9 L554.07 408.27 L552.54 406.64 L551.03 405.02 L549.55 403.39 L548.1 401.76 L546.67 400.13 L545.27 398.5 L543.9 396.87 L542.55 395.24 L541.23 393.61 L539.94 391.98 L538.68 390.35 L537.44 388.72 L536.24 387.1 L535.06 385.47 L533.9 383.84 L532.78 382.21 L531.68 380.58 L530.62 378.95 L529.58 377.32 L528.57 375.69 L527.59 374.06 L526.63 372.43 L525.71 370.8 L524.81 369.17 L523.94 367.55 L523.1 365.92 L522.29 364.29 L521.51 362.66 L520.76 361.03 L520.04 359.4 L519.34 357.77 L518.68 356.14 L518.04 354.51 L517.43 352.88 L516.86 351.25 L516.31 349.62 L515.79 348 L515.3 346.37 L514.84 344.74 L514.41 343.11 L514.01 341.48 L513.64 339.85 L513.3 338.22 L512.99 336.59 L512.7 334.96 L512.45 333.33 L512.23 331.7 L512.04 330.07 L511.87 328.45 L511.74 326.82 L511.63 325.19 L511.56 323.56 L511.51 321.93 L511.5 320.3 L511.51 318.67 L511.56 317.04 L511.63 315.41 L511.74 313.78 L511.87 312.15 L512.04 310.53 L512.23 308.9 L512.45 307.27 L512.7 305.64 L512.99 304.01 L513.3 302.38 L513.64 300.75 L514.01 299.12 L514.41 297.49 L514.84 295.86 L515.3 294.23 L515.79 292.6 L516.31 290.98 L516.86 289.35 L517.43 287.72 L518.04 286.09 L518.68 284.46 L519.34 282.83 L520.04 281.2 L520.76 279.57 L521.51 277.94 L522.29 276.31 L523.1 274.68 L523.94 273.05 L524.81 271.43 L525.71 269.8 L526.63 268.17 L527.59 266.54 L528.57 264.91 L529.58 263.28 L530.62 261.65 L531.68 260.02 L532.78 258.39 L533.9 256.76 L535.06 255.13 L536.24 253.5 L537.44 251.88 L538.68 250.25 L539.94 248.62 L541.23 246.99 L542.55 245.36 L543.9 243.73 L545.27 242.1 L546.67 240.47 L548.1 238.84 L549.55 237.21 L551.03 235.58 L552.54 233.96 L554.07 232.33 L555.63 230.7 L557.22 229.07 L558.83 227.44 L560.47 225.81 L562.14 224.18 L563.83 222.55 L565.55 220.92 L567.29 219.29 L569.06 217.66 L570.85 216.03 L572.67 214.41 L574.52 212.78 L576.38 211.15 L578.28 209.52 L580.2 207.89 L582.14 206.26 L584.11 204.63 L586.1 203 L588.11 201.37 L590.15 199.74 L592.22 198.11 L594.3 196.48 L596.41 194.86 L598.55 193.23 L600.7 191.6 L602.88 189.97 L605.09 188.34 L607.31 186.71 L609.56 185.08 L611.83 183.45 L614.12 181.82 L616.43 180.19 L618.77 178.56 L621.13 176.93 L623.5 175.31 L625.9 173.68 L628.32 172.05 L630.77 170.42 L633.23 168.79 L635.71 167.16 L638.21 165.53 L640.74 163.9 L643.28 162.27 L645.84 160.64 L648.43 159.01 L651.03 157.38 L653.65 155.76 L656.29 154.13 L658.95 152.5 L661.62 150.87 L664.32 149.24 L667.03 147.61 L669.76 145.98 L672.51 144.35 L675.28 142.72 L678.06 141.09 L680.86 139.46 L683.68 137.84 L686.51 136.21 L689.36 134.58 L692.23 132.95 L695.11 131.32 L698.01 129.69 L700.93 128.06 L703.86 126.43 L706.8 124.8 L709.76 123.17 L712.73 121.54 L715.72 119.91 L718.72 118.29 L721.74 116.66 L724.77 115.03 L727.82 113.4 L730.87 111.77 L733.94 110.14 L737.03 108.51 L740.12 106.88 L743.23 105.25 L746.35 103.62 L749.48 101.99 L752.62 100.36 L755.78 98.74 L758.94 97.11 L762.12 95.48 L765.31 93.85 L768.51 92.22 L771.72 90.59 L774.93 88.96 L778.16 87.33 L781.4 85.7 L784.64 84.07 L787.9 82.44 L791.16 80.81 L794.44 79.19 L797.72 77.56 L801.01 75.93 L804.3 74.3 L807.61 72.67 L810.92 71.04 L814.23 69.41 L817.56 67.78 L820.89 66.15 L824.23 64.52 L827.57 62.89 L830.92 61.27 L834.27 59.64 L837.63 58.01 L841 56.38 L844.37 54.75 L847.74 53.12 L851.12 51.49 L854.5 49.86 L857.88 48.23 L861.27 46.6 L864.66 44.97 L868.06 43.34 L871.45 41.72 L874.85 40.09 L878.25 38.46 L881.66 36.83 L885.06 35.2 L888.47 33.57 L891.88 31.94 L895.28 30.31 L898.69 28.68 L902.1 27.05 M902.1 613.55 L898.27 611.92 L894.43 610.29 L890.6 608.66 L886.76 607.03 L882.93 605.4 L879.1 603.77 L875.27 602.14 L871.45 600.51 L867.62 598.88 L863.8 597.26 L859.98 595.63 L856.17 594 L852.36 592.37 L848.55 590.74 L844.74 589.11 L840.94 587.48 L837.15 585.85 L833.36 584.22 L829.57 582.59 L825.79 580.96 L822.02 579.33 L818.25 577.71 L814.49 576.08 L810.74 574.45 L806.99 572.82 L803.25 571.19 L799.52 569.56 L795.79 567.93 L792.08 566.3 L788.37 564.67 L784.67 563.04 L780.98 561.41 L777.3 559.79 L773.62 558.16 L769.96 556.53 L766.31 554.9 L762.67 553.27 L759.04 551.64 L755.42 550.01 L751.81 548.38 L748.21 546.75 L744.62 545.12 L741.05 543.49 L737.49 541.86 L733.94 540.24 L730.4 538.61 L726.88 536.98 L723.37 535.35 L719.87 533.72 L716.39 532.09 L712.92 530.46 L709.47 528.83 L706.03 527.2 L702.61 525.57 L699.2 523.94 L695.8 522.31 L692.42 520.69 L689.06 519.06 L685.72 517.43 L682.39 515.8 L679.07 514.17 L675.78 512.54 L672.5 510.91 L669.24 509.28 L666 507.65 L662.77 506.02 L659.57 504.39 L656.38 502.76 L653.21 501.14 L650.06 499.51 L646.92 497.88 L643.81 496.25 L640.72 494.62 L637.65 492.99 L634.6 491.36 L631.56 489.73 L628.55 488.1 L625.56 486.47 L622.59 484.84 L619.64 483.22 L616.72 481.59 L613.81 479.96 L610.93 478.33 L608.07 476.7 L605.23 475.07 L602.41 473.44 L599.62 471.81 L596.85 470.18 L594.1 468.55 L591.38 466.92 L588.68 465.29 L586 463.67 L583.35 462.04 L580.72 460.41 L578.12 458.78 L575.54 457.15 L572.99 455.52 L570.46 453.89 L567.96 452.26 L565.48 450.63 L563.03 449 L560.6 447.37 L558.2 445.74 L555.83 444.12 L553.48 442.49 L551.16 440.86 L548.87 439.23 L546.6 437.6 L544.36 435.97 L542.14 434.34 L539.96 432.71 L537.8 431.08 L535.67 429.45 L533.57 427.82 L531.49 426.19 L529.45 424.57 L527.43 422.94 L525.44 421.31 L523.48 419.68 L521.55 418.05 L519.64 416.42 L517.77 414.79 L515.93 413.16 L514.11 411.53 L512.33 409.9 L510.57 408.27 L508.84 406.64 L507.15 405.02 L505.48 403.39 L503.85 401.76 L502.24 400.13 L500.67 398.5 L499.12 396.87 L497.61 395.24 L496.12 393.61 L494.67 391.98 L493.25 390.35 L491.86 388.72 L490.5 387.1 L489.18 385.47 L487.88 383.84 L486.62 382.21 L485.38 380.58 L484.18 378.95 L483.01 377.32 L481.88 375.69 L480.77 374.06 L479.7 372.43 L478.66 370.8 L477.65 369.17 L476.67 367.55 L475.73 365.92 L474.82 364.29 L473.94 362.66 L473.09 361.03 L472.28 359.4 L471.5 357.77 L470.75 356.14 L470.03 354.51 L469.35 352.88 L468.7 351.25 L468.09 349.62 L467.5 348 L466.95 346.37 L466.43 344.74 L465.95 343.11 L465.5 341.48 L465.08 339.85 L464.7 338.22 L464.35 336.59 L464.03 334.96 L463.75 333.33 L463.49 331.7 L463.28 330.07 L463.09 328.45 L462.94 326.82 L462.83 325.19 L462.74 323.56 L462.69 321.93 L462.68 320.3 L462.69 318.67 L462.74 317.04 L462.83 315.41 L462.94 313.78 L463.09 312.15 L463.28 310.53 L463.49 308.9 L463.75 307.27 L464.03 305.64 L464.35 304.01 L464.7 302.38 L465.08 300.75 L465.5 299.12 L465.95 297.49 L466.43 295.86 L466.95 294.23 L467.5 292.6 L468.09 290.98 L468.7 289.35 L469.35 287.72 L470.03 286.09 L470.75 284.46 L471.5 282.83 L472.28 281.2 L473.09 279.57 L473.94 277.94 L474.82 276.31 L475.73 274.68 L476.67 273.05 L477.65 271.43 L478.66 269.8 L479.7 268.17 L480.77 266.54 L481.88 264.91 L483.01 263.28 L484.18 261.65 L485.38 260.02 L486.62 258.39 L487.88 256.76 L489.18 255.13 L490.5 253.5 L491.86 251.88 L493.25 250.25 L494.67 248.62 L496.12 246.99 L497.61 245.36 L499.12 243.73 L500.67 242.1 L502.24 240.47 L503.85 238.84 L505.48 237.21 L507.15 235.58 L508.84 233.96 L510.57 232.33 L512.33 230.7 L514.11 229.07 L515.93 227.44 L517.77 225.81 L519.64 224.18 L521.55 222.55 L523.48 220.92 L525.44 219.29 L527.43 217.66 L529.45 216.03 L531.49 214.41 L533.57 212.78 L535.67 211.15 L537.8 209.52 L539.96 207.89 L542.14 206.26 L544.36 204.63 L546.6 203 L548.87 201.37 L551.16 199.74 L553.48 198.11 L555.83 196.48 L558.2 194.86 L560.6 193.23 L563.03 191.6 L565.48 189.97 L567.96 188.34 L570.46 186.71 L572.99 185.08 L575.54 183.45 L578.12 181.82 L580.72 180.19 L583.35 178.56 L586 176.93 L588.68 175.31 L591.38 173.68 L594.1 172.05 L596.85 170.42 L599.62 168.79 L602.41 167.16 L605.23 165.53 L608.07 163.9 L610.93 162.27 L613.81 160.64 L616.72 159.01 L619.64 157.38 L622.59 155.76 L625.56 154.13 L628.55 152.5 L631.56 150.87 L634.6 149.24 L637.65 147.61 L640.72 145.98 L643.81 144.35 L646.92 142.72 L650.06 141.09 L653.21 139.46 L656.38 137.84 L659.57 136.21 L662.77 134.58 L666 132.95 L669.24 131.32 L672.5 129.69 L675.78 128.06 L679.07 126.43 L682.39 124.8 L685.72 123.17 L689.06 121.54 L692.42 119.91 L695.8 118.29 L699.2 116.66 L702.61 115.03 L706.03 113.4 L709.47 111.77 L712.92 110.14 L716.39 108.51 L719.87 106.88 L723.37 105.25 L726.88 103.62 L730.4 101.99 L733.94 100.36 L737.49 98.74 L741.05 97.11 L744.62 95.48 L748.21 93.85 L751.81 92.22 L755.42 90.59 L759.04 88.96 L762.67 87.33 L766.31 85.7 L769.96 84.07 L773.62 82.44 L777.3 80.81 L780.98 79.19 L784.67 77.56 L788.37 75.93 L792.08 74.3 L795.79 72.67 L799.52 71.04 L803.25 69.41 L806.99 67.78 L810.74 66.15 L814.49 64.52 L818.25 62.89 L822.02 61.27 L825.79 59.64 L829.57 58.01 L833.36 56.38 L837.15 54.75 L840.94 53.12 L844.74 51.49 L848.55 49.86 L852.36 48.23 L856.17 46.6 L859.98 44.97 L863.8 43.34 L867.62 41.72 L871.45 40.09 L875.27 38.46 L879.1 36.83 L882.93 35.2 L886.76 33.57 L890.6 31.94 L894.43 30.31 L898.27 28.68 L902.1 27.05 M902.1 613.55 L897.84 611.92 L893.58 610.29 L889.32 608.66 L885.06 607.03 L880.8 605.4 L876.55 603.77 L872.29 602.14 L868.04 600.51 L863.79 598.88 L859.55 597.26 L855.3 595.63 L851.06 594 L846.83 592.37 L842.6 590.74 L838.37 589.11 L834.15 587.48 L829.93 585.85 L825.72 584.22 L821.52 582.59 L817.32 580.96 L813.12 579.33 L808.94 577.71 L804.76 576.08 L800.59 574.45 L796.42 572.82 L792.27 571.19 L788.12 569.56 L783.98 567.93 L779.85 566.3 L775.73 564.67 L771.62 563.04 L767.52 561.41 L763.43 559.79 L759.35 558.16 L755.28 556.53 L751.22 554.9 L747.18 553.27 L743.14 551.64 L739.12 550.01 L735.11 548.38 L731.11 546.75 L727.13 545.12 L723.16 543.49 L719.2 541.86 L715.25 540.24 L711.33 538.61 L707.41 536.98 L703.51 535.35 L699.63 533.72 L695.76 532.09 L691.9 530.46 L688.07 528.83 L684.24 527.2 L680.44 525.57 L676.65 523.94 L672.88 522.31 L669.13 520.69 L665.39 519.06 L661.67 517.43 L657.97 515.8 L654.29 514.17 L650.63 512.54 L646.99 510.91 L643.37 509.28 L639.76 507.65 L636.18 506.02 L632.62 504.39 L629.07 502.76 L625.55 501.14 L622.05 499.51 L618.57 497.88 L615.11 496.25 L611.68 494.62 L608.26 492.99 L604.87 491.36 L601.5 489.73 L598.16 488.1 L594.83 486.47 L591.53 484.84 L588.26 483.22 L585.01 481.59 L581.78 479.96 L578.58 478.33 L575.4 476.7 L572.24 475.07 L569.11 473.44 L566.01 471.81 L562.93 470.18 L559.88 468.55 L556.86 466.92 L553.86 465.29 L550.88 463.67 L547.94 462.04 L545.02 460.41 L542.12 458.78 L539.26 457.15 L536.42 455.52 L533.61 453.89 L530.83 452.26 L528.08 450.63 L525.35 449 L522.66 447.37 L519.99 445.74 L517.35 444.12 L514.75 442.49 L512.17 440.86 L509.62 439.23 L507.1 437.6 L504.61 435.97 L502.15 434.34 L499.72 432.71 L497.32 431.08 L494.96 429.45 L492.62 427.82 L490.31 426.19 L488.04 424.57 L485.8 422.94 L483.59 421.31 L481.41 419.68 L479.26 418.05 L477.15 416.42 L475.07 414.79 L473.02 413.16 L471 411.53 L469.02 409.9 L467.07 408.27 L465.15 406.64 L463.26 405.02 L461.41 403.39 L459.6 401.76 L457.81 400.13 L456.06 398.5 L454.35 396.87 L452.66 395.24 L451.02 393.61 L449.4 391.98 L447.82 390.35 L446.28 388.72 L444.77 387.1 L443.3 385.47 L441.86 383.84 L440.45 382.21 L439.08 380.58 L437.75 378.95 L436.45 377.32 L435.18 375.69 L433.96 374.06 L432.76 372.43 L431.61 370.8 L430.49 369.17 L429.4 367.55 L428.35 365.92 L427.34 364.29 L426.36 362.66 L425.42 361.03 L424.52 359.4 L423.65 357.77 L422.82 356.14 L422.03 354.51 L421.27 352.88 L420.55 351.25 L419.86 349.62 L419.21 348 L418.6 346.37 L418.03 344.74 L417.49 343.11 L416.99 341.48 L416.52 339.85 L416.1 338.22 L415.71 336.59 L415.36 334.96 L415.04 333.33 L414.76 331.7 L414.52 330.07 L414.31 328.45 L414.15 326.82 L414.02 325.19 L413.92 323.56 L413.87 321.93 L413.85 320.3 L413.87 318.67 L413.92 317.04 L414.02 315.41 L414.15 313.78 L414.31 312.15 L414.52 310.53 L414.76 308.9 L415.04 307.27 L415.36 305.64 L415.71 304.01 L416.1 302.38 L416.52 300.75 L416.99 299.12 L417.49 297.49 L418.03 295.86 L418.6 294.23 L419.21 292.6 L419.86 290.98 L420.55 289.35 L421.27 287.72 L422.03 286.09 L422.82 284.46 L423.65 282.83 L424.52 281.2 L425.42 279.57 L426.36 277.94 L427.34 276.31 L428.35 274.68 L429.4 273.05 L430.49 271.43 L431.61 269.8 L432.76 268.17 L433.96 266.54 L435.18 264.91 L436.45 263.28 L437.75 261.65 L439.08 260.02 L440.45 258.39 L441.86 256.76 L443.3 255.13 L444.77 253.5 L446.28 251.88 L447.82 250.25 L449.4 248.62 L451.02 246.99 L452.66 245.36 L454.35 243.73 L456.06 242.1 L457.81 240.47 L459.6 238.84 L461.41 237.21 L463.26 235.58 L465.15 233.96 L467.07 232.33 L469.02 230.7 L471 229.07 L473.02 227.44 L475.07 225.81 L477.15 224.18 L479.26 222.55 L481.41 220.92 L483.59 219.29 L485.8 217.66 L488.04 216.03 L490.31 214.41 L492.62 212.78 L494.96 211.15 L497.32 209.52 L499.72 207.89 L502.15 206.26 L504.61 204.63 L507.1 203 L509.62 201.37 L512.17 199.74 L514.75 198.11 L517.35 196.48 L519.99 194.86 L522.66 193.23 L525.35 191.6 L528.08 189.97 L530.83 188.34 L533.61 186.71 L536.42 185.08 L539.26 183.45 L542.12 181.82 L545.02 180.19 L547.94 178.56 L550.88 176.93 L553.86 175.31 L556.86 173.68 L559.88 172.05 L562.93 170.42 L566.01 168.79 L569.11 167.16 L572.24 165.53 L575.4 163.9 L578.58 162.27 L581.78 160.64 L585.01 159.01 L588.26 157.38 L591.53 155.76 L594.83 154.13 L598.16 152.5 L601.5 150.87 L604.87 149.24 L608.26 147.61 L611.68 145.98 L615.11 144.35 L618.57 142.72 L622.05 141.09 L625.55 139.46 L629.07 137.84 L632.62 136.21 L636.18 134.58 L639.76 132.95 L643.37 131.32 L646.99 129.69 L650.63 128.06 L654.29 126.43 L657.97 124.8 L661.67 123.17 L665.39 121.54 L669.13 119.91 L672.88 118.29 L676.65 116.66 L680.44 115.03 L684.24 113.4 L688.07 111.77 L691.9 110.14 L695.76 108.51 L699.63 106.88 L703.51 105.25 L707.41 103.62 L711.33 101.99 L715.25 100.36 L719.2 98.74 L723.16 97.11 L727.13 95.48 L731.11 93.85 L735.11 92.22 L739.12 90.59 L743.14 88.96 L747.18 87.33 L751.22 85.7 L755.28 84.07 L759.35 82.44 L763.43 80.81 L767.52 79.19 L771.62 77.56 L775.73 75.93 L779.85 74.3 L783.98 72.67 L788.12 71.04 L792.27 69.41 L796.42 67.78 L800.59 66.15 L804.76 64.52 L808.94 62.89 L813.12 61.27 L817.32 59.64 L821.52 58.01 L825.72 56.38 L829.93 54.75 L834.15 53.12 L838.37 51.49 L842.6 49.86 L846.83 48.23 L851.06 46.6 L855.3 44.97 L859.55 43.34 L863.79 41.72 L868.04 40.09 L872.29 38.46 L876.55 36.83 L880.8 35.2 L885.06 33.57 L889.32 31.94 L893.58 30.31 L897.84 28.68 L902.1 27.05 M902.1 613.55 L897.41 611.92 L892.73 610.29 L888.04 608.66 L883.36 607.03 L878.67 605.4 L873.99 603.77 L869.31 602.14 L864.64 600.51 L859.96 598.88 L855.29 597.26 L850.62 595.63 L845.96 594 L841.3 592.37 L836.65 590.74 L832 589.11 L827.35 587.48 L822.72 585.85 L818.08 584.22 L813.46 582.59 L808.84 580.96 L804.23 579.33 L799.62 577.71 L795.02 576.08 L790.44 574.45 L785.86 572.82 L781.28 571.19 L776.72 569.56 L772.17 567.93 L767.63 566.3 L763.09 564.67 L758.57 563.04 L754.06 561.41 L749.56 559.79 L745.07 558.16 L740.6 556.53 L736.13 554.9 L731.68 553.27 L727.25 551.64 L722.82 550.01 L718.41 548.38 L714.01 546.75 L709.63 545.12 L705.26 543.49 L700.91 541.86 L696.57 540.24 L692.25 538.61 L687.94 536.98 L683.65 535.35 L679.38 533.72 L675.12 532.09 L670.88 530.46 L666.66 528.83 L662.46 527.2 L658.27 525.57 L654.11 523.94 L649.96 522.31 L645.83 520.69 L641.72 519.06 L637.63 517.43 L633.56 515.8 L629.51 514.17 L625.49 512.54 L621.48 510.91 L617.49 509.28 L613.53 507.65 L609.59 506.02 L605.67 504.39 L601.77 502.76 L597.9 501.14 L594.05 499.51 L590.22 497.88 L586.42 496.25 L582.64 494.62 L578.88 492.99 L575.15 491.36 L571.44 489.73 L567.76 488.1 L564.11 486.47 L560.48 484.84 L556.87 483.22 L553.3 481.59 L549.75 479.96 L546.22 478.33 L542.73 476.7 L539.26 475.07 L535.82 473.44 L532.4 471.81 L529.02 470.18 L525.66 468.55 L522.33 466.92 L519.03 465.29 L515.76 463.67 L512.52 462.04 L509.31 460.41 L506.13 458.78 L502.98 457.15 L499.85 455.52 L496.76 453.89 L493.7 452.26 L490.68 450.63 L487.68 449 L484.71 447.37 L481.78 445.74 L478.88 444.12 L476.01 442.49 L473.17 440.86 L470.37 439.23 L467.6 437.6 L464.86 435.97 L462.15 434.34 L459.48 432.71 L456.84 431.08 L454.24 429.45 L451.67 427.82 L449.14 426.19 L446.63 424.57 L444.17 422.94 L441.74 421.31 L439.34 419.68 L436.98 418.05 L434.65 416.42 L432.36 414.79 L430.11 413.16 L427.89 411.53 L425.71 409.9 L423.56 408.27 L421.45 406.64 L419.38 405.02 L417.34 403.39 L415.34 401.76 L413.38 400.13 L411.46 398.5 L409.57 396.87 L407.72 395.24 L405.91 393.61 L404.13 391.98 L402.4 390.35 L400.7 388.72 L399.04 387.1 L397.41 385.47 L395.83 383.84 L394.29 382.21 L392.78 380.58 L391.31 378.95 L389.88 377.32 L388.49 375.69 L387.14 374.06 L385.83 372.43 L384.56 370.8 L383.33 369.17 L382.13 367.55 L380.98 365.92 L379.86 364.29 L378.79 362.66 L377.76 361.03 L376.76 359.4 L375.81 357.77 L374.89 356.14 L374.02 354.51 L373.18 352.88 L372.39 351.25 L371.64 349.62 L370.92 348 L370.25 346.37 L369.62 344.74 L369.03 343.11 L368.48 341.48 L367.97 339.85 L367.5 338.22 L367.07 336.59 L366.68 334.96 L366.33 333.33 L366.03 331.7 L365.76 330.07 L365.54 328.45 L365.35 326.82 L365.21 325.19 L365.11 323.56 L365.05 321.93 L365.03 320.3 L365.05 318.67 L365.11 317.04 L365.21 315.41 L365.35 313.78 L365.54 312.15 L365.76 310.53 L366.03 308.9 L366.33 307.27 L366.68 305.64 L367.07 304.01 L367.5 302.38 L367.97 300.75 L368.48 299.12 L369.03 297.49 L369.62 295.86 L370.25 294.23 L370.92 292.6 L371.64 290.98 L372.39 289.35 L373.18 287.72 L374.02 286.09 L374.89 284.46 L375.81 282.83 L376.76 281.2 L377.76 279.57 L378.79 277.94 L379.86 276.31 L380.98 274.68 L382.13 273.05 L383.33 271.43 L384.56 269.8 L385.83 268.17 L387.14 266.54 L388.49 264.91 L389.88 263.28 L391.31 261.65 L392.78 260.02 L394.29 258.39 L395.83 256.76 L397.41 255.13 L399.04 253.5 L400.7 251.88 L402.4 250.25 L404.13 248.62 L405.91 246.99 L407.72 245.36 L409.57 243.73 L411.46 242.1 L413.38 240.47 L415.34 238.84 L417.34 237.21 L419.38 235.58 L421.45 233.96 L423.56 232.33 L425.71 230.7 L427.89 229.07 L430.11 227.44 L432.36 225.81 L434.65 224.18 L436.98 222.55 L439.34 220.92 L441.74 219.29 L444.17 217.66 L446.63 216.03 L449.14 214.41 L451.67 212.78 L454.24 211.15 L456.84 209.52 L459.48 207.89 L462.15 206.26 L464.86 204.63 L467.6 203 L470.37 201.37 L473.17 199.74 L476.01 198.11 L478.88 196.48 L481.78 194.86 L484.71 193.23 L487.68 191.6 L490.68 189.97 L493.7 188.34 L496.76 186.71 L499.85 185.08 L502.98 183.45 L506.13 181.82 L509.31 180.19 L512.52 178.56 L515.76 176.93 L519.03 175.31 L522.33 173.68 L525.66 172.05 L529.02 170.42 L532.4 168.79 L535.82 167.16 L539.26 165.53 L542.73 163.9 L546.22 162.27 L549.75 160.64 L553.3 159.01 L556.87 157.38 L560.48 155.76 L564.11 154.13 L567.76 152.5 L571.44 150.87 L575.15 149.24 L578.88 147.61 L582.64 145.98 L586.42 144.35 L590.22 142.72 L594.05 141.09 L597.9 139.46 L601.77 137.84 L605.67 136.21 L609.59 134.58 L613.53 132.95 L617.49 131.32 L621.48 129.69 L625.49 128.06 L629.51 126.43 L633.56 124.8 L637.63 123.17 L641.72 121.54 L645.83 119.91 L649.96 118.29 L654.11 116.66 L658.27 115.03 L662.46 113.4 L666.66 111.77 L670.88 110.14 L675.12 108.51 L679.38 106.88 L683.65 105.25 L687.94 103.62 L692.25 101.99 L696.57 100.36 L700.91 98.74 L705.26 97.11 L709.63 95.48 L714.01 93.85 L718.41 92.22 L722.82 90.59 L727.25 88.96 L731.68 87.33 L736.13 85.7 L740.6 84.07 L745.07 82.44 L749.56 80.81 L754.06 79.19 L758.57 77.56 L763.09 75.93 L767.63 74.3 L772.17 72.67 L776.72 71.04 L781.28 69.41 L785.86 67.78 L790.44 66.15 L795.02 64.52 L799.62 62.89 L804.23 61.27 L808.84 59.64 L813.46 58.01 L818.08 56.38 L822.72 54.75 L827.35 53.12 L832 51.49 L836.65 49.86 L841.3 48.23 L845.96 46.6 L850.62 44.97 L855.29 43.34 L859.96 41.72 L864.64 40.09 L869.31 38.46 L873.99 36.83 L878.67 35.2 L883.36 33.57 L888.04 31.94 L892.73 30.31 L897.41 28.68 L902.1 27.05 M902.1 613.55 L896.99 611.92 L891.87 610.29 L886.76 608.66 L881.65 607.03 L876.54 605.4 L871.44 603.77 L866.33 602.14 L861.23 600.51 L856.13 598.88 L851.04 597.26 L845.94 595.63 L840.86 594 L835.77 592.37 L830.7 590.74 L825.62 589.11 L820.56 587.48 L815.5 585.85 L810.45 584.22 L805.4 582.59 L800.36 580.96 L795.33 579.33 L790.31 577.71 L785.29 576.08 L780.28 574.45 L775.29 572.82 L770.3 571.19 L765.32 569.56 L760.36 567.93 L755.4 566.3 L750.46 564.67 L745.53 563.04 L740.6 561.41 L735.7 559.79 L730.8 558.16 L725.92 556.53 L721.05 554.9 L716.19 553.27 L711.35 551.64 L706.52 550.01 L701.71 548.38 L696.91 546.75 L692.13 545.12 L687.37 543.49 L682.62 541.86 L677.89 540.24 L673.17 538.61 L668.47 536.98 L663.79 535.35 L659.13 533.72 L654.49 532.09 L649.86 530.46 L645.26 528.83 L640.67 527.2 L636.11 525.57 L631.56 523.94 L627.04 522.31 L622.53 520.69 L618.05 519.06 L613.59 517.43 L609.15 515.8 L604.73 514.17 L600.34 512.54 L595.97 510.91 L591.62 509.28 L587.3 507.65 L583 506.02 L578.72 504.39 L574.47 502.76 L570.24 501.14 L566.04 499.51 L561.87 497.88 L557.72 496.25 L553.59 494.62 L549.5 492.99 L545.43 491.36 L541.38 489.73 L537.37 488.1 L533.38 486.47 L529.42 484.84 L525.49 483.22 L521.59 481.59 L517.72 479.96 L513.87 478.33 L510.06 476.7 L506.27 475.07 L502.52 473.44 L498.79 471.81 L495.1 470.18 L491.44 468.55 L487.81 466.92 L484.21 465.29 L480.64 463.67 L477.1 462.04 L473.6 460.41 L470.13 458.78 L466.69 457.15 L463.29 455.52 L459.92 453.89 L456.58 452.26 L453.27 450.63 L450.01 449 L446.77 447.37 L443.57 445.74 L440.4 444.12 L437.27 442.49 L434.18 440.86 L431.12 439.23 L428.1 437.6 L425.11 435.97 L422.16 434.34 L419.24 432.71 L416.37 431.08 L413.53 429.45 L410.72 427.82 L407.96 426.19 L405.23 424.57 L402.54 422.94 L399.89 421.31 L397.27 419.68 L394.7 418.05 L392.16 416.42 L389.66 414.79 L387.2 413.16 L384.78 411.53 L382.4 409.9 L380.06 408.27 L377.76 406.64 L375.5 405.02 L373.28 403.39 L371.09 401.76 L368.95 400.13 L366.85 398.5 L364.79 396.87 L362.78 395.24 L360.8 393.61 L358.86 391.98 L356.97 390.35 L355.12 388.72 L353.3 387.1 L351.53 385.47 L349.81 383.84 L348.12 382.21 L346.48 380.58 L344.88 378.95 L343.32 377.32 L341.8 375.69 L340.33 374.06 L338.9 372.43 L337.51 370.8 L336.16 369.17 L334.86 367.55 L333.6 365.92 L332.39 364.29 L331.22 362.66 L330.09 361.03 L329 359.4 L327.96 357.77 L326.96 356.14 L326.01 354.51 L325.1 352.88 L324.24 351.25 L323.41 349.62 L322.64 348 L321.9 346.37 L321.21 344.74 L320.57 343.11 L319.97 341.48 L319.41 339.85 L318.9 338.22 L318.43 336.59 L318.01 334.96 L317.63 333.33 L317.29 331.7 L317 330.07 L316.76 328.45 L316.56 326.82 L316.4 325.19 L316.29 323.56 L316.22 321.93 L316.2 320.3 L316.22 318.67 L316.29 317.04 L316.4 315.41 L316.56 313.78 L316.76 312.15 L317 310.53 L317.29 308.9 L317.63 307.27 L318.01 305.64 L318.43 304.01 L318.9 302.38 L319.41 300.75 L319.97 299.12 L320.57 297.49 L321.21 295.86 L321.9 294.23 L322.64 292.6 L323.41 290.98 L324.24 289.35 L325.1 287.72 L326.01 286.09 L326.96 284.46 L327.96 282.83 L329 281.2 L330.09 279.57 L331.22 277.94 L332.39 276.31 L333.6 274.68 L334.86 273.05 L336.16 271.43 L337.51 269.8 L338.9 268.17 L340.33 266.54 L341.8 264.91 L343.32 263.28 L344.88 261.65 L346.48 260.02 L348.12 258.39 L349.81 256.76 L351.53 255.13 L353.3 253.5 L355.12 251.88 L356.97 250.25 L358.86 248.62 L360.8 246.99 L362.78 245.36 L364.79 243.73 L366.85 242.1 L368.95 240.47 L371.09 238.84 L373.28 237.21 L375.5 235.58 L377.76 233.96 L380.06 232.33 L382.4 230.7 L384.78 229.07 L387.2 227.44 L389.66 225.81 L392.16 224.18 L394.7 222.55 L397.27 220.92 L399.89 219.29 L402.54 217.66 L405.23 216.03 L407.96 214.41 L410.72 212.78 L413.53 211.15 L416.37 209.52 L419.24 207.89 L422.16 206.26 L425.11 204.63 L428.1 203 L431.12 201.37 L434.18 199.74 L437.27 198.11 L440.4 196.48 L443.57 194.86 L446.77 193.23 L450.01 191.6 L453.27 189.97 L456.58 188.34 L459.92 186.71 L463.29 185.08 L466.69 183.45 L470.13 181.82 L473.6 180.19 L477.1 178.56 L480.64 176.93 L484.21 175.31 L487.81 173.68 L491.44 172.05 L495.1 170.42 L498.79 168.79 L502.52 167.16 L506.27 165.53 L510.06 163.9 L513.87 162.27 L517.72 160.64 L521.59 159.01 L525.49 157.38 L529.42 155.76 L533.38 154.13 L537.37 152.5 L541.38 150.87 L545.43 149.24 L549.5 147.61 L553.59 145.98 L557.72 144.35 L561.87 142.72 L566.04 141.09 L570.24 139.46 L574.47 137.84 L578.72 136.21 L583 134.58 L587.3 132.95 L591.62 131.32 L595.97 129.69 L600.34 128.06 L604.73 126.43 L609.15 124.8 L613.59 123.17 L618.05 121.54 L622.53 119.91 L627.04 118.29 L631.56 116.66 L636.11 115.03 L640.67 113.4 L645.26 111.77 L649.86 110.14 L654.49 108.51 L659.13 106.88 L663.79 105.25 L668.47 103.62 L673.17 101.99 L677.89 100.36 L682.62 98.74 L687.37 97.11 L692.13 95.48 L696.91 93.85 L701.71 92.22 L706.52 90.59 L711.35 88.96 L716.19 87.33 L721.05 85.7 L725.92 84.07 L730.8 82.44 L735.7 80.81 L740.6 79.19 L745.53 77.56 L750.46 75.93 L755.4 74.3 L760.36 72.67 L765.32 71.04 L770.3 69.41 L775.29 67.78 L780.28 66.15 L785.29 64.52 L790.31 62.89 L795.33 61.27 L800.36 59.64 L805.4 58.01 L810.45 56.38 L815.5 54.75 L820.56 53.12 L825.62 51.49 L830.7 49.86 L835.77 48.23 L840.86 46.6 L845.94 44.97 L851.04 43.34 L856.13 41.72 L861.23 40.09 L866.33 38.46 L871.44 36.83 L876.54 35.2 L881.65 33.57 L886.76 31.94 L891.87 30.31 L896.99 28.68 L902.1 27.05 M1053.74 565L750.46 565 M1195.05 516L609.15 516 M1316.39 467L487.81 467 M1409.5 418L394.7 418 M1468.04 369L336.16 369 M1488 320L316.2 320 M1468.04 271L336.16 271 M1409.5 223L394.7 223 M1316.39 174L487.81 174 M1195.05 125L609.15 125 M1053.74 76L750.46 76" fill="none" stroke="#6c6c6c" stroke-width="2.1" stroke-dasharray="2.1 3.41"/>
<path d="M443.3 194.4C444.97 199.6 449.78 214.85 453.3 225.6C456.82 236.35 460.32 248.9 464.4 258.9C468.48 268.9 472.23 277.45 477.8 285.6C483.37 293.75 490.4 300.03 497.8 307.8C505.2 315.57 514.43 325.17 522.2 332.2C529.97 339.23 537.73 345.18 544.4 350C551.07 354.82 559.23 359.25 562.2 361.1 M326.7 350C333.42 350.92 353.28 353.83 367 355.5C380.72 357.17 399.43 359.07 409 360C418.57 360.93 409.23 360.77 424.4 361.1C439.57 361.43 477.03 362 500 362C522.97 362 543.68 362.73 562.2 361.1C580.72 359.47 597.63 354.63 611.1 352.2C624.57 349.77 627.6 349.3 643 346.5C658.4 343.7 690.82 337.9 703.5 335.4C716.18 332.9 716.5 332.15 719.1 331.5 M643.6 343.5C644.12 341.13 645.63 333.33 646.7 329.3C647.77 325.27 648.5 323.3 650 319.3C651.5 315.3 653.65 309.85 655.7 305.3C657.75 300.75 658.42 298.8 662.3 292C666.18 285.2 672.52 273.53 679 264.5C685.48 255.47 695.73 244.33 701.2 237.8C706.67 231.27 704.6 232.33 711.8 225.3C719 218.27 731.55 207.6 744.4 195.6C757.25 183.6 774.08 165.17 788.9 153.3C803.72 141.43 818.48 133.47 833.3 124.4C848.12 115.33 866.68 104.63 877.8 98.9C888.92 93.17 893.7 91.85 900 90C906.3 88.15 910.05 87.8 915.6 87.8C921.15 87.8 924.78 87.78 933.3 90C941.82 92.22 955.58 96.1 966.7 101.1C977.82 106.1 983.33 111.3 1000 120C1016.67 128.7 1050.03 143.3 1066.7 153.3C1083.37 163.3 1090.83 173.33 1100 180C1109.17 186.67 1118.08 191.08 1121.7 193.3 M1182.5 215C1185.97 211.12 1195.93 197.12 1203.3 191.7C1210.67 186.28 1217.53 184.45 1226.7 182.5C1235.87 180.55 1247.47 180.13 1258.3 180C1269.13 179.87 1280.58 180.58 1291.7 181.7C1302.82 182.82 1314.45 184.77 1325 186.7C1335.55 188.63 1350 192.2 1355 193.3" fill="none" stroke="#505050" stroke-width="1.25" stroke-dasharray="1.39 2.29"/>
<text x="300.72" y="330" fill="#8c8c8c" font-size="10.4" textLength="25.96" lengthAdjust="spacingAndGlyphs">+180</text><text x="329.28" y="326.6" fill="#8c8c8c" font-size="7">&#176;</text>
<text x="398.37" y="330" fill="#8c8c8c" font-size="10.4" textLength="25.96" lengthAdjust="spacingAndGlyphs">+150</text><text x="426.93" y="326.6" fill="#8c8c8c" font-size="7">&#176;</text>
<text x="496.02" y="330" fill="#8c8c8c" font-size="10.4" textLength="25.96" lengthAdjust="spacingAndGlyphs">+120</text><text x="524.58" y="326.6" fill="#8c8c8c" font-size="7">&#176;</text>
<text x="596.98" y="330" fill="#8c8c8c" font-size="10.4" textLength="19.34" lengthAdjust="spacingAndGlyphs">+90</text><text x="618.92" y="326.6" fill="#8c8c8c" font-size="7">&#176;</text>
<text x="694.63" y="330" fill="#8c8c8c" font-size="10.4" textLength="19.34" lengthAdjust="spacingAndGlyphs">+60</text><text x="716.57" y="326.6" fill="#8c8c8c" font-size="7">&#176;</text>
<text x="792.28" y="330" fill="#8c8c8c" font-size="10.4" textLength="19.34" lengthAdjust="spacingAndGlyphs">+30</text><text x="814.22" y="326.6" fill="#8c8c8c" font-size="7">&#176;</text>
<text x="893.24" y="330" fill="#8c8c8c" font-size="10.4" textLength="12.73" lengthAdjust="spacingAndGlyphs">+0</text><text x="908.56" y="326.6" fill="#8c8c8c" font-size="7">&#176;</text>
<text x="984.27" y="330" fill="#8c8c8c" font-size="10.4" textLength="25.96" lengthAdjust="spacingAndGlyphs">+330</text><text x="1012.83" y="326.6" fill="#8c8c8c" font-size="7">&#176;</text>
<text x="1081.92" y="330" fill="#8c8c8c" font-size="10.4" textLength="25.96" lengthAdjust="spacingAndGlyphs">+300</text><text x="1110.48" y="326.6" fill="#8c8c8c" font-size="7">&#176;</text>
<text x="1179.57" y="330" fill="#8c8c8c" font-size="10.4" textLength="25.96" lengthAdjust="spacingAndGlyphs">+270</text><text x="1208.13" y="326.6" fill="#8c8c8c" font-size="7">&#176;</text>
<text x="1277.22" y="330" fill="#8c8c8c" font-size="10.4" textLength="25.96" lengthAdjust="spacingAndGlyphs">+240</text><text x="1305.78" y="326.6" fill="#8c8c8c" font-size="7">&#176;</text>
<text x="1374.87" y="330" fill="#8c8c8c" font-size="10.4" textLength="25.96" lengthAdjust="spacingAndGlyphs">+210</text><text x="1403.43" y="326.6" fill="#8c8c8c" font-size="7">&#176;</text>
<text x="1472.52" y="330" fill="#8c8c8c" font-size="10.4" textLength="25.96" lengthAdjust="spacingAndGlyphs">+180</text><text x="1501.08" y="326.6" fill="#8c8c8c" font-size="7">&#176;</text>
<text x="890.43" y="24.75" fill="#8c8c8c" font-size="10.4" textLength="19.34" lengthAdjust="spacingAndGlyphs">+90</text><text x="912.37" y="21.35" fill="#8c8c8c" font-size="7">&#176;</text>
<text x="890.43" y="123.2" fill="#8c8c8c" font-size="10.4" textLength="19.34" lengthAdjust="spacingAndGlyphs">+60</text><text x="912.37" y="119.8" fill="#8c8c8c" font-size="7">&#176;</text>
<text x="890.43" y="221.15" fill="#8c8c8c" font-size="10.4" textLength="19.34" lengthAdjust="spacingAndGlyphs">+30</text><text x="912.37" y="217.75" fill="#8c8c8c" font-size="7">&#176;</text>
<text x="891.48" y="428.75" fill="#8c8c8c" font-size="10.4" textLength="17.24" lengthAdjust="spacingAndGlyphs">&#8722;30</text><text x="911.32" y="425.35" fill="#8c8c8c" font-size="7">&#176;</text>
<text x="891.48" y="526.5" fill="#8c8c8c" font-size="10.4" textLength="17.24" lengthAdjust="spacingAndGlyphs">&#8722;60</text><text x="911.32" y="523.1" fill="#8c8c8c" font-size="7">&#176;</text>
<text x="891.48" y="624.85" fill="#8c8c8c" font-size="10.4" textLength="17.24" lengthAdjust="spacingAndGlyphs">&#8722;90</text><text x="911.32" y="621.45" fill="#8c8c8c" font-size="7">&#176;</text>
<path d="M702.2 241.7C698.5 245.68 687.3 256.33 680 265.6C672.7 274.87 663.82 289.17 658.4 297.3C652.98 305.43 650.6 308.43 647.5 314.4C644.4 320.37 642 326.62 639.8 333.1C637.6 339.58 635.73 346.82 634.3 353.3C632.87 359.78 631.77 367.47 631.2 372C630.63 376.53 630.95 379.08 630.9 380.5" fill="none" stroke="#d020f0" stroke-width="1.5" stroke-dasharray="1.39 2.29"/>
<path d="M724.4 273.3C720.53 275.37 719.72 274.18 701.2 285.7C682.68 297.22 627.95 332.95 613.3 342.4" fill="none" stroke="#ff2200" stroke-width="1.5" stroke-dasharray="1.39 2.29"/>
<path d="M728.7 267.4C725.02 269.28 713.13 272.42 706.6 278.7C700.07 284.98 693.9 298.1 689.5 305.1C685.1 312.1 683.3 314.73 680.2 320.7C677.1 326.67 673.75 334.17 670.9 340.9C668.05 347.63 665.05 354.1 663.1 361.1C661.15 368.1 659.98 379.02 659.2 382.9C658.42 386.78 658.53 384.15 658.4 384.4" fill="none" stroke="#ff2200" stroke-width="1.5" stroke-dasharray="1.39 2.29"/>
<path d="M728.7 267.4C737.08 269.5 753.48 271.9 779 280C804.52 288.1 853.12 305.78 881.8 316C910.48 326.22 935.4 335.75 951.1 341.3C966.8 346.85 971.85 347.97 976 349.3" fill="none" stroke="#ff2200" stroke-width="1.5" stroke-dasharray="1.39 2.29"/>
<line x1="630.9" y1="380.5" x2="630.9" y2="385.2" stroke="#d020f0" stroke-width="1.5"/>
<line x1="618" y1="339" x2="611.8" y2="343.2" stroke="#ff2200" stroke-width="1.5"/>
<line x1="658.4" y1="384.4" x2="657.7" y2="395.3" stroke="#ff2200" stroke-width="1.5"/>
<line x1="976" y1="349.3" x2="992.9" y2="355.1" stroke="#ff2200" stroke-width="1.5"/>
<line x1="703.5" y1="335.4" x2="719.1" y2="331.5" stroke="#9a9a9a" stroke-width="1.5"/>
<line x1="643.9" y1="343" x2="642.8" y2="350.2" stroke="#9a9a9a" stroke-width="1.5"/>
<ellipse cx="720.8" cy="261.85" rx="29.4" ry="20.4" transform="rotate(-42.9 720.8 261.85)" fill="none" stroke="#ff2200" stroke-width="2.2"/>
<ellipse cx="728.5" cy="241.7" rx="30.2" ry="19.4" transform="rotate(-39.3 728.5 241.7)" fill="none" stroke="#d020f0" stroke-width="2.2"/>
<path d="M711.7 231.7h6M714.7 228.7v6" stroke="#ff2200" stroke-width="1.3"/>
<path d="M719.2 262.2h6M722.2 259.2v6" stroke="#ff2200" stroke-width="1.3"/>
<path d="M725.7 267.4h6M728.7 264.4v6" stroke="#ff2200" stroke-width="1.3"/>
<path d="M721.4 273.3h6M724.4 270.3v6" stroke="#ff2200" stroke-width="1.3"/>
<text x="728.5" y="244.6" fill="#fff" font-size="10.5" text-anchor="middle">NTA</text>
<text x="720.8" y="264.7" fill="#fff" font-size="10.5" text-anchor="middle">STA</text>
<text class="mono" x="315.2" y="29.8" fill="#fff" font-size="13.9" style="font-family:'Liberation Mono',monospace">CZ000V</text>
<text class="mono" x="315.2" y="42.8" fill="#fff" font-size="13.9" style="font-family:'Liberation Mono',monospace">Beg: 20251111 19:20:52 (sol = 229.30&#176;)</text>
<text class="mono" x="315.2" y="55.8" fill="#fff" font-size="13.9" style="font-family:'Liberation Mono',monospace">End: 20251112 03:40:41 (sol = 229.65&#176;)</text>
<text class="mono" x="315.2" y="68.8" fill="#fff" font-size="13.9" style="font-family:'Liberation Mono',monospace">--------------------------------------</text>
<text class="mono" x="315.2" y="81.8" fill="#fff" font-size="13.9" style="font-family:'Liberation Mono',monospace">...: 3</text>
<text class="mono" x="315.2" y="94.8" fill="#fff" font-size="13.9" style="font-family:'Liberation Mono',monospace">STA: 3</text>
<text class="mono" x="315.2" y="107.8" fill="#fff" font-size="13.9" style="font-family:'Liberation Mono',monospace">NTA: 1</text>
<line x1="73.8" y1="641.5" x2="73.8" y2="842.2" stroke="#6a6a6a" stroke-width="2.3" stroke-dasharray="2.3 3.21"/>
<line x1="217.8" y1="641.5" x2="217.8" y2="842.2" stroke="#6a6a6a" stroke-width="2.3" stroke-dasharray="2.3 3.21"/>
<line x1="365" y1="641.5" x2="365" y2="842.2" stroke="#6a6a6a" stroke-width="2.3" stroke-dasharray="2.3 3.21"/>
<line x1="505" y1="641.5" x2="505" y2="842.2" stroke="#6a6a6a" stroke-width="2.3" stroke-dasharray="2.3 3.21"/>
<line x1="650" y1="641.5" x2="650" y2="842.2" stroke="#6a6a6a" stroke-width="2.3" stroke-dasharray="2.3 3.21"/>
<line x1="797" y1="641.5" x2="797" y2="842.2" stroke="#6a6a6a" stroke-width="2.3" stroke-dasharray="2.3 3.21"/>
<line x1="940" y1="641.5" x2="940" y2="842.2" stroke="#6a6a6a" stroke-width="2.3" stroke-dasharray="2.3 3.21"/>
<line x1="1091" y1="641.5" x2="1091" y2="842.2" stroke="#6a6a6a" stroke-width="2.3" stroke-dasharray="2.3 3.21"/>
<line x1="1238.8" y1="641.5" x2="1238.8" y2="842.2" stroke="#6a6a6a" stroke-width="2.3" stroke-dasharray="2.3 3.21"/>
<line x1="1394" y1="641.5" x2="1394" y2="842.2" stroke="#6a6a6a" stroke-width="2.3" stroke-dasharray="2.3 3.21"/>
<line x1="1548" y1="641.5" x2="1548" y2="842.2" stroke="#6a6a6a" stroke-width="2.3" stroke-dasharray="2.3 3.21"/>
<line x1="1687" y1="641.5" x2="1687" y2="842.2" stroke="#6a6a6a" stroke-width="2.3" stroke-dasharray="2.3 3.21"/>
<text x="0" y="0" fill="#5a5a5a" font-size="29" text-anchor="end" textLength="54.3" lengthAdjust="spacingAndGlyphs" transform="translate(148.1 642.5) rotate(-90)">APR</text>
<text x="0" y="0" fill="#5a5a5a" font-size="29" text-anchor="end" textLength="57.5" lengthAdjust="spacingAndGlyphs" transform="translate(293 644.5) rotate(-90)">MAY</text>
<text x="0" y="0" fill="#5a5a5a" font-size="29" text-anchor="end" textLength="49.5" lengthAdjust="spacingAndGlyphs" transform="translate(434.8 641) rotate(-90)">JUN</text>
<text x="0" y="0" fill="#5a5a5a" font-size="29" text-anchor="end" textLength="44.5" lengthAdjust="spacingAndGlyphs" transform="translate(574.8 642) rotate(-90)">JUL</text>
<text x="0" y="0" fill="#5a5a5a" font-size="29" text-anchor="end" textLength="60" lengthAdjust="spacingAndGlyphs" transform="translate(722 641) rotate(-90)">AUG</text>
<text x="0" y="0" fill="#5a5a5a" font-size="29" text-anchor="end" textLength="51.5" lengthAdjust="spacingAndGlyphs" transform="translate(871 642.5) rotate(-90)">SEP</text>
<text x="0" y="0" fill="#5a5a5a" font-size="29" text-anchor="end" textLength="56.5" lengthAdjust="spacingAndGlyphs" transform="translate(1014.8 643.5) rotate(-90)">OCT</text>
<text x="0" y="0" fill="#5a5a5a" font-size="29" text-anchor="end" textLength="58.5" lengthAdjust="spacingAndGlyphs" transform="translate(1167.7 645.3) rotate(-90)">NOV</text>
<text x="0" y="0" fill="#5a5a5a" font-size="29" text-anchor="end" textLength="55.5" lengthAdjust="spacingAndGlyphs" transform="translate(1317 644.3) rotate(-90)">DEC</text>
<text x="0" y="0" fill="#5a5a5a" font-size="29" text-anchor="end" textLength="47.5" lengthAdjust="spacingAndGlyphs" transform="translate(1467.8 640.8) rotate(-90)">JAN</text>
<text x="0" y="0" fill="#5a5a5a" font-size="29" text-anchor="end" textLength="51.1" lengthAdjust="spacingAndGlyphs" transform="translate(1626.6 645.2) rotate(-90)">FEB</text>
<text x="0" y="0" fill="#5a5a5a" font-size="29" text-anchor="end" textLength="62.3" lengthAdjust="spacingAndGlyphs" transform="translate(1764.2 644.1) rotate(-90)">MAR</text>
<line x1="1144.3" y1="641.5" x2="1144.3" y2="842.2" stroke="#ff0000" stroke-width="1.35" stroke-dasharray="4.3 1.8"/>
<line x1="1146.3" y1="641.5" x2="1146.3" y2="842.2" stroke="#ff0000" stroke-width="1.35" stroke-dasharray="4.3 1.8"/>
<rect x="106" y="831.75" width="22.8" height="4.5" fill="#ee82ee"/>
<rect x="165" y="831.75" width="180" height="4.5" fill="#ee82ee"/>
<rect x="366" y="831.75" width="259" height="4.5" fill="#ee82ee"/>
<rect x="635" y="831.75" width="151" height="4.5" fill="#ee82ee"/>
<rect x="807" y="831.75" width="92" height="4.5" fill="#ee82ee"/>
<rect x="920" y="831.75" width="53" height="4.5" fill="#ee82ee"/>
<rect x="984" y="831.75" width="82" height="4.5" fill="#ee82ee"/>
<rect x="1082" y="831.75" width="121" height="4.5" fill="#ee82ee"/>
<rect x="1244" y="831.75" width="82" height="4.5" fill="#ee82ee"/>
<rect x="1337" y="831.75" width="18" height="4.5" fill="#ee82ee"/>
<rect x="1381" y="831.75" width="63" height="4.5" fill="#ee82ee"/>
<rect x="1459" y="831.75" width="53" height="4.5" fill="#ee82ee"/>
<rect x="1523" y="831.75" width="24" height="4.5" fill="#ee82ee"/>
<rect x="1724" y="831.75" width="24" height="4.5" fill="#ee82ee"/>
<rect x="1758" y="831.75" width="24" height="4.5" fill="#ee82ee"/>
<rect x="165" y="815.75" width="23" height="4.5" fill="#e010f0"/>
<rect x="223" y="815.75" width="63" height="4.5" fill="#e010f0"/>
<rect x="312" y="815.75" width="28" height="4.5" fill="#e010f0"/>
<rect x="366" y="815.75" width="126" height="4.5" fill="#e010f0"/>
<rect x="508" y="815.75" width="146" height="4.5" fill="#e010f0"/>
<rect x="704" y="815.75" width="33" height="4.5" fill="#e010f0"/>
<rect x="773" y="815.75" width="72" height="4.5" fill="#e010f0"/>
<rect x="871" y="815.75" width="117" height="4.5" fill="#e010f0"/>
<rect x="1003" y="815.75" width="14" height="4.5" fill="#e010f0"/>
<rect x="1062" y="815.75" width="151" height="4.5" fill="#e010f0"/>
<rect x="1244" y="815.75" width="23" height="4.5" fill="#e010f0"/>
<rect x="1293" y="815.75" width="23" height="4.5" fill="#e010f0"/>
<rect x="1342" y="815.75" width="23" height="4.5" fill="#e010f0"/>
<rect x="1386" y="815.75" width="43" height="4.5" fill="#e010f0"/>
<rect x="1459" y="815.75" width="24" height="4.5" fill="#e010f0"/>
<rect x="1548" y="815.75" width="23" height="4.5" fill="#e010f0"/>
<rect x="165" y="799.75" width="23" height="4.5" fill="#ff2200"/>
<rect x="258" y="799.75" width="229" height="4.5" fill="#ff2200"/>
<rect x="508" y="799.75" width="107" height="4.5" fill="#ff2200"/>
<rect x="626" y="799.75" width="92" height="4.5" fill="#ff2200"/>
<rect x="729" y="799.75" width="97" height="4.5" fill="#ff2200"/>
<rect x="949" y="799.75" width="200" height="4.5" fill="#ff2200"/>
<rect x="1160" y="799.75" width="88" height="4.5" fill="#ff2200"/>
<rect x="1258" y="799.75" width="186" height="4.5" fill="#ff2200"/>
<rect x="1459" y="799.75" width="24" height="4.5" fill="#ff2200"/>
<rect x="1552" y="799.75" width="24" height="4.5" fill="#ff2200"/>
<rect x="193.8" y="782.75" width="24.2" height="4.5" fill="#ffaa11"/>
<rect x="321" y="782.75" width="186" height="4.5" fill="#ffaa11"/>
<rect x="518" y="782.75" width="23" height="4.5" fill="#ffaa11"/>
<rect x="557" y="782.75" width="126" height="4.5" fill="#ffaa11"/>
<rect x="807" y="782.75" width="24" height="4.5" fill="#ffaa11"/>
<rect x="954" y="782.75" width="19" height="4.5" fill="#ffaa11"/>
<rect x="988" y="782.75" width="137" height="4.5" fill="#ffaa11"/>
<rect x="1155" y="782.75" width="63" height="4.5" fill="#ffaa11"/>
<rect x="1244" y="782.75" width="23" height="4.5" fill="#ffaa11"/>
<rect x="1317" y="782.75" width="24" height="4.5" fill="#ffaa11"/>
<rect x="1396" y="782.75" width="23" height="4.5" fill="#ffaa11"/>
<rect x="1464" y="782.75" width="186" height="4.5" fill="#ffaa11"/>
<rect x="341" y="766.55" width="29" height="4.5" fill="#ffee00"/>
<rect x="410" y="766.55" width="37.8" height="4.5" fill="#ffee00"/>
<rect x="469" y="766.55" width="23" height="4.5" fill="#ffee00"/>
<rect x="527" y="766.55" width="19" height="4.5" fill="#ffee00"/>
<rect x="562" y="766.55" width="28" height="4.5" fill="#ffee00"/>
<rect x="616" y="766.55" width="33" height="4.5" fill="#ffee00"/>
<rect x="959" y="766.55" width="29" height="4.5" fill="#ffee00"/>
<rect x="1062" y="766.55" width="24" height="4.5" fill="#ffee00"/>
<rect x="1101" y="766.55" width="24" height="4.5" fill="#ffee00"/>
<rect x="1160" y="766.55" width="34" height="4.5" fill="#ffee00"/>
<rect x="1248" y="766.55" width="24" height="4.5" fill="#ffee00"/>
<rect x="1425" y="766.55" width="87" height="4.5" fill="#ffee00"/>
<rect x="420" y="749.55" width="23" height="4.5" fill="#a8ff22"/>
<rect x="532" y="749.55" width="24" height="4.5" fill="#a8ff22"/>
<rect x="567" y="749.55" width="23" height="4.5" fill="#a8ff22"/>
<rect x="621" y="749.55" width="121" height="4.5" fill="#a8ff22"/>
<rect x="969" y="749.55" width="166" height="4.5" fill="#a8ff22"/>
<rect x="1185" y="749.55" width="161" height="4.5" fill="#a8ff22"/>
<rect x="1469" y="749.55" width="24" height="4.5" fill="#a8ff22"/>
<rect x="429" y="733.55" width="24" height="4.5" fill="#55cc00"/>
<rect x="576" y="733.55" width="157" height="4.5" fill="#55cc00"/>
<rect x="993" y="733.55" width="112" height="4.5" fill="#55cc00"/>
<rect x="1116" y="733.55" width="107" height="4.5" fill="#55cc00"/>
<rect x="1263" y="733.55" width="29" height="4.5" fill="#55cc00"/>
<rect x="1489" y="733.55" width="23" height="4.5" fill="#55cc00"/>
<rect x="591" y="717.75" width="24" height="4.5" fill="#00ee77"/>
<rect x="655" y="717.75" width="117" height="4.5" fill="#00ee77"/>
<rect x="1072" y="717.75" width="171" height="4.5" fill="#00ee77"/>
<rect x="1263" y="717.75" width="24" height="4.5" fill="#00ee77"/>
<rect x="596" y="700.55" width="137" height="4.5" fill="#00dcff"/>
<rect x="1091" y="700.55" width="29" height="4.5" fill="#00dcff"/>
<rect x="1199" y="700.55" width="24" height="4.5" fill="#00dcff"/>
<rect x="1273" y="700.55" width="53" height="4.5" fill="#00dcff"/>
<rect x="1111" y="684.45" width="24" height="4.5" fill="#0018cc"/>
<path d="M113 834h8M117 830v8M240.7 834h8M244.7 830v8M510.8 834h8M514.8 830v8M706.7 834h8M710.7 830v8M832.7 834h8M836.7 830v8M961.8 834h8M965.8 830v8M985.7 834h8M989.7 830v8M1115.8 834h8M1119.8 830v8M1294.7 834h8M1298.7 830v8M1341.8 834h8M1345.8 830v8M1412.7 834h8M1416.7 830v8M1481.8 834h8M1485.8 830v8M1530.7 834h8M1534.7 830v8M1731.8 834h8M1735.8 830v8M1766 834h8M1770 830v8M171.8 818h8M175.8 814v8M255.7 818h8M259.7 814v8M323 818h8M327 814v8M436.8 818h8M440.8 814v8M598.8 818h8M602.8 814v8M716.7 818h8M720.7 814v8M792.7 818h8M796.7 814v8M938.8 818h8M942.8 814v8M1005.8 818h8M1009.8 814v8M1152.8 818h8M1156.8 814v8M1251 818h8M1255 814v8M1299.8 818h8M1303.8 814v8M1348.8 818h8M1352.8 814v8M1402.7 818h8M1406.7 814v8M1467 818h8M1471 814v8M1554.8 818h8M1558.8 814v8M174 802h8M178 798v8M378 802h8M382 798v8M544.8 802h8M548.8 798v8M681.8 802h8M685.8 798v8M740.7 802h8M744.7 798v8M1074.8 802h8M1078.8 798v8M1216.8 802h8M1220.8 798v8M1304.8 802h8M1308.8 798v8M1467 802h8M1471 798v8M1559.8 802h8M1563.8 798v8M201.8 785h8M205.8 781v8M399.7 785h8M403.7 781v8M524.7 785h8M528.7 781v8M638.8 785h8M642.8 781v8M814.7 785h8M818.7 781v8M958.8 785h8M962.8 781v8M1039.7 785h8M1043.7 781v8M1187.7 785h8M1191.7 781v8M1250.7 785h8M1254.7 781v8M1324.7 785h8M1328.7 781v8M1402.7 785h8M1406.7 781v8M1545.7 785h8M1549.7 781v8M356 768.8h8M360 764.8v8M426 768.8h8M430 764.8v8M475.7 768.8h8M479.7 764.8v8M534.7 768.8h8M538.7 764.8v8M571 768.8h8M575 764.8v8M631 768.8h8M635 764.8v8M973.7 768.8h8M977.7 764.8v8M1069.8 768.8h8M1073.8 764.8v8M1108.8 768.8h8M1112.8 764.8v8M1178 768.8h8M1182 764.8v8M1255.7 768.8h8M1259.7 764.8v8M1467 768.8h8M1471 764.8v8M426.5 751.8h8M430.5 747.8v8M539.7 751.8h8M543.7 747.8v8M573.7 751.8h8M577.7 747.8v8M703.7 751.8h8M707.7 747.8v8M1093.8 751.8h8M1097.8 747.8v8M1270.7 751.8h8M1274.7 747.8v8M1476.7 751.8h8M1480.7 747.8v8M436.8 735.8h8M440.8 731.8v8M630.8 735.8h8M634.8 731.8v8M1038.8 735.8h8M1042.8 731.8v8M1167.8 735.8h8M1171.8 731.8v8M1274.8 735.8h8M1278.8 731.8v8M1496.7 735.8h8M1500.7 731.8v8M598.7 720h8M602.7 716v8M726.8 720h8M730.8 716v8M1187.8 720h8M1191.8 716v8M1270.8 720h8M1274.8 716v8M686.8 702.8h8M690.8 698.8v8M1101.8 702.8h8M1105.8 698.8v8M1206.8 702.8h8M1210.8 698.8v8M1299.8 702.8h8M1303.8 698.8v8M1118.8 686.7h8M1122.8 682.7v8" stroke="#fff" stroke-width="2.3"/>
<g fill="#fff" font-size="10.5"><text x="117" y="831.8" text-anchor="middle">KSE</text><text x="254.9" y="831.8" text-anchor="middle">ETA</text><text x="495" y="831.8" text-anchor="middle">NZC</text><text x="710.75" y="831.8" text-anchor="middle">NDA</text><text x="852.9" y="831.8" text-anchor="middle">SPE</text><text x="945.5" y="831.8" text-anchor="middle">ARD</text><text x="1024.6" y="831.8" text-anchor="middle">EGE</text><text x="1142.5" y="831.8" text-anchor="middle">NTA</text><text x="1283.75" y="831.8" text-anchor="middle">MON</text><text x="1343.4" y="831.8" text-anchor="middle">URS</text><text x="1411.9" y="831.8" text-anchor="middle">AHY</text><text x="1485.6" y="831.8" text-anchor="middle">GUM</text><text x="1535.5" y="831.8" text-anchor="middle">OHY</text><text x="1735.6" y="831.8" text-anchor="middle">XHE</text><text x="1769.6" y="831.8" text-anchor="middle">EVI</text><text x="175.4" y="814.9" text-anchor="middle">AVB</text><text x="254.75" y="814.9" text-anchor="middle">ELY</text><text x="323.9" y="814.9" text-anchor="middle">CAM</text><text x="431.9" y="814.9" text-anchor="middle">SSG</text><text x="578.75" y="814.9" text-anchor="middle">PCA</text><text x="720.6" y="814.9" text-anchor="middle">AUD</text><text x="808.4" y="814.9" text-anchor="middle">AUR</text><text x="931.25" y="814.9" text-anchor="middle">DSX</text><text x="1009.75" y="814.9" text-anchor="middle">OCU</text><text x="1137.1" y="814.9" text-anchor="middle">OER</text><text x="1254.75" y="814.9" text-anchor="middle">DKD</text><text x="1304.1" y="814.9" text-anchor="middle">DSV</text><text x="1353.1" y="814.9" text-anchor="middle">ALY</text><text x="1407.75" y="814.9" text-anchor="middle">JLE</text><text x="1471.6" y="814.9" text-anchor="middle">SCC</text><text x="1559.25" y="814.9" text-anchor="middle">FEV</text><text x="176.25" y="799.4" text-anchor="middle">LYR</text><text x="372.25" y="799.4" text-anchor="middle">JMC</text><text x="558.75" y="799.4" text-anchor="middle">JPE</text><text x="671.5" y="799.4" text-anchor="middle">PAU</text><text x="774.25" y="799.4" text-anchor="middle">NIA</text><text x="1049.6" y="799.4" text-anchor="middle">STA</text><text x="1205.4" y="799.4" text-anchor="middle">NOO</text><text x="1353.4" y="799.4" text-anchor="middle">COM</text><text x="1470.5" y="799.4" text-anchor="middle">NCC</text><text x="1563.25" y="799.4" text-anchor="middle">FED</text><text x="205" y="783.4" text-anchor="middle">HVI</text><text x="411.9" y="783.4" text-anchor="middle">ARI</text><text x="529.9" y="783.4" text-anchor="middle">SZC</text><text x="617.75" y="783.4" text-anchor="middle">CAP</text><text x="818.5" y="783.4" text-anchor="middle">NUE</text><text x="961.25" y="783.4" text-anchor="middle">OCT</text><text x="1059.6" y="783.4" text-anchor="middle">ORI</text><text x="1186.5" y="783.4" text-anchor="middle">AMO</text><text x="1255" y="783.4" text-anchor="middle">DPC</text><text x="1329" y="783.4" text-anchor="middle">XVI</text><text x="1407.75" y="783.4" text-anchor="middle">QUA</text><text x="1559.6" y="783.4" text-anchor="middle">AAN</text><text x="353.1" y="766.5" text-anchor="middle">TAH</text><text x="431.4" y="766.5" text-anchor="middle">JEA</text><text x="480.25" y="766.5" text-anchor="middle">JIP</text><text x="538.75" y="766.5" text-anchor="middle">PPS</text><text x="578.75" y="766.5" text-anchor="middle">ZCS</text><text x="632.9" y="766.5" text-anchor="middle">GDR</text><text x="970.25" y="766.5" text-anchor="middle">DRA</text><text x="1073.4" y="766.5" text-anchor="middle">LUM</text><text x="1112.9" y="766.5" text-anchor="middle">RPU</text><text x="1176.25" y="766.5" text-anchor="middle">THA</text><text x="1259.4" y="766.5" text-anchor="middle">PSU</text><text x="1470.6" y="766.5" text-anchor="middle">XCB</text><text x="431.6" y="750.05" text-anchor="middle">JRC</text><text x="544.4" y="750.05" text-anchor="middle">CAN</text><text x="578.25" y="750.05" text-anchor="middle">FAN</text><text x="681.25" y="750.05" text-anchor="middle">PER</text><text x="1049.25" y="750.05" text-anchor="middle">CTA</text><text x="1264.4" y="750.05" text-anchor="middle">HYD</text><text x="1481.25" y="750.05" text-anchor="middle">XUM</text><text x="441.5" y="733.7" text-anchor="middle">COR</text><text x="657.1" y="733.7" text-anchor="middle">SDA</text><text x="1048.75" y="733.7" text-anchor="middle">LMI</text><text x="1166.25" y="733.7" text-anchor="middle">LEO</text><text x="1274.6" y="733.7" text-anchor="middle">EHY</text><text x="1499.6" y="733.7" text-anchor="middle">ECV</text><text x="602.5" y="717.35" text-anchor="middle">JXA</text><text x="715" y="717.35" text-anchor="middle">KCG</text><text x="1156.75" y="717.35" text-anchor="middle">AND</text><text x="1274.75" y="717.35" text-anchor="middle">DAD</text><text x="666.6" y="701" text-anchor="middle">ERI</text><text x="1108.5" y="701" text-anchor="middle">SLD</text><text x="1211.25" y="701" text-anchor="middle">ORS</text><text x="1299.1" y="701" text-anchor="middle">GEM</text><text x="1122.9" y="684.65" text-anchor="middle">KUM</text></g>
<rect x="19.67" y="641.5" width="1765.93" height="200.7" fill="none" stroke="#fff" stroke-width="1.4"/>
<text x="19.67" y="861.7" fill="#fff" font-size="14" text-anchor="middle" textLength="8.34" lengthAdjust="spacingAndGlyphs">0</text>
<text x="264.92" y="861.7" fill="#fff" font-size="14" text-anchor="middle" textLength="17.18" lengthAdjust="spacingAndGlyphs">50</text>
<text x="510.17" y="861.7" fill="#fff" font-size="14" text-anchor="middle" textLength="26.02" lengthAdjust="spacingAndGlyphs">100</text>
<text x="755.42" y="861.7" fill="#fff" font-size="14" text-anchor="middle" textLength="26.02" lengthAdjust="spacingAndGlyphs">150</text>
<text x="1000.67" y="861.7" fill="#fff" font-size="14" text-anchor="middle" textLength="26.02" lengthAdjust="spacingAndGlyphs">200</text>
<text x="1245.92" y="861.7" fill="#fff" font-size="14" text-anchor="middle" textLength="26.02" lengthAdjust="spacingAndGlyphs">250</text>
<text x="1491.17" y="861.7" fill="#fff" font-size="14" text-anchor="middle" textLength="26.02" lengthAdjust="spacingAndGlyphs">300</text>
<text x="1736.42" y="861.7" fill="#fff" font-size="14" text-anchor="middle" textLength="26.02" lengthAdjust="spacingAndGlyphs">350</text>
<path d="M19.67 842.2v4.9M264.92 842.2v4.9M510.17 842.2v4.9M755.42 842.2v4.9M1000.67 842.2v4.9M1245.92 842.2v4.9M1491.17 842.2v4.9M1736.42 842.2v4.9" stroke="#fff" stroke-width="1.1"/>
<text x="902.3" y="881.7" fill="#fff" font-size="13.9" text-anchor="middle" textLength="147.5" lengthAdjust="spacingAndGlyphs">Solar longitude (deg)</text>
</svg></body></html>
